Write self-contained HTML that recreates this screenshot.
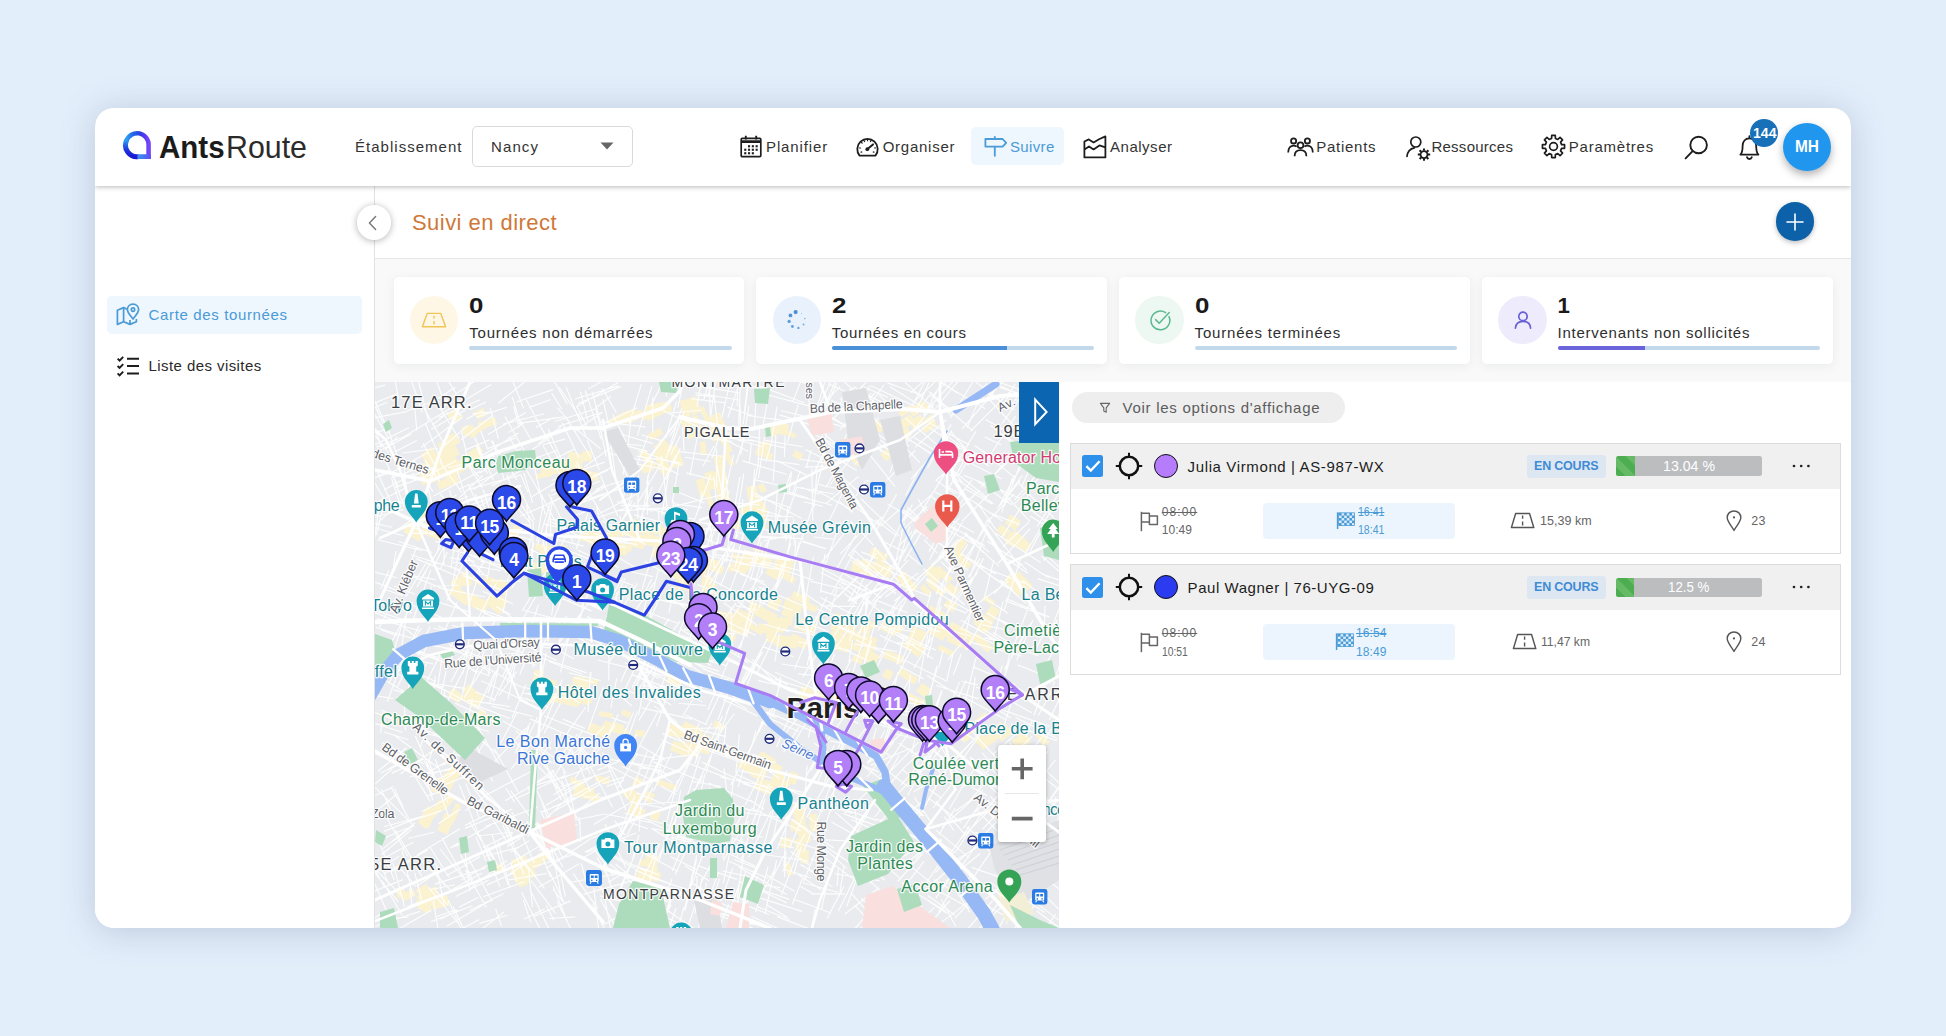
<!DOCTYPE html>
<html lang="fr"><head><meta charset="utf-8"><title>AntsRoute - Suivi en direct</title>
<style>
html,body{margin:0;padding:0}
body{width:1946px;height:1036px;overflow:hidden;background:#e3eefb;font-family:"Liberation Sans",sans-serif;color:#222;position:relative}
.app{position:absolute;left:95px;top:108px;width:1756px;height:820px;border-radius:19px;background:#fff;box-shadow:0 3px 34px rgba(80,100,135,.27);overflow:hidden}
.inner{position:absolute;left:-95px;top:-108px;width:1946px;height:1036px}
.inner div,.inner svg,.inner span.t{position:absolute}
span.t{white-space:nowrap;display:block}
s{text-decoration:line-through}
text.ml{font-family:"Liberation Sans",sans-serif;paint-order:stroke;stroke:#fff;stroke-width:2.6px;stroke-opacity:.85;stroke-linejoin:round}
text.pn{font-family:"Liberation Sans",sans-serif;font-weight:700;font-size:17.5px;fill:#fff;letter-spacing:-.3px}

</style></head>
<body>
<div class="app"><div class="inner">
<div style="left:95px;top:186px;width:279px;height:742px;background:#fff;border-right:1px solid #e2e2e2"></div>
<div style="left:375px;top:186px;width:1476px;height:72px;background:#fff;border-bottom:1px solid #e6e6e6"></div>
<div style="left:375px;top:259px;width:1476px;height:123px;background:#f9f9f9"></div>
<div style="left:1059px;top:382px;width:792px;height:546px;background:#fff"></div>
<div style="left:95px;top:108px;width:1756px;height:78px;background:#fff;box-shadow:0 1px 5px rgba(0,0,0,.28);z-index:5"></div>
<div style="left:0;top:0;width:1946px;height:1036px;z-index:6">
<svg style="left:121px;top:129px;" width="32" height="32" viewBox="0 0 32 32"><defs>
<linearGradient id="lg1" x1="0" y1="0" x2="1" y2="0"><stop offset="0" stop-color="#2e9ff3"/><stop offset=".3" stop-color="#2466e6"/><stop offset=".62" stop-color="#2b3fe2"/><stop offset=".85" stop-color="#6238f2"/><stop offset="1" stop-color="#7346f7"/></linearGradient>
<linearGradient id="lg2" x1="0" y1="0" x2="0" y2="1"><stop offset="0" stop-color="#2e9ff3"/><stop offset=".55" stop-color="#2038dc"/><stop offset="1" stop-color="#1a18d2"/></linearGradient>
<linearGradient id="lg3" gradientUnits="userSpaceOnUse" x1="15" y1="0" x2="30.5" y2="0"><stop offset="0" stop-color="#3b96f4"/><stop offset=".6" stop-color="#4a6cf3"/><stop offset="1" stop-color="#6a44f6"/></linearGradient>
</defs>
<path d="M27.6 29.9 V16.2 A11.4 11.4 0 0 0 5.4 12" fill="none" stroke="url(#lg1)" stroke-width="4.5"/>
<path d="M5.7 11.2 A11.4 11.4 0 0 0 17.6 27.5" fill="none" stroke="url(#lg2)" stroke-width="5"/>
<path d="M16.4 27.55 H29.85" fill="none" stroke="url(#lg3)" stroke-width="4.7"/></svg>
<span class="t" style="left:158.6px;top:133.34px;font-size:30.9px;line-height:30.9px;font-weight:700;color:#1b1b1b;transform:scaleX(0.9555);transform-origin:0 0;">Ants</span>
<span class="t" style="left:226.2px;top:133.34px;font-size:30.9px;line-height:30.9px;color:#2b2b2b;transform:scaleX(0.9826);transform-origin:0 0;">Route</span>
<span class="t" style="left:355px;top:138.80px;font-size:15px;line-height:15px;color:#333;letter-spacing:1.023px;">Établissement</span>
<div style="left:472px;top:126px;width:161px;height:41px;border:1px solid #d9d9d9;border-radius:5px;box-sizing:border-box;background:#fff"></div>
<span class="t" style="left:491px;top:138.80px;font-size:15px;line-height:15px;color:#333;letter-spacing:1.117px;">Nancy</span>
<svg style="left:600px;top:142px;" width="14" height="8" viewBox="0 0 14 8"><path d="M0.5 0.5 H13.5 L7 7.6 Z" fill="#666"/></svg>
<svg style="left:740px;top:135px;" width="22" height="23" viewBox="0 0 22 23"><g fill="none" stroke="#1d1d1d" stroke-width="1.7"><rect x="1.2" y="3.4" width="19.6" height="18.2" rx="1"/><path d="M1.2 6.6H20.8" stroke-width="2.6"/><path d="M5.8 0.8V4.6M16.2 0.8V4.6" stroke-width="1.9"/></g>
<g fill="#1d1d1d"><rect x="8.0" y="10.2" width="2.1" height="2.1"/><rect x="11.8" y="10.2" width="2.1" height="2.1"/><rect x="15.6" y="10.2" width="2.1" height="2.1"/><rect x="4.2" y="13.7" width="2.1" height="2.1"/><rect x="8.0" y="13.7" width="2.1" height="2.1"/><rect x="11.8" y="13.7" width="2.1" height="2.1"/><rect x="15.6" y="13.7" width="2.1" height="2.1"/><rect x="4.2" y="17.2" width="2.1" height="2.1"/><rect x="8.0" y="17.2" width="2.1" height="2.1"/><rect x="11.8" y="17.2" width="2.1" height="2.1"/></g></svg>
<span class="t" style="left:766px;top:138.70px;font-size:15px;line-height:15px;color:#333;letter-spacing:0.875px;">Planifier</span>
<svg style="left:856px;top:136px;" width="23" height="21" viewBox="0 0 23 21"><g fill="none" stroke="#1d1d1d" stroke-width="1.8"><path d="M3.6 19.6 A10.2 10.2 0 1 1 19.4 19.6 Z" stroke-linejoin="round"/><path d="M11.5 13 L17 8.4" stroke-width="2" stroke-linecap="round"/></g><circle cx="11.3" cy="13.2" r="1.9" fill="#1d1d1d"/>
<g stroke="#1d1d1d" stroke-width="1.2"><path d="M11.5 3.2v2M5.2 6.2l1.3 1.3M3 12h1.9M18.1 12H20M4.6 16.4l1.6-.7M16.8 15.7l1.6.7M7.9 4.2l.8 1.7M15.1 4.2l-.8 1.7"/></g></svg>
<span class="t" style="left:882.7px;top:138.70px;font-size:15px;line-height:15px;color:#333;letter-spacing:0.743px;">Organiser</span>
<div style="left:970.5px;top:127px;width:93.5px;height:38.2px;background:#eef6fe;border-radius:5px"></div>
<svg style="left:983px;top:135px;" width="25" height="23" viewBox="0 0 25 23"><g fill="none" stroke="#4a9bd6" stroke-width="1.8" stroke-linejoin="round"><path d="M2.4 4 H19.6 L23.2 7.8 L19.6 11.6 H2.4 Z"/><path d="M11.8 1.8V4M11.8 11.6V20.8" stroke-linecap="round"/></g></svg>
<span class="t" style="left:1010px;top:138.70px;font-size:15px;line-height:15px;color:#4a9bd6;letter-spacing:0.354px;">Suivre</span>
<svg style="left:1083px;top:135px;" width="24" height="24" viewBox="0 0 24 24"><g fill="none" stroke="#1d1d1d" stroke-width="1.8" stroke-linejoin="round"><path d="M1.4 6.5 L5.8 4.4 L10.6 7.4 L16 4.2 L22.4 1.4 V22.4 H1.4 Z"/><path d="M1.4 14.6 L6 11.4 L10.6 14.4 L16.4 10.4 L22.4 12.4"/></g></svg>
<span class="t" style="left:1110px;top:138.70px;font-size:15px;line-height:15px;color:#333;letter-spacing:0.520px;">Analyser</span>
<svg style="left:1287px;top:137px;" width="27" height="20" viewBox="0 0 27 20"><g fill="none" stroke="#1d1d1d" stroke-width="1.8"><circle cx="6.6" cy="3.9" r="2.6"/><circle cx="20.4" cy="3.9" r="2.6"/><circle cx="13.5" cy="8.3" r="2.9"/>
<path d="M1.2 15.6 C1.2 10.6 4 8.6 6.6 8.6 C8 8.6 8.8 9 9.6 9.6M25.8 15.6 C25.8 10.6 23 8.6 20.4 8.6 C19 8.6 18.2 9 17.4 9.6M7.6 19.2 C7.6 15.2 10 13.2 13.5 13.2 C17 13.2 19.4 15.2 19.4 19.2"/></g></svg>
<span class="t" style="left:1316.2px;top:138.70px;font-size:15px;line-height:15px;color:#333;letter-spacing:0.742px;">Patients</span>
<svg style="left:1405px;top:135px;" width="27" height="27" viewBox="0 0 27 27"><g fill="none" stroke="#1d1d1d" stroke-width="1.7"><circle cx="10.8" cy="7" r="5"/><path d="M2 21.4 C2.6 15.6 6 13.4 9.4 12.8" stroke-linecap="round"/></g>
<g transform="translate(19 19.6)"><circle r="3.5" fill="none" stroke="#1d1d1d" stroke-width="1.8"/><g stroke="#1d1d1d" stroke-width="2"><path d="M0-6.2V-4M0 6.2V4M-6.2 0H-4M6.2 0H4M-4.4-4.4l1.5 1.5M4.4 4.4l-1.5-1.5M-4.4 4.4l1.5-1.5M4.4-4.4l-1.5 1.5"/></g></g></svg>
<span class="t" style="left:1431.4px;top:138.70px;font-size:15px;line-height:15px;color:#333;letter-spacing:0.266px;">Ressources</span>
<svg style="left:1541px;top:134px;" width="25" height="25" viewBox="0 0 25 25"><g transform="translate(12.5 12.5)"><path d="M-1.78 -11.06 L1.78 -11.06 L1.93 -8.07 L4.34 -7.07 L6.56 -9.08 L9.08 -6.56 L7.07 -4.34 L8.07 -1.93 L11.06 -1.78 L11.06 1.78 L8.07 1.93 L7.07 4.34 L9.08 6.56 L6.56 9.08 L4.34 7.07 L1.93 8.07 L1.78 11.06 L-1.78 11.06 L-1.93 8.07 L-4.34 7.07 L-6.56 9.08 L-9.08 6.56 L-7.07 4.34 L-8.07 1.93 L-11.06 1.78 L-11.06 -1.78 L-8.07 -1.93 L-7.07 -4.34 L-9.08 -6.56 L-6.56 -9.08 L-4.34 -7.07 L-1.93 -8.07Z" fill="none" stroke="#1d1d1d" stroke-width="1.7" stroke-linejoin="round"/><circle r="3.9" fill="none" stroke="#1d1d1d" stroke-width="1.7"/></g></svg>
<span class="t" style="left:1568.8px;top:138.70px;font-size:15px;line-height:15px;color:#333;letter-spacing:0.763px;">Paramètres</span>
<svg style="left:1684px;top:135px;" width="26" height="25" viewBox="0 0 26 25"><g fill="none" stroke="#1d1d1d" stroke-width="1.9" stroke-linecap="round"><circle cx="14.6" cy="10" r="8.3"/><path d="M8.6 16.2 L1.6 23.4"/></g></svg>
<svg style="left:1739px;top:135px;" width="21" height="26" viewBox="0 0 21 26"><g fill="none" stroke="#1d1d1d" stroke-width="1.8" stroke-linejoin="round"><path d="M1.4 19.6 C3.4 17.8 3.6 15.4 3.6 11 C3.6 6.4 6.2 3.4 10.4 3.4 C14.6 3.4 17.2 6.4 17.2 11 C17.2 15.4 17.4 17.8 19.4 19.6 Z"/><path d="M10.4 3.2V1.2M8 22.2 A2.5 2.5 0 0 0 12.8 22.2" stroke-linecap="round"/></g></svg>
<div style="left:1750.3px;top:119.4px;width:27.8px;height:27.8px;background:#1870b8;border-radius:50%"></div>
<span class="t" style="left:1752.8px;top:125.93px;font-size:14.5px;line-height:14.5px;font-weight:700;color:#fff;transform:scaleX(0.9709);transform-origin:0 0;">144</span>
<div style="left:1783.3px;top:122.9px;width:48px;height:48px;background:#2096ee;border-radius:50%;box-shadow:0 4px 9px rgba(0,0,0,.30)"></div>
<span class="t" style="left:1795.2px;top:139.06px;font-size:16px;line-height:16px;font-weight:700;color:#fff;transform:scaleX(0.9642);transform-origin:0 0;">MH</span>
</div>
<div style="left:356.5px;top:205.3px;width:34.6px;height:34.6px;background:#fff;border-radius:50%;box-shadow:0 1px 7px rgba(0,0,0,.30);z-index:4"></div>
<svg style="left:366px;top:214px;z-index:4" width="14" height="18" viewBox="0 0 14 18"><path d="M9.6 2.4 L3.4 9 L9.6 15.6" fill="none" stroke="#777" stroke-width="1.4" stroke-linecap="round" stroke-linejoin="round"/></svg>
<span class="t" style="left:412px;top:211.68px;font-size:22px;line-height:22px;color:#cf7838;letter-spacing:0.451px;">Suivi en direct</span>
<div style="left:1775.6px;top:202.1px;width:38.8px;height:38.8px;background:#0d61a9;border-radius:50%;box-shadow:0 2px 5px rgba(0,0,0,.25)"></div>
<svg style="left:1785px;top:211.5px;" width="20" height="20" viewBox="0 0 20 20"><path d="M10 2V18M2 10H18" stroke="#fff" stroke-width="1.6" stroke-linecap="round"/></svg>
<div style="left:107px;top:295.5px;width:255px;height:38.5px;background:#eef6fe;border-radius:5px"></div>
<svg style="left:116px;top:303px;" width="24" height="23" viewBox="0 0 24 23"><g fill="none" stroke="#4a9bd6" stroke-width="1.7" stroke-linejoin="round"><path d="M11 6.2 L7.6 4.6 L1.4 7.2 V21.4 L7.6 18.8 L14 21.4 L20.4 18.8 V16"/><path d="M7.6 4.6V18.8M14 17V21.4"/><path d="M17 1.2 C13.6 1.2 11.4 3.6 11.4 6.6 C11.4 10 14.6 12.8 17 16 C19.4 12.8 22.6 10 22.6 6.6 C22.6 3.6 20.4 1.2 17 1.2 Z"/><circle cx="17" cy="6.6" r="1.7"/></g></svg>
<span class="t" style="left:148.6px;top:306.90px;font-size:15px;line-height:15px;color:#4a9bd6;letter-spacing:0.637px;">Carte des tournées</span>
<svg style="left:116px;top:356px;" width="24" height="22" viewBox="0 0 24 22"><g fill="none" stroke="#1d1d1d" stroke-width="2"><path d="M11 2.7H23M11 10.1H23M11 17.5H23" stroke-width="2"/><path d="M1.6 2.6 L3.6 4.6 L7.2 0.8M1.6 10 L3.6 12 L7.2 8.2M1.6 17.4 L3.6 19.4 L7.2 15.6" stroke-width="1.9"/></g></svg>
<span class="t" style="left:148.6px;top:358.30px;font-size:15px;line-height:15px;color:#2a2a2a;letter-spacing:0.419px;">Liste des visites</span>
<div style="left:393.7px;top:276.6px;width:350.5px;height:87.2px;background:#fff;border-radius:5px;box-shadow:0 2px 10px rgba(120,130,150,.12)"></div>
<div style="left:410px;top:296px;width:48.4px;height:48.4px;background:#fef7e6;border-radius:50%"></div>
<svg style="left:420.2px;top:306.2px;" width="28" height="28" viewBox="0 0 28 28"><g fill="none" stroke="#efc558" stroke-width="1.4" stroke-linejoin="round"><path d="M7.2 7.4 H20.8 L25.6 20.8 H2.4 Z"/><path d="M14 9.8v2.6M14 15v3.4" stroke-width="1.4"/></g></svg>
<span class="t" style="left:469.3px;top:295.32px;font-size:22.3px;line-height:22.3px;font-weight:700;color:#1a1a1a;transform:scaleX(1.1600);transform-origin:0 0;">0</span>
<span class="t" style="left:469.3px;top:325.10px;font-size:15px;line-height:15px;color:#2e2e2e;letter-spacing:0.787px;">Tournées non démarrées</span>
<div style="left:469.3px;top:345.6px;width:262.6px;height:4.3px;background:#c2d8eb;border-radius:2px"></div>
<div style="left:756.2px;top:276.6px;width:350.5px;height:87.2px;background:#fff;border-radius:5px;box-shadow:0 2px 10px rgba(120,130,150,.12)"></div>
<div style="left:772.5px;top:296px;width:48.4px;height:48.4px;background:#e9f2fc;border-radius:50%"></div>
<svg style="left:782.7px;top:306.2px;" width="28" height="28" viewBox="0 0 28 28"><g fill="#4a8fd6"><circle cx="12.61" cy="6.12" r="2.10" opacity="1.00"/><circle cx="7.45" cy="9.41" r="1.88" opacity="0.94"/><circle cx="6.12" cy="15.39" r="1.66" opacity="0.88"/><circle cx="9.41" cy="20.55" r="1.44" opacity="0.82"/><circle cx="15.39" cy="21.88" r="1.22" opacity="0.76"/><circle cx="20.55" cy="18.59" r="1.00" opacity="0.70"/><circle cx="21.88" cy="12.61" r="0.78" opacity="0.64"/><circle cx="18.59" cy="7.45" r="0.56" opacity="0.58"/></g></svg>
<span class="t" style="left:831.8px;top:295.32px;font-size:22.3px;line-height:22.3px;font-weight:700;color:#1a1a1a;transform:scaleX(1.1600);transform-origin:0 0;">2</span>
<span class="t" style="left:831.8px;top:325.10px;font-size:15px;line-height:15px;color:#2e2e2e;letter-spacing:0.675px;">Tournées en cours</span>
<div style="left:831.8px;top:345.6px;width:262.6px;height:4.3px;background:#c2d8eb;border-radius:2px"></div>
<div style="left:831.8px;top:345.6px;width:175px;height:4.3px;background:#4a90d9;border-radius:2px 0 0 2px"></div>
<div style="left:1119px;top:276.6px;width:350.5px;height:87.2px;background:#fff;border-radius:5px;box-shadow:0 2px 10px rgba(120,130,150,.12)"></div>
<div style="left:1135.3px;top:296px;width:48.4px;height:48.4px;background:#edf8f2;border-radius:50%"></div>
<svg style="left:1145.5px;top:306.2px;" width="28" height="28" viewBox="0 0 28 28"><g fill="none" stroke="#5cb891" stroke-width="1.5" stroke-linecap="round" stroke-linejoin="round"><path d="M23 10.6 A9.4 9.4 0 1 1 19.6 6.6"/><path d="M9.6 13.6 L13.2 17.2 L23.2 6.6"/></g></svg>
<span class="t" style="left:1194.6px;top:295.32px;font-size:22.3px;line-height:22.3px;font-weight:700;color:#1a1a1a;transform:scaleX(1.1600);transform-origin:0 0;">0</span>
<span class="t" style="left:1194.6px;top:325.10px;font-size:15px;line-height:15px;color:#2e2e2e;letter-spacing:0.816px;">Tournées terminées</span>
<div style="left:1194.6px;top:345.6px;width:262.6px;height:4.3px;background:#c2d8eb;border-radius:2px"></div>
<div style="left:1482px;top:276.6px;width:350.5px;height:87.2px;background:#fff;border-radius:5px;box-shadow:0 2px 10px rgba(120,130,150,.12)"></div>
<div style="left:1498.3px;top:296px;width:48.4px;height:48.4px;background:#eeecfc;border-radius:50%"></div>
<svg style="left:1508.5px;top:306.2px;" width="28" height="28" viewBox="0 0 28 28"><g fill="none" stroke="#6a60d6" stroke-width="1.7" stroke-linecap="round"><circle cx="14" cy="10.4" r="4.2"/><path d="M6.4 22.2 C6.8 17.4 10 15.4 14 15.4 C18 15.4 21.2 17.4 21.6 22.2"/></g></svg>
<span class="t" style="left:1557.6px;top:295.32px;font-size:22.3px;line-height:22.3px;font-weight:700;color:#1a1a1a;transform:scaleX(1.0000);transform-origin:0 0;">1</span>
<span class="t" style="left:1557.6px;top:325.10px;font-size:15px;line-height:15px;color:#2e2e2e;letter-spacing:0.738px;">Intervenants non sollicités</span>
<div style="left:1557.6px;top:345.6px;width:262.6px;height:4.3px;background:#c2d8eb;border-radius:2px"></div>
<div style="left:1557.6px;top:345.6px;width:87.6px;height:4.3px;background:#6b63da;border-radius:2px 0 0 2px"></div>
<div style="left:1072.2px;top:392.4px;width:272.8px;height:31px;background:#eeeeee;border-radius:16px"></div>
<svg style="left:1099px;top:402px;" width="12" height="12" viewBox="0 0 12 12"><path d="M1.4 1.4 H10.6 L7.2 5.8 V10.2 L4.8 9 V5.8 Z" fill="none" stroke="#666" stroke-width="1.1" stroke-linejoin="round"/></svg>
<span class="t" style="left:1122.6px;top:400.30px;font-size:15px;line-height:15px;color:#5c5c5c;letter-spacing:0.714px;">Voir les options d'affichage</span>
<div style="left:1069.5px;top:443.3px;width:1771.5px;height:110.4px;border:1px solid #dcdcdc;box-sizing:border-box;background:#fff;width:771.5px"></div>
<div style="left:1070.5px;top:444.3px;width:769.5px;height:45px;background:#f0f0f0"></div>
<div style="left:1081.6px;top:455.4px;width:21.6px;height:21.6px;background:#2e90ea;border-radius:2.5px"></div>
<svg style="left:1081.6px;top:455.4px;" width="21.6" height="21.6" viewBox="0 0 21.6 21.6"><path d="M4.4 11.2 L8.8 15.6 L17.6 6.2" fill="none" stroke="#fff" stroke-width="2.4"/></svg>
<svg style="left:1115px;top:452.2px;" width="28" height="28" viewBox="0 0 28 28"><g fill="none" stroke="#111" stroke-width="2.5"><circle cx="14" cy="14" r="9.2"/><path d="M14 0.8V6M14 22V27.2M0.8 14H6M22 14H27.2" stroke-width="2"/></g></svg>
<div style="left:1153.6px;top:454px;width:24.4px;height:24.4px;background:#b57dfc;border-radius:50%;border:1.9px solid #111;box-sizing:border-box"></div>
<span class="t" style="left:1187.6px;top:458.90px;font-size:15px;line-height:15px;color:#1c1c1c;letter-spacing:0.625px;">Julia Virmond | AS-987-WX</span>
<div style="left:1526.6px;top:454.6px;width:79.4px;height:23.2px;background:#dde7f2;border-radius:3px"></div>
<span class="t" style="left:1534px;top:460.22px;font-size:12.5px;line-height:12.5px;font-weight:700;color:#3f8bd4;letter-spacing:-0.198px;">EN COURS</span>
<div style="left:1615.9px;top:456.4px;width:146.2px;height:19.6px;background:#bbbdbf;border-radius:2.5px"></div>
<div style="left:1615.9px;top:456.4px;width:19px;height:19.6px;border-radius:2.5px 0 0 2.5px;background:repeating-linear-gradient(45deg,#4cae50 0 7px,#66ba66 7px 14px)"></div>
<span class="t" style="left:1662.6px;top:459.13px;font-size:14.5px;line-height:14.5px;color:#fff;transform:scaleX(0.9771);transform-origin:0 0;">13.04 %</span>
<svg style="left:1791px;top:463.2px;" width="22" height="6" viewBox="0 0 22 6"><g fill="#222"><circle cx="3" cy="3" r="1.35"/><circle cx="10.2" cy="3" r="1.35"/><circle cx="17.4" cy="3" r="1.35"/></g></svg>
<svg style="left:1140px;top:510.8px;" width="19" height="21" viewBox="0 0 19 21"><g fill="none" stroke="#666" stroke-width="1.5" stroke-linejoin="round"><path d="M1.4 0.8V20.2"/><path d="M1.4 2.2 H9.4 V5 H17.4 V13.6 H9.4 V11 H1.4"/><path d="M9.4 5V11"/></g></svg>
<span class="t" style="left:1161.8px;top:506.24px;font-size:12px;line-height:12px;color:#666;letter-spacing:1.092px;"><s>08:00</s></span>
<span class="t" style="left:1161.8px;top:524.44px;font-size:12px;line-height:12px;color:#666;letter-spacing:0.042px;">10:49</span>
<div style="left:1263.2px;top:502.9px;width:191.6px;height:36.2px;background:#ecf5fd;border-radius:4px"></div>
<svg style="left:1336.4px;top:509.8px;" width="20" height="20" viewBox="0 0 20 20"><path d="M1.6 2.4V19" stroke="#4a9bd6" stroke-width="1.5"/><rect x="2.6" y="2.8" width="15.8" height="12.6" fill="#dcecfb" stroke="#4a9bd6" stroke-width="0.8"/><g fill="#4a9bd6"><rect x="3.0" y="3.0" width="2.6" height="2.6"/><rect x="3.0" y="8.0" width="2.6" height="2.6"/><rect x="3.0" y="13.0" width="2.6" height="2.6"/><rect x="5.6" y="5.5" width="2.6" height="2.6"/><rect x="5.6" y="10.5" width="2.6" height="2.6"/><rect x="8.2" y="3.0" width="2.6" height="2.6"/><rect x="8.2" y="8.0" width="2.6" height="2.6"/><rect x="8.2" y="13.0" width="2.6" height="2.6"/><rect x="10.8" y="5.5" width="2.6" height="2.6"/><rect x="10.8" y="10.5" width="2.6" height="2.6"/><rect x="13.4" y="3.0" width="2.6" height="2.6"/><rect x="13.4" y="8.0" width="2.6" height="2.6"/><rect x="13.4" y="13.0" width="2.6" height="2.6"/><rect x="16.0" y="5.5" width="2.6" height="2.6"/><rect x="16.0" y="10.5" width="2.6" height="2.6"/></g></svg>
<span class="t" style="left:1358px;top:506.24px;font-size:12px;line-height:12px;color:#4a9bd6;transform:scaleX(0.8791);transform-origin:0 0;"><s>16:41</s></span>
<span class="t" style="left:1358px;top:524.44px;font-size:12px;line-height:12px;color:#4a9bd6;transform:scaleX(0.8791);transform-origin:0 0;">18:41</span>
<svg style="left:1510.4px;top:511.8px;" width="26" height="18" viewBox="0 0 26 18"><g fill="none" stroke="#555" stroke-width="1.5" stroke-linejoin="round"><path d="M5.6 1.6 H19.6 L23.8 15.6 H1.4 Z"/><path d="M12.6 3.4v3.4M12.6 9.4v4" stroke-width="1.4"/></g></svg>
<span class="t" style="left:1540px;top:514.62px;font-size:12.5px;line-height:12.5px;color:#666;letter-spacing:0.025px;">15,39 km</span>
<svg style="left:1726.4px;top:510.2px;" width="16" height="22" viewBox="0 0 16 22"><g fill="none" stroke="#555" stroke-width="1.4"><path d="M8 1 C4 1 1.2 3.8 1.2 7.6 C1.2 11.6 5.2 15.6 8 20.4 C10.8 15.6 14.8 11.6 14.8 7.6 C14.8 3.8 12 1 8 1 Z" stroke-linejoin="round"/></g><circle cx="8" cy="7.4" r="1.1" fill="#555"/></svg>
<span class="t" style="left:1751.2px;top:514.62px;font-size:12.5px;line-height:12.5px;color:#666;letter-spacing:0.294px;">23</span>
<div style="left:1069.5px;top:564.4px;width:1771.5px;height:110.4px;border:1px solid #dcdcdc;box-sizing:border-box;background:#fff;width:771.5px"></div>
<div style="left:1070.5px;top:565.4px;width:769.5px;height:45px;background:#f0f0f0"></div>
<div style="left:1081.6px;top:576.5px;width:21.6px;height:21.6px;background:#2e90ea;border-radius:2.5px"></div>
<svg style="left:1081.6px;top:576.5px;" width="21.6" height="21.6" viewBox="0 0 21.6 21.6"><path d="M4.4 11.2 L8.8 15.6 L17.6 6.2" fill="none" stroke="#fff" stroke-width="2.4"/></svg>
<svg style="left:1115px;top:573.3px;" width="28" height="28" viewBox="0 0 28 28"><g fill="none" stroke="#111" stroke-width="2.5"><circle cx="14" cy="14" r="9.2"/><path d="M14 0.8V6M14 22V27.2M0.8 14H6M22 14H27.2" stroke-width="2"/></g></svg>
<div style="left:1153.6px;top:575.1px;width:24.4px;height:24.4px;background:#2b3cf0;border-radius:50%;border:1.9px solid #111;box-sizing:border-box"></div>
<span class="t" style="left:1187.6px;top:580.00px;font-size:15px;line-height:15px;color:#1c1c1c;letter-spacing:0.542px;">Paul Wagner | 76-UYG-09</span>
<div style="left:1526.6px;top:575.7px;width:79.4px;height:23.2px;background:#dde7f2;border-radius:3px"></div>
<span class="t" style="left:1534px;top:581.32px;font-size:12.5px;line-height:12.5px;font-weight:700;color:#3f8bd4;letter-spacing:-0.198px;">EN COURS</span>
<div style="left:1615.9px;top:577.5px;width:146.2px;height:19.6px;background:#bbbdbf;border-radius:2.5px"></div>
<div style="left:1615.9px;top:577.5px;width:18.4px;height:19.6px;border-radius:2.5px 0 0 2.5px;background:repeating-linear-gradient(45deg,#4cae50 0 7px,#66ba66 7px 14px)"></div>
<span class="t" style="left:1668px;top:580.23px;font-size:14.5px;line-height:14.5px;color:#fff;transform:scaleX(0.9168);transform-origin:0 0;">12.5 %</span>
<svg style="left:1791px;top:584.3px;" width="22" height="6" viewBox="0 0 22 6"><g fill="#222"><circle cx="3" cy="3" r="1.35"/><circle cx="10.2" cy="3" r="1.35"/><circle cx="17.4" cy="3" r="1.35"/></g></svg>
<svg style="left:1140px;top:631.9px;" width="19" height="21" viewBox="0 0 19 21"><g fill="none" stroke="#666" stroke-width="1.5" stroke-linejoin="round"><path d="M1.4 0.8V20.2"/><path d="M1.4 2.2 H9.4 V5 H17.4 V13.6 H9.4 V11 H1.4"/><path d="M9.4 5V11"/></g></svg>
<span class="t" style="left:1161.8px;top:627.34px;font-size:12px;line-height:12px;color:#666;letter-spacing:1.092px;"><s>08:00</s></span>
<span class="t" style="left:1161.8px;top:645.54px;font-size:12px;line-height:12px;color:#666;transform:scaleX(0.8591);transform-origin:0 0;">10:51</span>
<div style="left:1263.2px;top:624px;width:191.6px;height:36.2px;background:#ecf5fd;border-radius:4px"></div>
<svg style="left:1334.8px;top:630.9px;" width="20" height="20" viewBox="0 0 20 20"><path d="M1.6 2.4V19" stroke="#4a9bd6" stroke-width="1.5"/><rect x="2.6" y="2.8" width="15.8" height="12.6" fill="#dcecfb" stroke="#4a9bd6" stroke-width="0.8"/><g fill="#4a9bd6"><rect x="3.0" y="3.0" width="2.6" height="2.6"/><rect x="3.0" y="8.0" width="2.6" height="2.6"/><rect x="3.0" y="13.0" width="2.6" height="2.6"/><rect x="5.6" y="5.5" width="2.6" height="2.6"/><rect x="5.6" y="10.5" width="2.6" height="2.6"/><rect x="8.2" y="3.0" width="2.6" height="2.6"/><rect x="8.2" y="8.0" width="2.6" height="2.6"/><rect x="8.2" y="13.0" width="2.6" height="2.6"/><rect x="10.8" y="5.5" width="2.6" height="2.6"/><rect x="10.8" y="10.5" width="2.6" height="2.6"/><rect x="13.4" y="3.0" width="2.6" height="2.6"/><rect x="13.4" y="8.0" width="2.6" height="2.6"/><rect x="13.4" y="13.0" width="2.6" height="2.6"/><rect x="16.0" y="5.5" width="2.6" height="2.6"/><rect x="16.0" y="10.5" width="2.6" height="2.6"/></g></svg>
<span class="t" style="left:1356px;top:627.34px;font-size:12px;line-height:12px;color:#4a9bd6;letter-spacing:0.092px;"><s>16:54</s></span>
<span class="t" style="left:1356px;top:645.54px;font-size:12px;line-height:12px;color:#4a9bd6;letter-spacing:0.092px;">18:49</span>
<svg style="left:1511.6px;top:632.9px;" width="26" height="18" viewBox="0 0 26 18"><g fill="none" stroke="#555" stroke-width="1.5" stroke-linejoin="round"><path d="M5.6 1.6 H19.6 L23.8 15.6 H1.4 Z"/><path d="M12.6 3.4v3.4M12.6 9.4v4" stroke-width="1.4"/></g></svg>
<span class="t" style="left:1541.4px;top:635.72px;font-size:12.5px;line-height:12.5px;color:#666;transform:scaleX(0.9703);transform-origin:0 0;">11,47 km</span>
<svg style="left:1726.4px;top:631.3px;" width="16" height="22" viewBox="0 0 16 22"><g fill="none" stroke="#555" stroke-width="1.4"><path d="M8 1 C4 1 1.2 3.8 1.2 7.6 C1.2 11.6 5.2 15.6 8 20.4 C10.8 15.6 14.8 11.6 14.8 7.6 C14.8 3.8 12 1 8 1 Z" stroke-linejoin="round"/></g><circle cx="8" cy="7.4" r="1.1" fill="#555"/></svg>
<span class="t" style="left:1751.2px;top:635.72px;font-size:12.5px;line-height:12.5px;color:#666;letter-spacing:0.294px;">24</span>
<svg style="left:375px;top:382px" width="684" height="546" viewBox="375 382 684 546"><rect x="375" y="382" width="684" height="546" fill="#e9ebee"/><rect x="433.0" y="454.7" width="17.1" height="5.5" fill="#fbf2d0" transform="rotate(-24 441.5 457.4)"/><rect x="436.0" y="451.5" width="15.1" height="5.3" fill="#fbf2d0" transform="rotate(-27 443.6 454.1)"/><rect x="422.4" y="449.9" width="13.9" height="10.8" fill="#fbf2d0" transform="rotate(-34 429.4 455.3)"/><rect x="426.1" y="470.1" width="21.3" height="9.0" fill="#fbf2d0" transform="rotate(-27 436.7 474.6)"/><rect x="462.9" y="450.2" width="20.0" height="7.0" fill="#fbf2d0" transform="rotate(-34 472.9 453.7)"/><rect x="421.9" y="460.0" width="19.4" height="6.3" fill="#fbf2d0" transform="rotate(-23 431.7 463.1)"/><rect x="448.8" y="462.7" width="15.7" height="5.4" fill="#fbf2d0" transform="rotate(-36 456.7 465.4)"/><rect x="428.9" y="472.9" width="14.0" height="7.2" fill="#fbf2d0" transform="rotate(-23 435.9 476.5)"/><rect x="438.2" y="457.8" width="19.1" height="9.9" fill="#fbf2d0" transform="rotate(-31 447.8 462.8)"/><rect x="443.4" y="465.9" width="20.3" height="10.1" fill="#fbf2d0" transform="rotate(-30 453.6 470.9)"/><rect x="466.1" y="451.1" width="13.9" height="10.3" fill="#fbf2d0" transform="rotate(-33 473.0 456.3)"/><rect x="440.8" y="448.2" width="17.4" height="10.4" fill="#fbf2d0" transform="rotate(-23 449.5 453.4)"/><rect x="459.2" y="458.7" width="17.7" height="9.2" fill="#fbf2d0" transform="rotate(-23 468.0 463.3)"/><rect x="437.3" y="478.1" width="21.2" height="8.3" fill="#fbf2d0" transform="rotate(-21 447.9 482.2)"/><rect x="420.4" y="471.3" width="17.1" height="12.0" fill="#fbf2d0" transform="rotate(-17 428.9 477.3)"/><rect x="431.0" y="463.3" width="17.4" height="5.2" fill="#fbf2d0" transform="rotate(-26 439.7 465.9)"/><rect x="413.6" y="503.3" width="8.8" height="10.4" fill="#fbf2d0" transform="rotate(16 418.0 508.5)"/><rect x="410.8" y="513.9" width="20.2" height="5.6" fill="#fbf2d0" transform="rotate(24 420.9 516.7)"/><rect x="422.0" y="526.0" width="19.5" height="11.0" fill="#fbf2d0" transform="rotate(20 431.8 531.5)"/><rect x="416.8" y="509.9" width="20.4" height="11.7" fill="#fbf2d0" transform="rotate(17 427.0 515.8)"/><rect x="412.7" y="507.8" width="11.3" height="8.4" fill="#fbf2d0" transform="rotate(27 418.3 512.0)"/><rect x="414.5" y="501.3" width="13.9" height="7.6" fill="#fbf2d0" transform="rotate(27 421.5 505.1)"/><rect x="438.7" y="521.1" width="15.2" height="9.3" fill="#fbf2d0" transform="rotate(29 446.3 525.7)"/><rect x="404.5" y="526.4" width="18.9" height="11.1" fill="#fbf2d0" transform="rotate(32 413.9 532.0)"/><rect x="490.1" y="532.9" width="9.4" height="9.4" fill="#fbf2d0" transform="rotate(14 494.8 537.6)"/><rect x="474.1" y="529.3" width="10.3" height="7.4" fill="#fbf2d0" transform="rotate(14 479.2 533.0)"/><rect x="471.3" y="527.9" width="9.4" height="7.5" fill="#fbf2d0" transform="rotate(14 476.0 531.6)"/><rect x="512.9" y="539.4" width="10.1" height="6.8" fill="#fbf2d0" transform="rotate(21 518.0 542.7)"/><rect x="483.5" y="525.0" width="19.9" height="12.0" fill="#fbf2d0" transform="rotate(24 493.5 530.9)"/><rect x="494.5" y="526.4" width="9.4" height="7.4" fill="#fbf2d0" transform="rotate(19 499.2 530.1)"/><rect x="511.6" y="526.0" width="8.3" height="11.7" fill="#fbf2d0" transform="rotate(26 515.8 531.9)"/><rect x="478.8" y="536.7" width="8.4" height="8.7" fill="#fbf2d0" transform="rotate(36 483.0 541.0)"/><rect x="511.6" y="540.9" width="11.7" height="7.6" fill="#fbf2d0" transform="rotate(17 517.4 544.7)"/><rect x="503.6" y="537.1" width="18.9" height="7.3" fill="#fbf2d0" transform="rotate(18 513.1 540.8)"/><rect x="485.0" y="599.2" width="19.9" height="10.6" fill="#fbf2d0" transform="rotate(38 495.0 604.5)"/><rect x="483.9" y="578.1" width="15.2" height="7.5" fill="#fbf2d0" transform="rotate(19 491.5 581.8)"/><rect x="451.5" y="578.5" width="11.6" height="9.8" fill="#fbf2d0" transform="rotate(41 457.3 583.4)"/><rect x="466.6" y="597.3" width="21.8" height="11.7" fill="#fbf2d0" transform="rotate(27 477.5 603.1)"/><rect x="461.2" y="578.6" width="10.8" height="6.4" fill="#fbf2d0" transform="rotate(33 466.6 581.8)"/><rect x="491.9" y="595.4" width="14.7" height="9.6" fill="#fbf2d0" transform="rotate(37 499.2 600.2)"/><rect x="449.7" y="589.6" width="20.7" height="10.5" fill="#fbf2d0" transform="rotate(36 460.1 594.8)"/><rect x="469.4" y="576.7" width="19.0" height="7.3" fill="#fbf2d0" transform="rotate(37 478.9 580.4)"/><rect x="495.8" y="581.1" width="13.6" height="11.6" fill="#fbf2d0" transform="rotate(35 502.6 586.9)"/><rect x="459.1" y="573.1" width="10.1" height="11.3" fill="#fbf2d0" transform="rotate(37 464.2 578.8)"/><rect x="532.2" y="563.0" width="21.7" height="9.6" fill="#fbf2d0" transform="rotate(6 543.0 567.8)"/><rect x="558.2" y="545.2" width="8.2" height="11.8" fill="#fbf2d0" transform="rotate(14 562.3 551.1)"/><rect x="554.2" y="564.9" width="14.1" height="11.1" fill="#fbf2d0" transform="rotate(18 561.3 570.4)"/><rect x="540.1" y="550.7" width="12.1" height="6.7" fill="#fbf2d0" transform="rotate(12 546.1 554.0)"/><rect x="543.5" y="552.4" width="9.8" height="11.4" fill="#fbf2d0" transform="rotate(6 548.4 558.1)"/><rect x="547.7" y="558.0" width="20.7" height="7.9" fill="#fbf2d0" transform="rotate(20 558.0 562.0)"/><rect x="552.4" y="558.2" width="15.3" height="5.1" fill="#fbf2d0" transform="rotate(9 560.1 560.8)"/><rect x="535.2" y="545.0" width="19.2" height="6.2" fill="#fbf2d0" transform="rotate(9 544.8 548.1)"/><rect x="644.5" y="537.4" width="12.6" height="8.6" fill="#fbf2d0" transform="rotate(11 650.8 541.7)"/><rect x="645.7" y="524.8" width="15.8" height="6.7" fill="#fbf2d0" transform="rotate(5 653.6 528.2)"/><rect x="645.1" y="535.1" width="15.9" height="10.3" fill="#fbf2d0" transform="rotate(20 653.1 540.2)"/><rect x="629.7" y="539.1" width="15.1" height="8.6" fill="#fbf2d0" transform="rotate(15 637.3 543.4)"/><rect x="630.4" y="535.2" width="14.7" height="11.6" fill="#fbf2d0" transform="rotate(15 637.7 541.0)"/><rect x="652.3" y="548.8" width="11.6" height="8.9" fill="#fbf2d0" transform="rotate(21 658.1 553.3)"/><rect x="651.5" y="525.1" width="9.7" height="8.1" fill="#fbf2d0" transform="rotate(-0 656.3 529.1)"/><rect x="618.9" y="521.9" width="17.4" height="10.5" fill="#fbf2d0" transform="rotate(20 627.6 527.2)"/><rect x="614.8" y="543.5" width="17.2" height="6.0" fill="#fbf2d0" transform="rotate(19 623.4 546.5)"/><rect x="651.8" y="527.7" width="21.3" height="7.8" fill="#fbf2d0" transform="rotate(10 662.4 531.6)"/><rect x="658.4" y="546.0" width="10.3" height="8.0" fill="#fbf2d0" transform="rotate(10 663.5 550.0)"/><rect x="626.0" y="525.8" width="12.5" height="10.1" fill="#fbf2d0" transform="rotate(-2 632.3 530.9)"/><rect x="638.5" y="534.6" width="8.3" height="7.3" fill="#fbf2d0" transform="rotate(13 642.6 538.2)"/><rect x="629.7" y="521.7" width="21.8" height="10.5" fill="#fbf2d0" transform="rotate(21 640.6 526.9)"/><rect x="676.8" y="556.3" width="8.6" height="10.5" fill="#fbf2d0" transform="rotate(9 681.0 561.6)"/><rect x="671.8" y="561.8" width="20.8" height="10.7" fill="#fbf2d0" transform="rotate(9 682.2 567.2)"/><rect x="675.2" y="580.1" width="16.0" height="9.9" fill="#fbf2d0" transform="rotate(5 683.2 585.1)"/><rect x="671.8" y="574.0" width="14.0" height="5.5" fill="#fbf2d0" transform="rotate(26 678.8 576.8)"/><rect x="701.9" y="575.4" width="9.2" height="11.0" fill="#fbf2d0" transform="rotate(5 706.5 580.9)"/><rect x="711.0" y="563.9" width="12.7" height="8.9" fill="#fbf2d0" transform="rotate(25 717.4 568.3)"/><rect x="681.2" y="553.3" width="15.4" height="6.7" fill="#fbf2d0" transform="rotate(6 688.9 556.7)"/><rect x="678.3" y="550.2" width="10.8" height="7.2" fill="#fbf2d0" transform="rotate(10 683.7 553.8)"/><rect x="705.0" y="559.3" width="15.0" height="6.2" fill="#fbf2d0" transform="rotate(11 712.5 562.4)"/><rect x="672.8" y="556.0" width="8.2" height="10.1" fill="#fbf2d0" transform="rotate(16 676.9 561.0)"/><rect x="674.6" y="566.2" width="21.1" height="5.7" fill="#fbf2d0" transform="rotate(23 685.1 569.1)"/><rect x="686.9" y="565.9" width="19.7" height="7.8" fill="#fbf2d0" transform="rotate(15 696.7 569.8)"/><rect x="702.6" y="582.0" width="12.8" height="10.8" fill="#fbf2d0" transform="rotate(20 709.0 587.4)"/><rect x="700.1" y="563.9" width="12.9" height="5.4" fill="#fbf2d0" transform="rotate(6 706.5 566.6)"/><rect x="728.5" y="565.6" width="11.6" height="6.1" fill="#fbf2d0" transform="rotate(10 734.2 568.7)"/><rect x="771.8" y="569.9" width="17.4" height="7.0" fill="#fbf2d0" transform="rotate(14 780.5 573.3)"/><rect x="742.5" y="554.5" width="10.2" height="8.1" fill="#fbf2d0" transform="rotate(14 747.6 558.5)"/><rect x="779.9" y="573.7" width="15.7" height="6.7" fill="#fbf2d0" transform="rotate(31 787.7 577.0)"/><rect x="744.6" y="551.0" width="8.0" height="7.7" fill="#fbf2d0" transform="rotate(19 748.6 554.8)"/><rect x="752.6" y="546.7" width="15.1" height="5.0" fill="#fbf2d0" transform="rotate(14 760.2 549.2)"/><rect x="731.1" y="553.8" width="8.6" height="5.2" fill="#fbf2d0" transform="rotate(15 735.4 556.4)"/><rect x="736.3" y="558.0" width="15.4" height="10.3" fill="#fbf2d0" transform="rotate(24 744.0 563.1)"/><rect x="766.2" y="570.0" width="13.5" height="7.3" fill="#fbf2d0" transform="rotate(32 773.0 573.6)"/><rect x="730.5" y="565.4" width="17.0" height="5.3" fill="#fbf2d0" transform="rotate(28 739.0 568.1)"/><rect x="774.4" y="559.2" width="18.3" height="10.7" fill="#fbf2d0" transform="rotate(11 783.5 564.6)"/><rect x="751.6" y="554.8" width="19.7" height="10.6" fill="#fbf2d0" transform="rotate(28 761.4 560.2)"/><rect x="714.2" y="488.6" width="17.6" height="9.9" fill="#fbf2d0" transform="rotate(69 723.0 493.6)"/><rect x="696.6" y="445.1" width="13.0" height="5.7" fill="#fbf2d0" transform="rotate(83 703.1 448.0)"/><rect x="713.7" y="472.8" width="16.8" height="9.8" fill="#fbf2d0" transform="rotate(75 722.1 477.7)"/><rect x="692.9" y="483.6" width="18.5" height="8.5" fill="#fbf2d0" transform="rotate(76 702.1 487.9)"/><rect x="716.6" y="440.6" width="18.3" height="6.8" fill="#fbf2d0" transform="rotate(65 725.7 444.0)"/><rect x="706.1" y="478.7" width="10.9" height="10.2" fill="#fbf2d0" transform="rotate(86 711.6 483.8)"/><rect x="712.4" y="458.1" width="14.7" height="9.8" fill="#fbf2d0" transform="rotate(81 719.8 463.0)"/><rect x="719.7" y="475.5" width="9.1" height="6.0" fill="#fbf2d0" transform="rotate(69 724.2 478.6)"/><rect x="720.8" y="455.7" width="15.9" height="5.1" fill="#fbf2d0" transform="rotate(64 728.8 458.3)"/><rect x="702.8" y="475.5" width="17.7" height="9.7" fill="#fbf2d0" transform="rotate(70 711.7 480.3)"/><rect x="713.3" y="465.0" width="14.5" height="5.8" fill="#fbf2d0" transform="rotate(84 720.6 467.9)"/><rect x="698.6" y="496.1" width="21.1" height="5.1" fill="#fbf2d0" transform="rotate(74 709.2 498.7)"/><rect x="648.2" y="430.6" width="14.3" height="6.9" fill="#fbf2d0" transform="rotate(-27 655.4 434.0)"/><rect x="653.3" y="408.3" width="16.1" height="6.0" fill="#fbf2d0" transform="rotate(-19 661.4 411.3)"/><rect x="652.0" y="404.7" width="19.5" height="8.6" fill="#fbf2d0" transform="rotate(-11 661.7 409.0)"/><rect x="639.5" y="407.7" width="20.6" height="8.4" fill="#fbf2d0" transform="rotate(-31 649.8 411.9)"/><rect x="609.0" y="416.2" width="14.3" height="7.1" fill="#fbf2d0" transform="rotate(-29 616.2 419.8)"/><rect x="622.6" y="412.0" width="19.8" height="5.0" fill="#fbf2d0" transform="rotate(-14 632.5 414.5)"/><rect x="645.8" y="403.6" width="21.0" height="10.0" fill="#fbf2d0" transform="rotate(-10 656.3 408.6)"/><rect x="623.2" y="410.2" width="13.5" height="12.0" fill="#fbf2d0" transform="rotate(-18 629.9 416.2)"/><rect x="627.4" y="415.2" width="11.9" height="5.3" fill="#fbf2d0" transform="rotate(-30 633.3 417.8)"/><rect x="645.5" y="410.2" width="21.1" height="6.7" fill="#fbf2d0" transform="rotate(-26 656.1 413.6)"/><rect x="783.9" y="599.3" width="13.2" height="11.7" fill="#fbf2d0" transform="rotate(29 790.5 605.1)"/><rect x="794.6" y="620.5" width="20.8" height="11.6" fill="#fbf2d0" transform="rotate(21 805.0 626.3)"/><rect x="791.4" y="594.3" width="18.3" height="8.2" fill="#fbf2d0" transform="rotate(26 800.5 598.4)"/><rect x="792.6" y="604.0" width="8.7" height="11.5" fill="#fbf2d0" transform="rotate(11 796.9 609.7)"/><rect x="782.6" y="607.4" width="12.2" height="10.2" fill="#fbf2d0" transform="rotate(31 788.7 612.5)"/><rect x="772.4" y="623.0" width="12.2" height="8.9" fill="#fbf2d0" transform="rotate(17 778.5 627.5)"/><rect x="768.6" y="598.1" width="10.9" height="11.3" fill="#fbf2d0" transform="rotate(20 774.0 603.8)"/><rect x="765.6" y="635.4" width="22.0" height="8.1" fill="#fbf2d0" transform="rotate(11 776.6 639.5)"/><rect x="768.8" y="597.5" width="12.8" height="5.6" fill="#fbf2d0" transform="rotate(14 775.2 600.4)"/><rect x="768.2" y="618.2" width="20.4" height="10.2" fill="#fbf2d0" transform="rotate(18 778.4 623.3)"/><rect x="779.2" y="617.5" width="13.3" height="7.4" fill="#fbf2d0" transform="rotate(9 785.9 621.2)"/><rect x="774.4" y="638.2" width="9.8" height="8.5" fill="#fbf2d0" transform="rotate(23 779.3 642.4)"/><rect x="801.5" y="603.0" width="11.8" height="6.7" fill="#fbf2d0" transform="rotate(18 807.4 606.4)"/><rect x="777.5" y="636.2" width="19.9" height="11.1" fill="#fbf2d0" transform="rotate(9 787.4 641.8)"/><rect x="757.3" y="625.9" width="20.5" height="8.3" fill="#fbf2d0" transform="rotate(22 767.5 630.1)"/><rect x="755.5" y="609.4" width="21.0" height="10.8" fill="#fbf2d0" transform="rotate(29 766.0 614.8)"/><rect x="807.9" y="604.9" width="9.5" height="6.1" fill="#fbf2d0" transform="rotate(21 812.7 607.9)"/><rect x="789.7" y="636.4" width="18.1" height="9.5" fill="#fbf2d0" transform="rotate(26 798.7 641.2)"/><rect x="843.7" y="636.9" width="8.6" height="10.5" fill="#fbf2d0" transform="rotate(19 848.0 642.2)"/><rect x="864.0" y="643.2" width="12.3" height="5.9" fill="#fbf2d0" transform="rotate(19 870.2 646.1)"/><rect x="851.8" y="645.6" width="9.6" height="5.5" fill="#fbf2d0" transform="rotate(26 856.5 648.3)"/><rect x="848.4" y="630.7" width="11.1" height="9.2" fill="#fbf2d0" transform="rotate(13 854.0 635.3)"/><rect x="829.8" y="633.6" width="21.4" height="9.5" fill="#fbf2d0" transform="rotate(34 840.5 638.3)"/><rect x="843.1" y="623.0" width="11.5" height="11.7" fill="#fbf2d0" transform="rotate(30 848.8 628.9)"/><rect x="833.3" y="615.1" width="15.0" height="9.7" fill="#fbf2d0" transform="rotate(23 840.8 619.9)"/><rect x="827.9" y="643.7" width="21.0" height="6.6" fill="#fbf2d0" transform="rotate(14 838.3 647.0)"/><rect x="833.4" y="633.5" width="17.6" height="6.4" fill="#fbf2d0" transform="rotate(32 842.2 636.7)"/><rect x="856.0" y="634.3" width="10.9" height="11.8" fill="#fbf2d0" transform="rotate(20 861.5 640.2)"/><rect x="859.8" y="623.5" width="11.1" height="10.3" fill="#fbf2d0" transform="rotate(20 865.4 628.7)"/><rect x="866.4" y="636.5" width="10.6" height="6.6" fill="#fbf2d0" transform="rotate(23 871.7 639.8)"/><rect x="852.9" y="655.0" width="10.0" height="7.8" fill="#fbf2d0" transform="rotate(18 857.9 658.8)"/><rect x="868.4" y="622.2" width="8.7" height="5.4" fill="#fbf2d0" transform="rotate(22 872.8 625.0)"/><rect x="860.0" y="650.1" width="18.3" height="12.0" fill="#fbf2d0" transform="rotate(35 869.1 656.1)"/><rect x="831.3" y="621.7" width="21.1" height="10.2" fill="#fbf2d0" transform="rotate(14 841.8 626.8)"/><rect x="831.3" y="692.7" width="13.2" height="7.3" fill="#fbf2d0" transform="rotate(17 837.9 696.4)"/><rect x="799.7" y="687.5" width="12.9" height="11.7" fill="#fbf2d0" transform="rotate(16 806.1 693.4)"/><rect x="845.8" y="685.8" width="13.0" height="10.8" fill="#fbf2d0" transform="rotate(33 852.3 691.2)"/><rect x="819.4" y="682.7" width="14.6" height="7.6" fill="#fbf2d0" transform="rotate(35 826.8 686.5)"/><rect x="805.0" y="693.3" width="20.6" height="5.2" fill="#fbf2d0" transform="rotate(23 815.3 695.9)"/><rect x="840.7" y="705.4" width="8.6" height="5.2" fill="#fbf2d0" transform="rotate(15 845.0 708.0)"/><rect x="840.9" y="687.1" width="18.5" height="11.3" fill="#fbf2d0" transform="rotate(21 850.2 692.7)"/><rect x="810.8" y="710.3" width="16.6" height="6.8" fill="#fbf2d0" transform="rotate(30 819.1 713.7)"/><rect x="817.2" y="688.1" width="8.1" height="10.3" fill="#fbf2d0" transform="rotate(35 821.2 693.3)"/><rect x="832.3" y="710.0" width="8.3" height="6.6" fill="#fbf2d0" transform="rotate(24 836.4 713.3)"/><rect x="915.2" y="703.0" width="13.4" height="6.8" fill="#fbf2d0" transform="rotate(28 921.9 706.3)"/><rect x="894.4" y="700.1" width="10.6" height="10.6" fill="#fbf2d0" transform="rotate(36 899.7 705.4)"/><rect x="907.2" y="696.2" width="16.5" height="7.3" fill="#fbf2d0" transform="rotate(26 915.5 699.8)"/><rect x="888.8" y="697.0" width="9.1" height="6.4" fill="#fbf2d0" transform="rotate(36 893.4 700.2)"/><rect x="883.6" y="669.9" width="8.5" height="8.9" fill="#fbf2d0" transform="rotate(26 887.9 674.3)"/><rect x="912.1" y="700.4" width="21.8" height="6.9" fill="#fbf2d0" transform="rotate(20 923.1 703.8)"/><rect x="871.7" y="685.9" width="17.9" height="8.1" fill="#fbf2d0" transform="rotate(24 880.6 689.9)"/><rect x="887.3" y="689.2" width="17.4" height="10.2" fill="#fbf2d0" transform="rotate(38 896.0 694.3)"/><rect x="898.0" y="672.8" width="19.8" height="7.1" fill="#fbf2d0" transform="rotate(32 907.9 676.4)"/><rect x="888.5" y="695.2" width="10.8" height="6.7" fill="#fbf2d0" transform="rotate(24 893.9 698.6)"/><rect x="875.3" y="700.2" width="16.1" height="7.3" fill="#fbf2d0" transform="rotate(28 883.4 703.8)"/><rect x="918.0" y="684.9" width="11.2" height="10.7" fill="#fbf2d0" transform="rotate(34 923.6 690.3)"/><rect x="976.2" y="620.3" width="14.6" height="10.7" fill="#fbf2d0" transform="rotate(43 983.6 625.7)"/><rect x="973.8" y="620.5" width="12.1" height="5.8" fill="#fbf2d0" transform="rotate(28 979.9 623.5)"/><rect x="972.2" y="639.2" width="21.0" height="7.6" fill="#fbf2d0" transform="rotate(44 982.7 643.0)"/><rect x="948.1" y="625.5" width="18.9" height="11.6" fill="#fbf2d0" transform="rotate(26 957.6 631.4)"/><rect x="959.1" y="640.5" width="11.0" height="7.6" fill="#fbf2d0" transform="rotate(26 964.6 644.3)"/><rect x="937.6" y="626.4" width="16.4" height="9.6" fill="#fbf2d0" transform="rotate(28 945.8 631.2)"/><rect x="927.8" y="630.6" width="17.5" height="6.3" fill="#fbf2d0" transform="rotate(30 936.5 633.8)"/><rect x="937.9" y="647.9" width="15.7" height="5.4" fill="#fbf2d0" transform="rotate(25 945.8 650.6)"/><rect x="946.5" y="639.0" width="16.9" height="5.6" fill="#fbf2d0" transform="rotate(27 955.0 641.8)"/><rect x="963.4" y="633.2" width="12.0" height="7.2" fill="#fbf2d0" transform="rotate(46 969.4 636.8)"/><rect x="864.5" y="438.4" width="13.0" height="7.9" fill="#fbf2d0" transform="rotate(-26 871.0 442.4)"/><rect x="898.5" y="430.0" width="10.8" height="10.1" fill="#fbf2d0" transform="rotate(-42 903.8 435.1)"/><rect x="849.3" y="449.1" width="13.9" height="10.7" fill="#fbf2d0" transform="rotate(-37 856.3 454.5)"/><rect x="893.2" y="436.0" width="10.3" height="5.1" fill="#fbf2d0" transform="rotate(-34 898.4 438.6)"/><rect x="882.1" y="450.1" width="9.2" height="9.4" fill="#fbf2d0" transform="rotate(-38 886.8 454.8)"/><rect x="874.2" y="422.9" width="12.0" height="8.6" fill="#fbf2d0" transform="rotate(-25 880.2 427.3)"/><rect x="851.6" y="433.8" width="19.3" height="11.8" fill="#fbf2d0" transform="rotate(-42 861.2 439.7)"/><rect x="851.3" y="451.8" width="21.7" height="8.4" fill="#fbf2d0" transform="rotate(-46 862.1 456.0)"/><rect x="890.1" y="431.3" width="20.7" height="9.3" fill="#fbf2d0" transform="rotate(-27 900.5 436.0)"/><rect x="858.1" y="446.4" width="11.1" height="7.8" fill="#fbf2d0" transform="rotate(-27 863.7 450.3)"/><rect x="890.3" y="424.7" width="11.1" height="7.8" fill="#fbf2d0" transform="rotate(-35 895.8 428.6)"/><rect x="868.7" y="421.4" width="11.5" height="10.1" fill="#fbf2d0" transform="rotate(-25 874.4 426.4)"/><rect x="894.2" y="418.9" width="18.6" height="5.3" fill="#fbf2d0" transform="rotate(-22 903.5 421.5)"/><rect x="898.4" y="417.7" width="15.7" height="9.4" fill="#fbf2d0" transform="rotate(-35 906.2 422.4)"/><rect x="910.1" y="417.2" width="14.0" height="9.6" fill="#fbf2d0" transform="rotate(-31 917.1 422.0)"/><rect x="909.4" y="404.3" width="16.7" height="8.4" fill="#fbf2d0" transform="rotate(-36 917.8 408.6)"/><rect x="922.3" y="423.6" width="14.4" height="6.3" fill="#fbf2d0" transform="rotate(-31 929.5 426.7)"/><rect x="898.8" y="408.3" width="14.0" height="5.6" fill="#fbf2d0" transform="rotate(-31 905.9 411.1)"/><rect x="911.9" y="406.2" width="16.9" height="5.6" fill="#fbf2d0" transform="rotate(-24 920.4 409.0)"/><rect x="925.6" y="416.0" width="8.8" height="8.5" fill="#fbf2d0" transform="rotate(-33 930.0 420.3)"/><rect x="1011.6" y="576.6" width="20.0" height="12.0" fill="#fbf2d0" transform="rotate(46 1021.6 582.5)"/><rect x="1004.2" y="581.1" width="21.7" height="8.4" fill="#fbf2d0" transform="rotate(51 1015.1 585.3)"/><rect x="1010.5" y="578.2" width="19.0" height="11.5" fill="#fbf2d0" transform="rotate(30 1020.0 583.9)"/><rect x="987.7" y="606.7" width="10.2" height="11.3" fill="#fbf2d0" transform="rotate(35 992.8 612.3)"/><rect x="1007.6" y="577.2" width="15.0" height="11.4" fill="#fbf2d0" transform="rotate(33 1015.2 582.9)"/><rect x="982.4" y="597.7" width="12.5" height="5.3" fill="#fbf2d0" transform="rotate(32 988.6 600.3)"/><rect x="975.0" y="615.3" width="17.5" height="11.3" fill="#fbf2d0" transform="rotate(32 983.7 620.9)"/><rect x="1006.0" y="576.8" width="15.4" height="9.5" fill="#fbf2d0" transform="rotate(37 1013.7 581.5)"/><rect x="989.8" y="725.7" width="16.1" height="11.2" fill="#fbf2d0" transform="rotate(-39 997.9 731.3)"/><rect x="996.9" y="727.8" width="13.5" height="10.6" fill="#fbf2d0" transform="rotate(-36 1003.7 733.1)"/><rect x="997.0" y="726.7" width="13.0" height="10.4" fill="#fbf2d0" transform="rotate(-31 1003.5 731.9)"/><rect x="960.1" y="730.5" width="8.7" height="10.7" fill="#fbf2d0" transform="rotate(-36 964.5 735.8)"/><rect x="978.6" y="736.8" width="16.2" height="9.6" fill="#fbf2d0" transform="rotate(-34 986.7 741.6)"/><rect x="951.0" y="714.2" width="10.1" height="9.3" fill="#fbf2d0" transform="rotate(-32 956.1 718.8)"/><rect x="975.7" y="736.2" width="9.8" height="6.6" fill="#fbf2d0" transform="rotate(-26 980.6 739.5)"/><rect x="950.6" y="715.2" width="13.0" height="5.7" fill="#fbf2d0" transform="rotate(-33 957.1 718.1)"/><rect x="958.6" y="728.8" width="16.2" height="6.4" fill="#fbf2d0" transform="rotate(-27 966.8 732.0)"/><rect x="968.2" y="717.9" width="21.1" height="6.7" fill="#fbf2d0" transform="rotate(-38 978.8 721.2)"/><rect x="1007.8" y="761.4" width="20.2" height="10.5" fill="#fbf2d0" transform="rotate(58 1017.9 766.6)"/><rect x="1014.4" y="732.1" width="17.0" height="8.9" fill="#fbf2d0" transform="rotate(56 1022.9 736.6)"/><rect x="1023.8" y="752.2" width="21.1" height="10.1" fill="#fbf2d0" transform="rotate(54 1034.4 757.3)"/><rect x="1034.4" y="734.2" width="15.4" height="7.8" fill="#fbf2d0" transform="rotate(54 1042.1 738.1)"/><rect x="1012.7" y="769.0" width="8.2" height="8.9" fill="#fbf2d0" transform="rotate(71 1016.8 773.4)"/><rect x="1011.0" y="741.3" width="16.5" height="8.5" fill="#fbf2d0" transform="rotate(63 1019.3 745.6)"/><rect x="572.6" y="676.7" width="12.3" height="7.1" fill="#fbf2d0" transform="rotate(-1 578.8 680.2)"/><rect x="574.4" y="696.0" width="18.0" height="5.0" fill="#fbf2d0" transform="rotate(18 583.4 698.5)"/><rect x="565.5" y="684.9" width="18.4" height="8.2" fill="#fbf2d0" transform="rotate(3 574.7 689.0)"/><rect x="532.0" y="678.3" width="8.5" height="7.3" fill="#fbf2d0" transform="rotate(16 536.3 682.0)"/><rect x="562.7" y="696.9" width="18.0" height="6.9" fill="#fbf2d0" transform="rotate(11 571.7 700.4)"/><rect x="548.5" y="695.2" width="15.3" height="6.9" fill="#fbf2d0" transform="rotate(13 556.2 698.7)"/><rect x="577.7" y="679.0" width="20.3" height="5.1" fill="#fbf2d0" transform="rotate(4 587.9 681.5)"/><rect x="533.6" y="692.2" width="21.2" height="10.2" fill="#fbf2d0" transform="rotate(6 544.2 697.3)"/><rect x="577.1" y="679.2" width="11.3" height="11.4" fill="#fbf2d0" transform="rotate(13 582.8 684.9)"/><rect x="560.7" y="690.8" width="21.7" height="8.3" fill="#fbf2d0" transform="rotate(18 571.6 695.0)"/><rect x="564.8" y="695.7" width="14.1" height="10.1" fill="#fbf2d0" transform="rotate(12 571.9 700.7)"/><rect x="540.1" y="678.6" width="16.7" height="5.5" fill="#fbf2d0" transform="rotate(20 548.5 681.4)"/><rect x="533.9" y="670.1" width="9.5" height="11.5" fill="#fbf2d0" transform="rotate(6 538.7 675.8)"/><rect x="534.2" y="670.9" width="8.6" height="9.8" fill="#fbf2d0" transform="rotate(13 538.5 675.9)"/><rect x="567.4" y="692.5" width="8.9" height="9.1" fill="#fbf2d0" transform="rotate(7 571.8 697.1)"/><rect x="568.8" y="696.9" width="20.5" height="5.5" fill="#fbf2d0" transform="rotate(19 579.1 699.6)"/><rect x="635.1" y="730.1" width="9.5" height="6.4" fill="#fbf2d0" transform="rotate(6 639.9 733.3)"/><rect x="588.0" y="725.7" width="19.4" height="9.4" fill="#fbf2d0" transform="rotate(23 597.7 730.4)"/><rect x="621.6" y="710.8" width="9.4" height="5.7" fill="#fbf2d0" transform="rotate(21 626.3 713.6)"/><rect x="598.9" y="712.0" width="13.9" height="5.1" fill="#fbf2d0" transform="rotate(9 605.8 714.6)"/><rect x="603.0" y="722.8" width="13.2" height="7.2" fill="#fbf2d0" transform="rotate(26 609.6 726.5)"/><rect x="611.9" y="727.9" width="16.7" height="5.2" fill="#fbf2d0" transform="rotate(13 620.2 730.5)"/><rect x="610.5" y="723.2" width="12.9" height="9.9" fill="#fbf2d0" transform="rotate(16 616.9 728.2)"/><rect x="601.8" y="725.5" width="9.3" height="10.7" fill="#fbf2d0" transform="rotate(7 606.4 730.9)"/><rect x="666.7" y="725.1" width="18.7" height="11.8" fill="#fbf2d0" transform="rotate(8 676.1 731.1)"/><rect x="690.0" y="736.6" width="19.2" height="6.3" fill="#fbf2d0" transform="rotate(20 699.6 739.7)"/><rect x="686.8" y="744.2" width="11.6" height="11.6" fill="#fbf2d0" transform="rotate(15 692.7 750.0)"/><rect x="678.8" y="743.1" width="15.0" height="5.8" fill="#fbf2d0" transform="rotate(23 686.3 746.0)"/><rect x="671.0" y="743.4" width="17.8" height="10.5" fill="#fbf2d0" transform="rotate(23 679.9 748.6)"/><rect x="686.3" y="731.4" width="13.5" height="11.2" fill="#fbf2d0" transform="rotate(10 693.1 737.0)"/><rect x="713.2" y="722.3" width="10.9" height="6.8" fill="#fbf2d0" transform="rotate(30 718.6 725.8)"/><rect x="689.9" y="733.1" width="20.4" height="6.6" fill="#fbf2d0" transform="rotate(19 700.1 736.4)"/><rect x="692.2" y="742.9" width="18.5" height="9.5" fill="#fbf2d0" transform="rotate(16 701.5 747.6)"/><rect x="681.8" y="724.8" width="19.8" height="9.6" fill="#fbf2d0" transform="rotate(26 691.7 729.7)"/><rect x="744.7" y="763.3" width="18.8" height="9.1" fill="#fbf2d0" transform="rotate(16 754.1 767.8)"/><rect x="762.5" y="780.7" width="11.3" height="6.3" fill="#fbf2d0" transform="rotate(20 768.2 783.9)"/><rect x="774.7" y="779.3" width="10.2" height="6.1" fill="#fbf2d0" transform="rotate(19 779.8 782.4)"/><rect x="756.5" y="767.2" width="10.3" height="7.3" fill="#fbf2d0" transform="rotate(18 761.7 770.8)"/><rect x="788.1" y="772.4" width="9.4" height="11.7" fill="#fbf2d0" transform="rotate(15 792.8 778.2)"/><rect x="754.9" y="782.4" width="19.1" height="10.1" fill="#fbf2d0" transform="rotate(23 764.4 787.4)"/><rect x="750.7" y="771.7" width="9.5" height="6.4" fill="#fbf2d0" transform="rotate(22 755.4 775.0)"/><rect x="738.1" y="761.4" width="19.1" height="9.9" fill="#fbf2d0" transform="rotate(25 747.6 766.4)"/><rect x="771.4" y="764.1" width="10.0" height="9.2" fill="#fbf2d0" transform="rotate(23 776.4 768.7)"/><rect x="774.6" y="780.2" width="14.0" height="9.0" fill="#fbf2d0" transform="rotate(31 781.6 784.7)"/><rect x="757.2" y="754.6" width="18.1" height="11.2" fill="#fbf2d0" transform="rotate(32 766.2 760.2)"/><rect x="770.8" y="777.9" width="17.5" height="9.5" fill="#fbf2d0" transform="rotate(24 779.6 782.7)"/><rect x="756.3" y="770.6" width="9.4" height="7.9" fill="#fbf2d0" transform="rotate(32 761.0 774.6)"/><rect x="774.5" y="770.7" width="11.5" height="8.0" fill="#fbf2d0" transform="rotate(24 780.2 774.7)"/><rect x="794.9" y="828.8" width="17.5" height="11.5" fill="#fbf2d0" transform="rotate(72 803.6 834.6)"/><rect x="797.9" y="852.5" width="13.4" height="8.4" fill="#fbf2d0" transform="rotate(91 804.6 856.7)"/><rect x="781.0" y="837.4" width="10.3" height="10.5" fill="#fbf2d0" transform="rotate(91 786.1 842.6)"/><rect x="792.6" y="811.7" width="16.0" height="8.8" fill="#fbf2d0" transform="rotate(85 800.6 816.1)"/><rect x="790.6" y="844.0" width="19.6" height="8.7" fill="#fbf2d0" transform="rotate(78 800.4 848.4)"/><rect x="804.6" y="818.7" width="17.6" height="7.7" fill="#fbf2d0" transform="rotate(86 813.4 822.6)"/><rect x="782.2" y="866.4" width="13.0" height="5.4" fill="#fbf2d0" transform="rotate(75 788.7 869.1)"/><rect x="790.1" y="806.8" width="13.9" height="7.9" fill="#fbf2d0" transform="rotate(85 797.0 810.8)"/><rect x="790.0" y="820.8" width="11.1" height="10.2" fill="#fbf2d0" transform="rotate(91 795.6 825.9)"/><rect x="791.2" y="819.3" width="19.2" height="7.7" fill="#fbf2d0" transform="rotate(73 800.8 823.1)"/><rect x="417.0" y="811.9" width="19.3" height="9.4" fill="#fbf2d0" transform="rotate(-61 426.7 816.6)"/><rect x="431.5" y="779.8" width="21.5" height="7.5" fill="#fbf2d0" transform="rotate(-57 442.2 783.6)"/><rect x="444.2" y="815.4" width="14.6" height="7.1" fill="#fbf2d0" transform="rotate(-59 451.5 819.0)"/><rect x="420.0" y="814.5" width="13.0" height="11.0" fill="#fbf2d0" transform="rotate(-66 426.5 820.0)"/><rect x="428.6" y="782.1" width="14.0" height="6.3" fill="#fbf2d0" transform="rotate(-72 435.5 785.2)"/><rect x="442.3" y="783.3" width="11.4" height="7.1" fill="#fbf2d0" transform="rotate(-60 448.0 786.9)"/><rect x="428.8" y="804.5" width="17.2" height="7.5" fill="#fbf2d0" transform="rotate(-50 437.4 808.2)"/><rect x="443.0" y="767.8" width="19.6" height="11.3" fill="#fbf2d0" transform="rotate(-53 452.8 773.4)"/><rect x="418.6" y="817.3" width="16.9" height="5.1" fill="#fbf2d0" transform="rotate(-72 427.1 819.9)"/><rect x="450.5" y="806.5" width="11.5" height="5.7" fill="#fbf2d0" transform="rotate(-69 456.3 809.4)"/><rect x="424.0" y="813.5" width="12.9" height="6.1" fill="#fbf2d0" transform="rotate(-50 430.4 816.6)"/><rect x="440.3" y="775.4" width="20.5" height="9.3" fill="#fbf2d0" transform="rotate(-53 450.5 780.1)"/><rect x="436.5" y="818.2" width="19.0" height="10.9" fill="#fbf2d0" transform="rotate(-67 446.1 823.6)"/><rect x="437.7" y="797.8" width="18.4" height="8.1" fill="#fbf2d0" transform="rotate(-51 446.9 801.8)"/><rect x="517.0" y="859.9" width="11.3" height="6.0" fill="#fbf2d0" transform="rotate(-25 522.6 862.9)"/><rect x="493.8" y="864.8" width="10.0" height="8.4" fill="#fbf2d0" transform="rotate(-25 498.8 869.0)"/><rect x="517.9" y="875.4" width="8.1" height="10.9" fill="#fbf2d0" transform="rotate(-26 521.9 880.9)"/><rect x="513.1" y="871.1" width="19.8" height="7.6" fill="#fbf2d0" transform="rotate(-27 523.0 875.0)"/><rect x="533.7" y="852.5" width="16.9" height="9.5" fill="#fbf2d0" transform="rotate(-36 542.1 857.3)"/><rect x="514.7" y="871.8" width="21.0" height="7.3" fill="#fbf2d0" transform="rotate(-13 525.3 875.5)"/><rect x="510.2" y="866.9" width="20.6" height="5.2" fill="#fbf2d0" transform="rotate(-20 520.5 869.5)"/><rect x="516.0" y="861.4" width="20.1" height="7.6" fill="#fbf2d0" transform="rotate(-26 526.0 865.2)"/><rect x="515.8" y="874.1" width="11.0" height="8.0" fill="#fbf2d0" transform="rotate(-27 521.2 878.1)"/><rect x="516.5" y="874.4" width="12.1" height="10.8" fill="#fbf2d0" transform="rotate(-27 522.6 879.8)"/><rect x="512.6" y="857.2" width="15.1" height="11.8" fill="#fbf2d0" transform="rotate(-21 520.2 863.2)"/><rect x="527.8" y="861.4" width="12.4" height="7.1" fill="#fbf2d0" transform="rotate(-23 534.0 864.9)"/><rect x="422.2" y="901.8" width="8.6" height="10.1" fill="#fbf2d0" transform="rotate(-16 426.5 906.8)"/><rect x="416.1" y="886.7" width="12.2" height="5.0" fill="#fbf2d0" transform="rotate(-32 422.2 889.2)"/><rect x="431.6" y="897.3" width="17.2" height="10.5" fill="#fbf2d0" transform="rotate(-15 440.2 902.6)"/><rect x="417.0" y="897.9" width="16.8" height="9.9" fill="#fbf2d0" transform="rotate(-23 425.4 902.8)"/><rect x="420.0" y="889.0" width="17.3" height="8.2" fill="#fbf2d0" transform="rotate(-19 428.7 893.1)"/><rect x="396.6" y="887.1" width="8.5" height="10.4" fill="#fbf2d0" transform="rotate(-15 400.9 892.4)"/><rect x="417.7" y="891.6" width="19.5" height="10.5" fill="#fbf2d0" transform="rotate(-24 427.5 896.9)"/><rect x="401.4" y="891.6" width="13.9" height="7.2" fill="#fbf2d0" transform="rotate(-27 408.4 895.2)"/><rect x="650.7" y="811.1" width="8.8" height="9.0" fill="#fbf2d0" transform="rotate(19 655.1 815.6)"/><rect x="628.3" y="805.5" width="16.1" height="11.4" fill="#fbf2d0" transform="rotate(29 636.3 811.2)"/><rect x="624.4" y="790.2" width="16.3" height="11.6" fill="#fbf2d0" transform="rotate(42 632.5 795.9)"/><rect x="644.4" y="792.1" width="9.4" height="9.5" fill="#fbf2d0" transform="rotate(23 649.1 796.8)"/><rect x="633.4" y="777.7" width="8.1" height="9.8" fill="#fbf2d0" transform="rotate(21 637.5 782.6)"/><rect x="656.7" y="782.2" width="20.2" height="5.9" fill="#fbf2d0" transform="rotate(18 666.8 785.2)"/><rect x="638.8" y="860.7" width="18.3" height="6.3" fill="#fbf2d0" transform="rotate(9 647.9 863.8)"/><rect x="639.9" y="870.1" width="20.0" height="10.1" fill="#fbf2d0" transform="rotate(10 649.9 875.1)"/><rect x="637.4" y="869.3" width="14.4" height="11.5" fill="#fbf2d0" transform="rotate(14 644.6 875.0)"/><rect x="652.6" y="872.7" width="8.2" height="5.1" fill="#fbf2d0" transform="rotate(24 656.7 875.2)"/><rect x="645.2" y="854.9" width="12.4" height="10.1" fill="#fbf2d0" transform="rotate(12 651.4 859.9)"/><rect x="648.6" y="865.9" width="8.8" height="7.6" fill="#fbf2d0" transform="rotate(22 653.0 869.7)"/><rect x="852.0" y="561.1" width="10.0" height="10.6" fill="#fbf2d0" transform="rotate(17 857.1 566.4)"/><rect x="860.0" y="560.8" width="13.9" height="7.7" fill="#fbf2d0" transform="rotate(27 867.0 564.7)"/><rect x="873.4" y="566.7" width="15.9" height="7.0" fill="#fbf2d0" transform="rotate(9 881.4 570.2)"/><rect x="873.0" y="563.7" width="19.6" height="7.3" fill="#fbf2d0" transform="rotate(23 882.7 567.3)"/><rect x="874.7" y="568.3" width="16.4" height="7.2" fill="#fbf2d0" transform="rotate(18 882.9 571.9)"/><rect x="869.8" y="551.0" width="17.6" height="9.2" fill="#fbf2d0" transform="rotate(30 878.6 555.6)"/><rect x="870.7" y="548.8" width="8.0" height="6.8" fill="#fbf2d0" transform="rotate(18 874.8 552.2)"/><rect x="853.9" y="568.7" width="20.4" height="5.3" fill="#fbf2d0" transform="rotate(28 864.2 571.4)"/><rect x="707.0" y="429.8" width="16.0" height="6.9" fill="#fbf2d0" transform="rotate(83 715.0 433.2)"/><rect x="704.3" y="422.9" width="20.8" height="7.4" fill="#fbf2d0" transform="rotate(65 714.7 426.6)"/><rect x="697.2" y="425.6" width="10.8" height="10.3" fill="#fbf2d0" transform="rotate(85 702.6 430.7)"/><rect x="678.5" y="419.7" width="17.5" height="8.3" fill="#fbf2d0" transform="rotate(68 687.2 423.8)"/><rect x="678.7" y="424.9" width="19.1" height="8.2" fill="#fbf2d0" transform="rotate(65 688.2 429.0)"/><rect x="709.1" y="425.3" width="11.3" height="9.1" fill="#fbf2d0" transform="rotate(85 714.7 429.8)"/><rect x="711.1" y="416.2" width="14.7" height="9.1" fill="#fbf2d0" transform="rotate(68 718.5 420.8)"/><rect x="676.3" y="404.7" width="17.8" height="7.5" fill="#fbf2d0" transform="rotate(77 685.2 408.5)"/><rect x="690.3" y="418.0" width="10.1" height="5.3" fill="#fbf2d0" transform="rotate(87 695.3 420.6)"/><rect x="685.5" y="400.6" width="16.9" height="10.5" fill="#fbf2d0" transform="rotate(67 694.0 405.8)"/><rect x="697.0" y="411.8" width="15.3" height="5.1" fill="#fbf2d0" transform="rotate(64 704.7 414.4)"/><rect x="716.1" y="428.7" width="14.8" height="9.0" fill="#fbf2d0" transform="rotate(69 723.5 433.2)"/><rect x="742.8" y="491.3" width="21.3" height="10.4" fill="#fbf2d0" transform="rotate(78 753.4 496.4)"/><rect x="758.0" y="485.0" width="8.5" height="6.4" fill="#fbf2d0" transform="rotate(62 762.2 488.2)"/><rect x="712.1" y="472.9" width="15.8" height="11.1" fill="#fbf2d0" transform="rotate(69 720.0 478.4)"/><rect x="757.0" y="515.1" width="8.9" height="9.2" fill="#fbf2d0" transform="rotate(68 761.5 519.7)"/><rect x="716.0" y="517.6" width="11.6" height="9.0" fill="#fbf2d0" transform="rotate(73 721.8 522.0)"/><rect x="755.2" y="504.1" width="13.5" height="8.1" fill="#fbf2d0" transform="rotate(62 761.9 508.1)"/><rect x="756.8" y="521.0" width="11.1" height="5.3" fill="#fbf2d0" transform="rotate(64 762.4 523.6)"/><rect x="722.6" y="513.9" width="20.7" height="10.9" fill="#fbf2d0" transform="rotate(59 732.9 519.3)"/><rect x="745.2" y="504.1" width="17.1" height="11.9" fill="#fbf2d0" transform="rotate(59 753.7 510.1)"/><rect x="712.4" y="507.4" width="21.2" height="9.7" fill="#fbf2d0" transform="rotate(65 723.0 512.2)"/><rect x="739.7" y="508.7" width="9.5" height="7.3" fill="#fbf2d0" transform="rotate(64 744.4 512.4)"/><rect x="716.8" y="495.8" width="10.4" height="6.7" fill="#fbf2d0" transform="rotate(61 722.0 499.1)"/><rect x="657.4" y="443.4" width="18.0" height="6.4" fill="#fbf2d0" transform="rotate(49 666.4 446.6)"/><rect x="664.9" y="451.1" width="21.1" height="11.1" fill="#fbf2d0" transform="rotate(69 675.4 456.6)"/><rect x="642.4" y="461.7" width="9.4" height="11.5" fill="#fbf2d0" transform="rotate(68 647.0 467.5)"/><rect x="658.2" y="462.3" width="12.8" height="10.8" fill="#fbf2d0" transform="rotate(59 664.6 467.7)"/><rect x="659.1" y="450.2" width="11.1" height="5.4" fill="#fbf2d0" transform="rotate(65 664.6 452.9)"/><rect x="651.8" y="449.5" width="20.2" height="6.9" fill="#fbf2d0" transform="rotate(58 661.9 452.9)"/><rect x="637.7" y="455.3" width="19.8" height="7.3" fill="#fbf2d0" transform="rotate(52 647.6 459.0)"/><rect x="649.4" y="458.4" width="20.6" height="5.8" fill="#fbf2d0" transform="rotate(71 659.7 461.3)"/><rect x="755.4" y="451.0" width="17.4" height="6.5" fill="#fbf2d0" transform="rotate(19 764.0 454.2)"/><rect x="766.9" y="427.5" width="10.8" height="7.5" fill="#fbf2d0" transform="rotate(32 772.3 431.3)"/><rect x="793.2" y="451.8" width="9.4" height="7.0" fill="#fbf2d0" transform="rotate(30 797.9 455.3)"/><rect x="758.0" y="442.2" width="12.1" height="11.9" fill="#fbf2d0" transform="rotate(8 764.1 448.2)"/><rect x="786.1" y="431.8" width="10.0" height="5.0" fill="#fbf2d0" transform="rotate(28 791.1 434.3)"/><rect x="773.9" y="423.0" width="14.1" height="11.4" fill="#fbf2d0" transform="rotate(13 781.0 428.7)"/><rect x="558.2" y="461.8" width="10.5" height="10.4" fill="#fbf2d0" transform="rotate(-5 563.4 467.0)"/><rect x="540.8" y="460.2" width="9.2" height="9.3" fill="#fbf2d0" transform="rotate(-10 545.4 464.9)"/><rect x="540.9" y="464.4" width="16.6" height="10.0" fill="#fbf2d0" transform="rotate(-3 549.1 469.4)"/><rect x="559.5" y="464.2" width="8.9" height="10.1" fill="#fbf2d0" transform="rotate(-12 564.0 469.3)"/><rect x="561.0" y="460.3" width="19.3" height="7.3" fill="#fbf2d0" transform="rotate(-2 570.6 464.0)"/><rect x="573.4" y="474.1" width="8.2" height="11.4" fill="#fbf2d0" transform="rotate(-11 577.5 479.7)"/><rect x="572.6" y="466.2" width="10.6" height="10.8" fill="#fbf2d0" transform="rotate(-13 577.9 471.6)"/><rect x="535.7" y="472.8" width="16.3" height="5.0" fill="#fbf2d0" transform="rotate(-10 543.8 475.4)"/><rect x="462.6" y="425.6" width="9.7" height="10.0" fill="#fbf2d0" transform="rotate(-17 467.4 430.6)"/><rect x="478.6" y="419.7" width="18.0" height="7.7" fill="#fbf2d0" transform="rotate(-19 487.5 423.6)"/><rect x="438.3" y="439.2" width="21.4" height="8.5" fill="#fbf2d0" transform="rotate(-25 448.9 443.4)"/><rect x="467.3" y="425.5" width="8.3" height="11.8" fill="#fbf2d0" transform="rotate(-32 471.5 431.3)"/><rect x="449.0" y="410.3" width="11.5" height="10.7" fill="#fbf2d0" transform="rotate(-36 454.8 415.7)"/><rect x="445.3" y="434.6" width="10.7" height="5.1" fill="#fbf2d0" transform="rotate(-23 450.6 437.2)"/><rect x="464.8" y="428.0" width="17.8" height="5.7" fill="#fbf2d0" transform="rotate(-16 473.7 430.8)"/><rect x="475.6" y="409.4" width="9.7" height="8.5" fill="#fbf2d0" transform="rotate(-25 480.4 413.6)"/><rect x="582.6" y="527.9" width="13.7" height="6.0" fill="#fbf2d0" transform="rotate(7 589.4 530.9)"/><rect x="609.3" y="526.4" width="16.0" height="10.2" fill="#fbf2d0" transform="rotate(-3 617.3 531.5)"/><rect x="608.9" y="546.5" width="13.4" height="7.9" fill="#fbf2d0" transform="rotate(13 615.6 550.5)"/><rect x="590.6" y="532.3" width="21.2" height="10.4" fill="#fbf2d0" transform="rotate(1 601.2 537.5)"/><rect x="580.5" y="530.1" width="14.1" height="11.9" fill="#fbf2d0" transform="rotate(12 587.5 536.0)"/><rect x="609.9" y="544.9" width="19.9" height="5.4" fill="#fbf2d0" transform="rotate(5 619.8 547.6)"/><rect x="616.2" y="546.4" width="11.5" height="8.0" fill="#fbf2d0" transform="rotate(8 622.0 550.4)"/><rect x="589.0" y="536.7" width="9.0" height="8.0" fill="#fbf2d0" transform="rotate(5 593.5 540.7)"/><rect x="896.2" y="577.5" width="21.6" height="10.4" fill="#fbf2d0" transform="rotate(50 907.0 582.7)"/><rect x="926.2" y="609.2" width="20.4" height="11.2" fill="#fbf2d0" transform="rotate(29 936.4 614.8)"/><rect x="928.0" y="585.3" width="17.5" height="6.9" fill="#fbf2d0" transform="rotate(41 936.8 588.8)"/><rect x="944.6" y="601.5" width="11.5" height="8.6" fill="#fbf2d0" transform="rotate(38 950.4 605.8)"/><rect x="945.5" y="585.0" width="12.3" height="9.5" fill="#fbf2d0" transform="rotate(31 951.6 589.8)"/><rect x="926.9" y="618.5" width="15.2" height="6.9" fill="#fbf2d0" transform="rotate(39 934.5 621.9)"/><rect x="926.8" y="580.2" width="9.7" height="5.9" fill="#fbf2d0" transform="rotate(35 931.6 583.1)"/><rect x="919.8" y="587.0" width="11.4" height="5.6" fill="#fbf2d0" transform="rotate(41 925.5 589.8)"/><rect x="1014.2" y="539.2" width="16.0" height="9.6" fill="#fbf2d0" transform="rotate(33 1022.2 544.0)"/><rect x="1009.7" y="533.9" width="15.7" height="9.3" fill="#fbf2d0" transform="rotate(39 1017.6 538.6)"/><rect x="997.6" y="526.4" width="11.1" height="8.6" fill="#fbf2d0" transform="rotate(37 1003.2 530.7)"/><rect x="1006.6" y="516.9" width="12.9" height="11.0" fill="#fbf2d0" transform="rotate(34 1013.1 522.4)"/><rect x="1006.0" y="533.7" width="12.0" height="11.9" fill="#fbf2d0" transform="rotate(35 1012.0 539.7)"/><rect x="748.6" y="602.2" width="8.9" height="11.1" fill="#fbf2d0" transform="rotate(19 753.1 607.7)"/><rect x="711.9" y="610.9" width="14.2" height="10.1" fill="#fbf2d0" transform="rotate(11 719.0 616.0)"/><rect x="717.6" y="633.5" width="18.3" height="6.1" fill="#fbf2d0" transform="rotate(16 726.8 636.5)"/><rect x="724.6" y="620.8" width="16.6" height="10.9" fill="#fbf2d0" transform="rotate(28 732.9 626.3)"/><rect x="731.6" y="623.4" width="18.4" height="10.3" fill="#fbf2d0" transform="rotate(19 740.9 628.6)"/><rect x="743.3" y="624.6" width="20.8" height="5.9" fill="#fbf2d0" transform="rotate(29 753.7 627.5)"/><rect x="708.1" y="625.3" width="16.2" height="8.5" fill="#fbf2d0" transform="rotate(31 716.2 629.6)"/><rect x="734.0" y="611.5" width="19.0" height="11.1" fill="#fbf2d0" transform="rotate(23 743.5 617.0)"/><rect x="727.0" y="613.3" width="14.4" height="10.1" fill="#fbf2d0" transform="rotate(15 734.2 618.3)"/><rect x="728.1" y="618.4" width="13.4" height="7.3" fill="#fbf2d0" transform="rotate(27 734.8 622.0)"/><rect x="595.5" y="776.8" width="14.2" height="6.3" fill="#fbf2d0" transform="rotate(15 602.6 780.0)"/><rect x="569.1" y="779.9" width="16.1" height="5.6" fill="#fbf2d0" transform="rotate(30 577.2 782.7)"/><rect x="573.8" y="786.5" width="19.7" height="11.7" fill="#fbf2d0" transform="rotate(13 583.7 792.4)"/><rect x="583.3" y="792.1" width="8.1" height="5.3" fill="#fbf2d0" transform="rotate(22 587.4 794.8)"/><rect x="580.5" y="790.7" width="18.8" height="8.8" fill="#fbf2d0" transform="rotate(32 589.9 795.1)"/><rect x="461.8" y="696.8" width="17.6" height="7.7" fill="#fbf2d0" transform="rotate(37 470.6 700.6)"/><rect x="462.8" y="689.8" width="21.3" height="9.7" fill="#fbf2d0" transform="rotate(41 473.4 694.6)"/><rect x="448.8" y="691.0" width="13.6" height="8.9" fill="#fbf2d0" transform="rotate(42 455.6 695.5)"/><rect x="476.3" y="712.7" width="14.8" height="8.1" fill="#fbf2d0" transform="rotate(43 483.7 716.7)"/><rect x="910.1" y="629.0" width="15.4" height="10.7" fill="#fbf2d0" transform="rotate(22 917.9 634.4)"/><rect x="883.7" y="652.9" width="19.6" height="8.6" fill="#fbf2d0" transform="rotate(21 893.5 657.2)"/><rect x="904.5" y="640.9" width="19.5" height="11.9" fill="#fbf2d0" transform="rotate(39 914.2 646.8)"/><rect x="891.1" y="623.3" width="12.1" height="8.6" fill="#fbf2d0" transform="rotate(30 897.2 627.6)"/><rect x="880.4" y="624.0" width="16.8" height="9.2" fill="#fbf2d0" transform="rotate(26 888.8 628.6)"/><rect x="913.5" y="641.0" width="8.6" height="7.9" fill="#fbf2d0" transform="rotate(37 917.8 644.9)"/><rect x="579.0" y="473.3" width="8.1" height="7.1" fill="#fbf2d0" transform="rotate(18 583.0 476.9)"/><rect x="587.7" y="471.8" width="10.8" height="8.5" fill="#fbf2d0" transform="rotate(11 593.1 476.1)"/><rect x="573.9" y="469.3" width="15.4" height="12.0" fill="#fbf2d0" transform="rotate(12 581.6 475.3)"/><rect x="581.7" y="451.2" width="10.2" height="10.3" fill="#fbf2d0" transform="rotate(1 586.8 456.4)"/><rect x="567.9" y="452.8" width="15.3" height="10.8" fill="#fbf2d0" transform="rotate(13 575.6 458.1)"/><rect x="957.0" y="539.0" width="8.2" height="10.4" fill="#fbf2d0" transform="rotate(36 961.0 544.2)"/><rect x="952.6" y="551.3" width="10.4" height="6.9" fill="#fbf2d0" transform="rotate(30 957.8 554.7)"/><rect x="958.1" y="558.9" width="12.9" height="8.1" fill="#fbf2d0" transform="rotate(37 964.5 563.0)"/><rect x="925.9" y="568.2" width="16.2" height="11.7" fill="#fbf2d0" transform="rotate(39 934.0 574.1)"/><rect x="950.0" y="545.2" width="8.6" height="11.5" fill="#fbf2d0" transform="rotate(49 954.3 551.0)"/><rect x="933.6" y="570.8" width="19.4" height="7.1" fill="#fbf2d0" transform="rotate(42 943.3 574.4)"/><rect x="1000.4" y="896.6" width="21.3" height="6.7" fill="#fbf2d0" transform="rotate(27 1011.0 899.9)"/><rect x="999.1" y="889.4" width="12.3" height="11.1" fill="#fbf2d0" transform="rotate(30 1005.2 895.0)"/><rect x="1001.8" y="891.6" width="10.4" height="7.5" fill="#fbf2d0" transform="rotate(22 1007.0 895.4)"/><rect x="1003.4" y="893.3" width="15.9" height="5.8" fill="#fbf2d0" transform="rotate(31 1011.3 896.2)"/><rect x="681.4" y="675.9" width="8.9" height="5.9" fill="#fbf2d0" transform="rotate(28 685.9 678.8)"/><rect x="679.3" y="673.4" width="10.7" height="7.0" fill="#fbf2d0" transform="rotate(14 684.6 676.9)"/><rect x="666.9" y="678.9" width="12.8" height="6.1" fill="#fbf2d0" transform="rotate(25 673.3 682.0)"/><rect x="665.5" y="674.3" width="19.7" height="5.9" fill="#fbf2d0" transform="rotate(19 675.3 677.2)"/><path d="M955.1 808.2L939.0 834.8M1018.1 482.5L1043.0 508.7M538.5 604.5L522.4 653.9M782.2 563.5L771.6 602.4M512.5 847.5L528.3 869.1M886.8 581.3L918.9 603.0M594.3 582.1L580.9 607.7M814.8 434.4L841.8 448.6M719.0 533.8L715.5 554.5M882.4 516.4L848.1 555.9M899.0 857.9L911.2 870.0M846.8 729.6L832.9 759.0M834.4 745.1L817.2 782.5M480.0 456.9L518.5 432.9M871.1 393.0L853.7 415.1M641.5 383.6L629.3 423.3M482.9 847.8L512.8 832.9M854.8 550.8L831.4 594.3M912.2 531.7L900.1 544.9M532.2 449.7L552.2 435.8M1014.3 772.9L986.7 809.6M953.9 511.4L929.8 559.6M645.5 883.3L684.5 896.5M668.2 413.1L701.2 410.2M732.7 868.1L717.5 909.5M903.0 510.0L949.3 539.3M819.2 664.9L803.0 693.1M518.5 530.2L507.0 572.9M844.9 487.7L822.1 536.0M604.8 543.4L626.0 547.5M749.0 562.6L771.6 565.6M837.9 686.6L823.9 731.1M948.3 436.6L938.8 452.4M551.2 495.5L583.0 483.7M453.7 549.8L450.9 568.5M373.4 927.1L391.4 920.3M854.4 904.8L876.7 929.6M516.6 654.9L493.0 702.1M803.6 720.7L828.1 728.8M448.5 409.7L491.2 384.5M566.6 486.0L588.7 480.8M898.3 829.7L925.1 841.1M492.9 819.7L509.5 845.6M957.0 498.6L930.4 526.8M790.6 818.6L818.8 840.6M716.6 448.4L716.7 487.6M432.9 748.3L426.9 767.0M413.0 602.2L391.7 641.7M364.3 846.4L389.5 835.8M830.8 648.6L824.3 677.4M662.4 739.9L687.7 751.5M682.0 678.3L674.3 700.9M446.3 537.1L420.0 580.3M1022.0 892.8L1060.9 921.5M394.3 735.2L437.8 767.5M712.0 723.0L695.7 747.9M985.4 388.9L975.4 405.5M810.9 581.4L842.7 588.8M748.9 667.3L726.1 713.5M737.3 439.8L762.5 446.8M441.8 659.4L438.1 684.2M747.5 439.3L786.0 448.1M431.0 585.8L428.8 623.8M884.0 776.2L843.6 814.4M845.2 423.9L892.0 451.6M769.5 783.6L750.7 826.7M411.6 499.4L417.1 523.3M569.7 744.7L590.6 791.8M790.7 851.5L809.1 864.8M865.5 558.9L904.3 577.9M952.0 430.2L927.4 467.8M404.2 692.7L405.4 730.6M914.2 437.4L934.3 449.9M670.6 837.2L690.6 842.1M376.4 447.1L402.3 437.5M863.2 572.1L826.8 607.8M729.5 753.1L757.1 763.9M455.6 647.9L500.9 664.0M383.9 490.0L414.6 473.1M469.4 822.1L497.2 864.8M798.3 404.4L787.4 442.4M402.9 457.4L406.8 491.9M777.9 581.6L761.5 606.0M380.7 629.7L397.4 635.9M483.0 738.0L466.5 758.7M740.7 655.4L787.7 685.3M380.6 677.5L416.1 698.7M813.6 556.7L804.6 603.6M953.3 881.5L990.7 907.5M734.4 713.5L711.8 744.1M652.7 397.4L652.7 432.6M635.0 502.8L617.4 527.0M451.8 396.9L483.8 375.0M576.6 461.2L587.1 487.2M560.8 786.7L611.2 770.8M777.0 406.3L771.0 445.1M1041.6 573.9L1059.3 579.9M712.6 861.3L700.3 884.5M383.6 457.6L398.0 486.1M491.7 706.1L532.4 716.2M488.2 794.0L530.9 771.4M980.2 558.4L967.5 578.2M729.1 853.7L755.4 866.2M894.6 715.9L880.5 756.7M602.8 399.0L609.3 427.7M720.6 692.8L705.7 724.0M365.5 894.8L403.1 879.6M876.7 552.6L864.0 570.9M465.8 783.4L479.4 818.4M758.0 680.4L797.0 689.6M590.0 766.0L612.6 807.3M573.4 814.8L599.6 792.9M549.0 661.5L581.7 674.0M833.2 778.7L813.4 830.7M527.9 786.5L534.3 803.7M728.7 660.5L707.9 709.9M627.1 452.5L623.0 474.6M375.2 787.4L414.5 826.3M722.4 716.2L710.1 742.4M984.6 436.9L1001.4 444.9M802.9 592.6L830.1 610.2M994.7 889.2L1012.6 906.7M552.4 502.6L542.2 547.8M802.9 541.1L826.3 548.8M742.5 460.9L786.6 474.2M946.6 520.9L929.0 551.6M967.0 461.4L1001.9 479.1M965.6 489.1L992.1 504.0M920.4 846.2L896.4 860.5M386.1 448.9L397.3 436.9M981.8 450.6L1015.3 478.1M416.2 558.6L457.2 576.2M992.7 900.6L963.8 933.2M410.6 644.2L391.2 671.1M438.0 398.5L455.5 387.3M713.9 446.0L702.8 466.3M830.8 455.1L856.8 470.4M718.7 872.0L710.2 895.2M1026.5 855.8L1047.1 872.6M406.9 411.0L437.4 400.2M761.3 561.9L750.2 598.0M725.1 755.4L775.6 762.4M866.2 584.3L865.7 615.7M654.2 582.6L623.1 629.1M364.0 708.7L393.2 719.1M534.2 466.1L545.1 514.6M923.9 861.4L898.6 894.7M742.5 553.7L758.5 555.0M873.2 844.6L897.6 851.4M807.1 765.7L804.0 810.0M624.7 662.8L663.7 675.9M733.2 502.8L759.7 505.0M984.4 637.9L1008.7 643.0M455.6 896.5L488.7 880.1M743.8 810.9L727.8 841.3M792.3 819.3L833.9 848.2M394.3 586.0L414.9 594.3M535.3 417.1L558.8 459.1M730.7 607.3L732.5 651.1M664.8 628.1L699.9 658.3M486.0 740.5L469.0 766.2M611.6 578.7L603.7 601.5M767.9 399.3L762.6 427.8M529.4 819.9L551.4 855.0M972.0 480.0L952.9 504.2M408.1 601.6L401.9 645.7M562.5 598.6L591.4 610.9M776.6 860.1L765.0 913.8M842.6 572.6L881.3 598.0M645.5 645.5L623.5 692.7M870.4 385.4L915.2 406.5M643.5 633.7L674.1 647.5M695.5 657.3L726.5 665.6M381.9 742.6L423.6 763.8M909.2 440.0L893.9 453.0M426.7 796.0L444.1 790.6M849.7 756.5L831.9 784.0M751.3 916.3L797.5 937.6M465.3 554.7L483.8 574.4M560.1 528.4L548.8 577.5M767.5 638.9L742.7 683.1M931.7 840.8L915.4 858.6M414.0 655.7L407.3 694.5M635.2 795.2L615.1 844.0M756.4 390.7L754.4 429.2M582.7 528.9L609.9 533.8M845.1 814.4L876.9 825.9M989.2 397.8L962.0 429.2M395.4 830.0L421.6 876.0M765.0 798.6L752.6 839.7M852.8 522.1L820.6 563.9M504.9 416.4L528.1 457.7M1005.1 600.6L1045.7 616.2M472.1 413.8L489.7 412.1M956.0 525.4L937.9 559.3M468.3 858.2L492.3 901.6M465.0 825.5L492.8 811.4M803.7 501.7L822.9 506.3M700.3 756.3L685.1 803.0M435.1 899.1L482.0 873.1M740.6 514.7L729.5 566.8M418.9 643.4L458.3 649.9M749.0 405.7L740.7 454.9M528.3 867.0L532.5 906.7M1024.4 561.9L1048.9 578.1M671.1 515.1L694.0 519.0M923.7 528.6L903.9 561.1M917.0 699.1L910.9 715.3M712.0 429.9L740.3 440.2M636.8 734.1L625.8 754.1M1010.9 555.7L1027.2 570.4M429.7 846.8L448.9 877.1M747.1 428.9L736.1 463.5M630.4 478.7L621.5 501.2M456.0 518.7L467.9 507.2M1002.2 641.5L1038.2 655.9M839.6 501.8L852.9 512.6M656.0 642.1L632.0 687.7M435.4 675.8L430.0 719.9M394.5 531.6L440.5 500.8M381.0 710.0L425.4 729.1M696.6 858.6L685.1 911.0M665.0 584.3L648.5 624.2M485.2 560.2L471.6 579.8M511.0 552.4L539.5 573.1M693.5 799.7L736.8 815.3M801.1 487.2L819.5 494.2M875.9 547.3L855.5 598.0M848.2 766.5L822.1 811.7M866.1 829.3L903.0 843.7M648.1 820.9L697.4 844.1M745.5 872.0L731.8 925.0M899.7 509.6L927.6 529.6M517.3 641.5L556.4 660.5M840.0 579.3L881.9 612.8M943.1 583.0L936.6 624.6M941.1 561.9L952.9 573.0M708.8 366.7L710.2 415.2M666.2 697.9L656.5 726.5M957.1 711.5L948.2 728.8M554.6 756.2L566.1 773.5M831.2 400.5L853.0 408.9M553.1 886.2L568.2 923.6M1008.3 581.2L964.6 613.4M728.7 904.6L714.5 938.9M360.4 486.2L390.1 469.3M946.2 500.8L911.0 537.0M703.8 575.2L749.2 600.1M816.0 419.8L845.6 427.1M836.4 711.0L818.1 743.0M838.4 868.2L837.1 886.4M937.2 740.7L954.8 769.7M877.6 859.2L899.8 877.9M459.0 907.3L478.4 897.3M780.6 676.4L773.1 717.4M562.0 780.1L572.2 816.5M648.6 909.6L677.0 922.6M1021.7 763.3L1045.8 775.7M475.7 692.0L495.7 700.1M732.7 838.8L723.2 883.3M496.2 525.4L487.3 579.3M1051.6 464.7L1014.6 503.7M514.7 542.1L505.2 572.4M643.7 897.1L633.7 919.1M982.6 624.9L1010.6 630.8M467.5 780.0L490.5 810.7M835.9 774.5L831.5 811.4M585.8 707.0L558.7 745.2M392.8 841.5L413.8 825.2M518.6 423.4L564.3 416.9M820.3 597.6L857.3 617.1M1015.7 717.5L1057.6 738.8M621.6 889.2L668.1 901.7M596.4 489.0L632.0 477.8M723.1 743.5L739.9 751.5M638.8 646.1L676.5 666.2M747.8 594.5L792.6 610.3M934.3 446.3L962.6 482.8M697.6 865.6L737.2 879.4M955.1 446.7L997.0 460.6M793.5 518.7L794.2 545.6M508.4 486.6L533.1 521.8M1057.3 800.7L1026.2 839.2M587.9 389.0L606.9 378.8M557.4 407.6L568.8 421.0M951.1 424.4L930.8 460.3M596.4 557.9L618.8 567.5M944.3 816.5L954.0 830.7M889.8 386.5L924.7 408.4M877.9 684.6L863.3 718.1M753.7 492.7L801.7 518.4M592.8 904.6L607.9 936.3M452.3 625.4L480.6 634.3M507.1 590.3L502.8 613.7M883.8 653.2L873.1 674.5M533.7 672.8L579.6 703.0M879.1 894.1L893.7 905.4M498.3 403.3L533.1 374.9M814.9 499.7L797.2 552.4M580.5 391.5L587.8 420.8M997.5 813.2L982.3 829.3M882.9 628.4L930.7 650.2M901.1 633.9L936.1 650.2M724.6 488.1L720.2 504.4M982.0 752.5L1011.4 787.0M627.7 821.8L647.9 828.7M361.7 509.6L405.9 488.1M922.7 611.4L902.6 658.9M740.0 403.1L740.8 438.4M811.8 468.2L812.9 520.4M620.3 434.0L653.2 443.6M760.5 722.0L790.6 736.9M409.2 759.8L433.2 795.4M845.7 499.9L880.7 526.0M685.1 457.3L710.3 461.5M1063.0 487.0L1037.0 526.8M913.7 716.1L963.3 740.1M931.6 392.4L916.5 413.2M993.5 482.7L1029.7 521.1M543.1 445.8L566.6 485.7M435.3 917.0L456.7 909.7M702.3 428.0L748.3 451.5M984.8 377.3L1018.8 389.2M789.8 704.0L808.1 709.3M419.6 658.2L404.6 701.5M375.8 842.1L407.1 827.9M466.2 710.5L450.9 763.4M757.7 553.8L739.4 595.1M969.5 826.1L942.9 864.3M455.0 703.0L497.2 723.2M370.7 406.9L388.8 439.0M666.0 600.6L707.3 608.3M988.9 763.8L1014.7 800.3M381.7 745.2L410.2 762.3M963.5 475.3L987.8 485.0M584.8 563.3L576.4 581.2M657.4 903.8L698.5 931.4M1062.3 782.2L1047.9 803.8M663.8 380.5L650.4 406.4M880.6 794.4L923.3 815.9M723.7 437.4L754.1 441.1M752.3 893.4L732.7 925.1M797.9 673.9L841.3 678.0M1046.6 421.4L1026.8 440.5M1000.7 379.4L989.4 399.5M651.8 759.7L697.4 754.4M899.3 509.6L881.0 525.7M534.2 916.1L570.8 900.9M815.1 705.1L832.5 711.8M389.0 569.9L380.9 588.8M701.7 907.8L723.7 914.9M453.4 528.2L433.5 566.9M690.7 757.8L667.9 801.5M384.1 812.4L407.9 856.6M942.9 730.0L905.4 766.4M466.9 728.2L499.3 755.7M492.7 440.2L504.4 480.6M766.2 495.8L763.0 512.0M948.4 448.4L967.9 457.7M927.2 506.5L900.7 532.2M430.5 528.1L472.0 507.0M523.8 472.8L532.6 502.9M633.5 712.8L616.3 751.7M956.2 496.1L938.0 524.3M438.1 626.1L470.3 640.2M489.9 498.4L497.9 517.6M426.2 571.1L416.7 587.3M505.0 800.8L549.2 775.9M1043.2 842.3L1023.5 858.6M487.1 845.6L496.4 862.6M549.1 871.1L563.8 902.0M579.0 501.4L605.8 486.8M448.2 900.2L465.6 938.5M732.2 373.2L721.8 417.6M742.7 498.9L742.1 520.7M903.4 885.0L946.0 911.6M636.2 850.7L616.9 899.1M427.3 484.1L434.8 516.8M459.4 497.6L482.7 475.5M828.0 383.7L851.1 394.1M681.0 663.5L721.6 659.3M511.8 811.7L534.2 863.0M672.6 503.5L702.0 507.6M840.1 386.3L824.7 402.7M925.5 371.2L957.2 393.0M869.2 449.8L854.5 464.6M1042.0 439.8L1021.7 487.1M405.1 492.3L422.8 527.6M658.0 599.4L710.9 611.2M553.1 889.4L564.8 903.2M1015.7 416.0L985.8 461.7M948.6 599.2L992.2 623.6M908.2 729.2L945.9 748.4M751.2 808.1L800.8 830.7M487.9 434.5L525.7 412.5M541.4 494.8L558.4 527.6M819.4 412.1L857.3 432.1M932.0 368.2L911.9 406.3M867.7 725.5L852.4 745.6M674.0 889.5L665.1 920.6M1046.2 857.0L1019.3 889.9M905.0 440.6L894.1 462.7M551.8 393.4L562.1 409.5M759.7 890.1L787.0 903.0M864.3 600.5L849.4 640.9M463.2 575.8L507.0 591.9M935.0 729.4L958.0 735.8M904.4 522.4L893.8 570.1M778.2 843.8L794.2 848.0M743.6 769.2L738.1 787.2M365.6 480.8L390.9 472.4M868.0 913.2L854.8 928.9M1022.4 899.7L1006.1 923.5M665.2 635.7L655.8 651.2M424.8 459.8L440.0 481.6M925.5 764.5L907.6 795.3M483.3 896.7L524.4 881.7M647.3 751.2L629.7 795.7M905.1 417.9L942.0 448.9M932.1 494.1L900.4 522.4M764.5 437.0L758.5 477.9M543.0 504.8L536.6 541.5M853.8 386.5L887.3 411.2M837.2 711.7L858.3 723.6M604.0 726.8L571.7 760.7M923.9 756.1L957.4 790.1M577.9 550.3L595.8 558.2M419.5 638.2L397.6 686.8M984.2 618.1L965.9 650.1M602.3 762.3L644.1 783.9M436.4 402.1L458.9 438.4M531.7 534.1L521.9 577.5M918.4 572.9L885.4 597.0M433.5 628.3L460.1 633.4M381.2 924.0L419.9 911.4M557.9 426.5L602.5 412.3M678.8 421.1L669.5 436.5M569.9 791.4L574.1 811.2M412.7 475.9L433.9 467.2M901.3 604.5L895.1 624.5M529.8 889.3L552.4 935.8M977.4 628.1L1009.6 652.1M561.3 632.0L583.7 640.0M1017.7 433.0L1043.2 447.9M552.0 497.3L537.2 545.3M581.3 482.7L608.1 470.0M496.0 606.6L510.5 614.3M870.8 707.0L923.5 719.3M584.8 852.0L612.7 838.5M622.4 577.5L610.4 599.5M986.4 599.1L1007.9 613.3M984.5 809.7L1023.5 832.4M905.6 805.6L877.1 846.2M471.7 652.5L461.0 700.2M586.3 852.5L636.1 833.0M876.9 746.3L891.3 756.9M975.8 658.1L964.6 704.1M979.7 490.3L960.3 507.5M447.2 551.9L440.2 569.4M412.4 771.9L430.2 801.4M624.9 813.3L674.8 827.0M684.7 865.7L708.9 880.7M975.2 676.8L970.4 713.2M685.3 604.5L726.8 614.2M523.0 571.1L511.4 588.6M986.2 392.4L1014.6 409.7M868.0 592.7L863.5 640.1M597.6 514.5L640.2 492.3M506.2 876.3L543.4 852.1M1020.1 480.7L1001.9 503.5M865.7 480.0L885.9 488.0M1011.0 912.6L1047.7 943.3M486.5 885.1L514.3 872.8M1012.3 478.0L1001.8 512.5M971.5 867.4L1007.8 879.9M457.7 721.3L488.9 731.8M787.6 506.1L786.1 540.8M430.6 364.1L445.7 406.1M896.7 494.0L877.0 528.9M974.9 479.6L1011.9 505.0M866.5 754.6L908.5 787.0M409.6 887.9L412.3 907.1M403.0 823.8L442.3 810.4M1047.9 556.7L1066.8 574.2M505.3 460.4L516.8 479.7M517.3 416.0L531.7 440.8M716.9 464.8L723.3 499.7M1031.5 622.4L1011.1 656.4M465.4 460.8L482.5 488.0M616.3 592.3L618.1 635.9M618.5 460.4L667.6 470.0M851.5 560.6L895.0 590.5M653.5 595.8L646.0 640.6M1037.1 439.8L1011.6 482.9M897.4 700.7L934.7 707.6M663.4 459.2L637.2 504.0M928.9 382.7L916.2 410.5M965.9 557.3L1008.7 588.8M817.4 619.3L807.0 665.5M560.4 570.8L546.1 597.8M1002.1 665.4L996.8 687.1M853.9 387.9L839.9 399.8M941.1 445.2L911.0 479.2M853.6 866.2L881.6 891.9M985.6 419.6L1025.6 442.3M977.7 572.4L946.8 612.9M880.9 703.5L899.9 712.4M380.6 772.9L399.2 764.5M473.5 489.8L498.1 471.8M1044.9 606.1L1044.4 632.3M523.8 919.3L544.5 909.0M470.3 571.3L488.0 576.0M739.4 734.2L735.9 773.1M670.6 856.8L697.1 869.7M636.4 891.7L655.2 902.5M486.9 589.3L502.6 593.3M914.5 797.6L932.7 824.7M817.9 686.9L847.7 699.4M1018.7 895.0L1044.5 912.4M538.4 887.4L579.5 863.5M925.7 915.6L947.7 930.3M776.8 460.8L808.9 476.2M561.0 875.1L565.3 896.7M876.6 689.7L914.6 700.3M672.0 879.0L662.5 904.3M441.8 838.0L463.7 877.4M529.0 787.1L572.0 774.4M528.5 725.4L515.0 753.1M983.2 885.0L1025.3 908.8M879.6 623.8L908.1 638.4M1032.9 620.1L1016.7 660.2M391.9 933.0L431.4 910.2M467.7 721.6L461.7 737.9M679.2 417.1L724.6 441.8M402.9 621.4L394.2 649.9M1021.6 460.5L1004.4 505.9M433.6 495.9L480.7 471.1M710.1 787.2L688.2 834.9M506.0 880.4L546.6 873.4M742.5 839.2L736.6 858.3M986.7 810.8L1013.3 832.9M928.5 901.1L947.2 913.4M850.0 668.7L835.6 700.4M717.7 509.9L707.0 546.6M909.1 679.9L883.1 727.7M1022.6 445.2L1070.3 472.0M643.3 671.7L633.4 690.2M544.3 716.0L594.6 735.4M821.5 568.2L866.3 591.5M820.7 572.5L845.7 585.0M1022.6 504.1L1053.4 526.6M524.4 635.9L507.1 682.2M814.1 743.3L851.2 767.9M364.4 384.2L388.1 433.6M590.2 672.6L588.0 712.1M947.0 380.9L930.7 397.4M928.9 427.5L959.6 447.5M593.8 887.9L598.8 931.5M408.0 838.5L434.1 832.3M452.6 567.5L499.7 594.2M1036.9 911.0L1072.9 938.0M739.6 574.0L764.6 582.0M464.9 459.6L478.9 477.1M703.1 691.9L734.7 699.4M749.3 367.3L744.3 413.3M536.8 822.7L544.1 841.0M709.8 573.8L693.3 613.3M920.5 622.0L971.4 636.3M791.3 471.5L785.0 490.0M826.8 596.9L810.8 629.7M1029.6 493.3L1001.7 537.6M862.4 608.4L853.7 623.9M450.0 847.6L467.5 841.9M734.0 545.8L709.4 584.4M871.6 640.6L858.9 681.1M430.7 864.4L444.4 885.2M647.7 475.6L647.2 505.0M560.8 732.6L553.4 763.8M860.7 593.6L831.1 640.7M990.6 425.2L1017.9 447.9M525.8 728.1L489.6 767.3M936.7 623.5L927.6 657.6M453.5 753.6L470.4 759.2M871.1 806.6L857.4 832.0M396.8 697.1L426.8 703.5M850.6 521.1L873.7 545.3M366.8 435.1L388.1 428.8M979.4 759.9L963.6 786.9M845.6 358.4L823.0 409.5M567.8 882.8L617.6 873.7M767.1 905.1L787.6 917.4M734.7 631.0L725.0 660.4M730.4 686.1L717.9 720.0M670.9 728.6L652.0 760.7M551.7 807.5L575.6 797.4M1010.8 647.4L1005.4 674.5M637.8 767.8L662.2 770.1M690.3 563.5L678.1 591.4M905.2 766.6L877.2 798.2M826.9 720.6L848.1 737.1M427.6 560.5L405.7 597.3M1045.1 809.5L1027.1 832.9M438.1 823.8L460.4 809.0M684.9 762.0L731.6 779.6M971.0 610.4L966.0 633.2M462.3 521.2L503.6 549.5M581.5 858.8L622.0 835.2M615.0 442.9L647.5 451.4M654.9 693.6L638.9 720.4M368.9 579.7L396.3 590.3M851.5 706.5L828.1 739.5M551.9 501.7L600.0 481.0M520.9 697.2L548.3 706.7M806.2 706.4L825.3 715.0M520.4 541.7L520.7 562.3M1041.4 503.4L1058.0 523.1M782.7 576.0L770.7 599.9M896.9 642.6L914.9 644.6M616.8 501.5L653.5 511.3M640.6 805.4L639.2 831.8M879.3 616.3L900.4 628.7M371.3 418.6L381.6 447.5M679.8 633.1L662.0 685.4M493.3 645.6L488.2 676.0M946.5 486.3L981.7 506.5M768.9 511.3L751.8 562.8M613.1 443.4L642.2 445.5M967.9 544.2L938.1 589.5M626.2 585.2L617.4 617.9M635.5 508.9L669.8 509.3M923.6 568.8L964.5 604.7M848.0 734.7L835.4 767.2M491.6 486.1L528.7 466.8M472.4 699.0L463.9 734.4M591.2 672.1L588.4 693.3M570.9 739.1L601.4 766.0M910.5 674.8L906.4 713.2M908.1 560.1L872.2 601.4M946.6 713.4L928.1 763.5M1055.4 760.0L1024.4 799.0M479.5 835.8L512.9 832.2M924.1 741.1L961.7 774.8M511.2 863.7L516.6 881.5M428.4 712.4L420.3 733.2M550.4 521.5L599.9 546.8M680.6 790.4L671.6 842.7M945.5 771.4L913.5 792.1M805.2 833.8L782.5 871.5M698.6 799.1L686.1 823.3M903.7 825.3L865.3 846.4M652.2 487.3L639.6 521.4M695.3 392.7L740.5 400.3M983.6 558.0L964.7 595.8M667.5 646.6L638.0 690.3M684.3 652.0L711.2 665.5M946.3 419.8L915.2 447.2M697.6 584.5L712.3 591.0M907.7 507.3L934.9 534.0M796.4 700.6L776.5 747.0M898.8 743.2L927.0 761.3M844.0 886.1L827.2 918.4M462.1 508.0L491.8 497.5M459.4 488.7L494.3 475.1M668.6 652.7L682.8 661.4M1022.2 475.7L1000.0 505.9M510.4 790.4L537.3 826.6M522.1 692.7L540.2 696.8M823.8 742.6L806.3 776.3M866.1 429.4L886.8 445.0M424.4 504.1L440.6 535.8M546.7 523.4L545.8 568.3M449.6 489.8L456.4 518.2M440.7 765.5L457.2 759.8M878.0 600.9L907.4 612.7M575.0 431.2L602.5 412.2M908.0 826.7L893.4 844.6M657.0 851.9L648.8 885.4M742.9 514.8L793.5 516.8M410.5 575.9L448.7 591.0M810.9 832.3L803.7 852.3M560.7 778.8L600.0 763.4M830.9 380.8L818.9 407.2M791.0 543.3L776.0 588.4M574.1 677.6L594.1 682.4M865.1 407.6L885.1 430.9M482.8 591.5L513.0 603.8M466.7 652.8L450.7 682.1M521.6 892.3L540.4 929.6M937.2 591.7L951.8 601.7M689.0 843.8L675.2 874.5M908.3 508.6L885.2 556.9M975.3 502.9L1002.4 521.1M376.8 618.5L419.5 630.8M414.8 872.9L421.5 900.2M870.2 386.4L859.1 398.7M475.4 494.1L481.3 512.8M513.3 652.7L502.7 676.5M527.2 821.3L552.4 859.5M435.4 890.0L448.1 905.4M400.5 773.7L437.1 747.7M569.5 634.1L560.5 672.5M570.2 529.6L589.0 534.5M932.1 637.0L914.0 668.3M884.5 566.9L849.8 605.3M549.2 918.5L575.4 916.9M941.9 690.0L922.1 742.3M808.7 817.4L827.3 830.8M560.5 703.3L544.0 733.6M847.8 420.1L878.4 448.7M863.1 385.1L827.2 426.0M648.6 593.9L636.3 634.0M638.6 691.3L661.8 694.6M1008.5 889.8L1040.3 927.8M515.4 799.0L563.8 776.0M954.6 851.6L935.4 872.6M602.5 813.8L651.5 822.5M840.1 462.1L825.7 487.8M434.0 472.3L456.1 460.7M941.6 553.1L968.3 570.3M387.0 612.4L379.6 627.2M972.9 577.0L955.7 596.7M374.1 445.1L409.2 427.6M729.5 490.4L710.0 542.4M974.5 445.4L988.5 454.7M851.2 819.5L871.4 828.6M745.6 515.4L742.8 538.9M833.8 688.7L885.2 701.1M936.8 665.6L924.6 717.3M631.2 417.0L626.5 458.5M811.2 893.8L845.1 893.8M702.8 775.8L678.9 817.8M537.7 747.5L551.9 763.1M480.6 640.1L455.1 662.3M923.4 700.1L911.6 753.7M490.2 407.8L498.5 439.2M1006.1 598.6L1049.5 617.1M777.1 491.0L774.9 532.7M693.4 552.3L747.9 564.4M519.9 550.1L507.3 580.5M928.7 746.5L965.7 779.4M781.6 679.4L769.8 718.4M427.2 661.9L412.3 694.3M641.7 435.0L661.5 440.6M761.9 854.2L807.7 861.0M384.7 873.3L427.9 850.0M978.3 504.4L996.2 529.9M554.6 811.1L600.3 784.1M738.5 866.9L786.8 894.6M375.3 627.3L414.5 639.0M679.9 728.9L724.1 727.7M1037.1 370.7L1008.3 408.6M384.0 732.0L408.3 739.8M621.2 505.6L650.3 505.6M750.6 894.9L802.1 911.4M546.2 652.5L541.9 675.0M750.0 800.0L764.0 809.2M546.2 643.5L574.1 658.9M758.0 876.7L741.4 900.7M476.6 445.9L486.6 464.2M927.7 635.0L918.7 683.0M930.0 495.5L942.8 505.2M981.3 813.7L955.2 852.4M882.5 715.7L925.2 740.4M987.0 541.0L1022.9 565.4M959.6 681.6L951.6 701.4M980.0 853.8L945.8 881.2M827.4 442.7L843.5 454.4M554.7 782.8L580.9 823.8M480.8 431.3L487.6 449.0M881.7 426.8L898.2 436.9M536.5 739.8L551.2 748.9M587.0 521.7L629.0 506.7M899.3 665.8L923.7 678.9M563.4 771.9L572.7 799.3M546.2 868.4L590.2 839.1M994.3 617.6L1040.8 637.4M549.7 512.1L551.0 534.3M676.1 908.2L665.5 937.6M966.4 854.2L931.9 884.0M1020.3 730.4L992.7 754.4M587.7 604.2L556.0 646.8M706.4 882.5L697.5 934.6M822.3 835.2L803.6 881.5M925.5 579.3L945.6 593.3M900.1 617.7L879.3 657.9M433.3 900.7L438.5 931.3M645.9 688.2L671.3 705.3M431.3 429.2L465.6 410.0M683.8 907.3L678.0 929.5M1003.0 696.5L1031.7 712.8M542.1 535.3L549.9 573.1M512.3 397.0L520.9 425.6M922.7 853.5L897.7 881.5M740.4 383.9L738.6 426.6M839.0 583.9L853.7 595.5M755.8 730.7L751.2 747.8M691.4 398.6L725.0 402.7M522.1 462.5L546.5 504.5M693.7 753.4L676.4 791.9M648.7 661.7L638.5 715.7M823.7 666.7L845.8 678.8M967.9 369.5L935.5 408.5M919.6 764.0L901.0 784.9M856.8 558.4L882.4 587.8M949.6 901.0L915.9 939.4M403.3 657.7L387.4 701.7M576.7 507.0L604.2 484.4M391.4 787.9L408.7 818.2M359.0 519.6L391.8 527.2M884.8 730.6L867.6 763.8M786.8 770.4L781.0 789.4M602.4 783.8L624.3 776.9M865.1 437.8L885.8 453.7M701.4 522.4L753.1 536.5M545.8 805.5L591.9 777.4M1037.0 377.0L1021.5 401.3M499.4 608.4L522.1 625.4M379.6 861.9L388.9 884.5M462.4 564.5L447.2 600.5M657.9 541.2L702.5 555.9M856.4 558.8L884.1 580.3M584.2 467.1L616.7 443.3M429.9 889.8L455.0 884.8M748.4 820.9L734.4 854.0M818.6 484.5L841.5 489.5M868.9 397.4L853.8 411.6M484.2 651.3L469.5 689.5M976.0 431.2L951.9 471.1M697.1 876.1L696.2 905.8M1051.2 857.2L1020.8 879.7M1002.9 434.0L1034.7 458.2M428.2 887.1L458.5 923.5M861.5 551.9L877.9 558.7M1000.7 580.0L1026.2 603.8M923.9 539.6L937.4 553.2M981.0 731.3L944.4 772.3M1034.4 888.1L1010.8 920.7M373.3 871.0L398.3 901.9M938.1 525.6L926.4 538.9M457.8 931.0L479.2 919.4M461.0 880.1L489.4 864.2M1027.3 376.1L1017.5 391.5M1051.0 433.0L1063.9 445.0M852.5 640.4L848.8 661.9M731.4 808.0L719.4 831.8M519.7 628.5L557.5 637.5M976.4 657.3L991.1 665.2M603.0 537.0L596.4 569.0M392.9 862.9L404.5 906.6M882.9 541.5L904.8 551.9M732.5 696.3L776.5 717.8M934.3 907.7L916.4 924.2M432.8 787.5L463.1 766.8M738.7 882.1L780.5 887.6M762.0 646.6L793.5 656.7M648.9 612.8L677.5 623.2M646.2 607.6L638.9 622.6M879.7 581.4L857.3 614.2M632.2 500.4L619.8 524.8M691.8 533.0L694.6 584.6M955.8 498.5L938.5 528.7M614.8 510.9L665.2 508.1M950.6 431.4L973.1 457.5M465.9 419.2L482.7 410.9M945.2 734.1L911.4 756.7M444.7 690.5L441.6 716.3M1023.0 766.1L997.4 795.4M586.9 616.5L607.4 627.5M852.8 548.9L882.4 576.2M431.0 599.8L470.6 612.4M602.2 388.3L616.4 412.7M785.5 869.8L810.4 877.8M759.6 527.9L791.9 537.1M1003.1 464.3L989.2 480.4M527.3 547.0L515.0 579.8M629.9 801.6L662.4 807.8M990.6 513.1L1019.7 524.6M547.2 462.7L574.3 448.9M839.4 627.7L866.4 639.4M851.4 659.0L830.9 698.4M676.5 401.4L666.0 437.9M596.5 504.3L600.6 531.2M593.8 824.6L630.0 802.9M443.7 396.6L461.6 416.0M709.5 824.2L763.2 837.5M907.3 546.5L873.3 590.1M537.3 822.5L563.0 867.2M565.4 416.6L591.0 457.5M1035.2 729.6L1053.5 736.5M1037.5 395.6L1059.7 415.7M483.4 613.0L522.0 627.1M836.2 638.2L812.7 683.4M439.8 461.5L461.8 492.6M877.8 863.3L866.7 877.0M959.3 374.7L927.3 409.5M442.9 534.7L483.4 550.7M432.0 744.5L466.4 769.1M587.3 440.2L599.4 469.9M438.3 587.6L485.3 597.0M410.9 554.7L459.3 569.5M997.2 792.8L1012.4 806.9M538.1 443.8L561.3 426.6M661.0 653.1L646.5 698.7M985.4 533.4L969.8 577.1M861.2 572.6L837.0 597.1M944.2 555.5L916.7 579.5M900.1 843.8L869.9 884.2M898.0 672.1L891.8 698.3M999.6 800.0L961.0 838.6M384.1 831.4L419.5 817.1M736.2 599.7L751.8 612.3M454.7 730.5L485.2 767.9M859.3 869.1L838.2 911.2M469.0 668.2L489.8 676.0M722.5 871.0L749.1 876.6M1022.3 799.2L1041.8 819.5M854.2 644.1L896.9 651.5M668.2 678.3L698.3 700.2M1010.8 372.4L1052.8 399.4M452.7 562.2L500.9 570.5M621.4 920.9L638.7 928.7M768.7 541.3L761.0 574.3M416.7 886.2L440.2 870.3M761.6 562.8L813.0 580.0M879.6 825.7L864.5 840.3M639.5 908.6L688.5 932.2M518.6 486.4L534.6 519.9M566.0 736.3L595.2 763.5M564.7 791.1L595.5 775.3M559.0 387.2L582.2 420.6M485.1 856.2L519.5 847.0M467.5 530.6L522.9 529.5M445.7 376.7L456.5 394.1M941.9 556.3L962.5 576.9M576.7 483.9L591.0 472.2M720.1 777.1L772.6 787.4M433.0 586.3L459.1 585.3M382.9 882.0L402.1 915.3M611.5 689.0L631.8 705.7M949.6 368.5L923.5 415.6M529.5 574.9L568.8 590.1M435.9 862.8L444.2 905.9M610.6 443.4L615.9 477.4M904.2 899.6L932.8 923.4M539.4 657.3L586.6 672.9M642.8 685.4L666.5 689.0M939.7 382.0L985.3 408.8M678.9 463.5L672.2 502.6M670.9 370.7L666.0 396.5M918.0 845.8L936.7 859.1M363.6 801.2L393.5 786.5M525.9 698.6L548.6 707.5M415.3 735.8L437.3 786.7M601.0 544.0L592.7 564.9M653.9 755.0L646.5 773.7M794.3 626.4L813.7 632.2M902.8 732.4L868.1 763.1M681.0 629.6L715.6 650.4M661.5 455.9L667.6 511.3M761.6 541.6L750.1 581.2M860.8 498.7L899.4 535.9M662.4 733.6L684.8 742.6M600.4 899.2L622.3 939.4M799.3 885.7L813.3 893.7M418.7 382.0L428.8 422.0M502.7 824.4L524.0 874.5M612.1 717.9L627.4 723.1M529.7 548.8L561.7 565.5M377.1 539.7L422.9 550.8M647.3 652.2L637.0 684.1M1044.1 877.0L1061.0 890.6M383.1 848.6L415.2 822.7M574.3 525.2L603.5 530.5M590.1 430.1L637.2 407.8M949.7 367.5L914.9 401.1M921.2 808.9L908.7 819.7M417.1 855.1L459.9 828.8M462.8 532.3L451.9 586.5M635.4 804.3L682.3 801.8M1019.6 887.5L998.7 928.5M534.1 543.1L525.4 575.3M453.2 906.7L472.0 946.5M733.6 779.0L728.0 822.8M965.5 535.4L998.9 566.3M754.3 598.7L779.9 611.0M438.5 417.5L480.2 399.7M784.2 490.6L808.1 498.3M763.3 586.8L759.1 608.3M950.1 719.5L983.0 735.0M398.7 541.5L432.2 552.5M982.0 695.0L1012.3 699.5M366.6 923.1L384.2 911.6M435.2 510.6L467.9 496.2M382.0 511.6L376.4 535.1M378.8 508.9L374.6 539.0M574.9 399.0L618.5 385.9M716.3 372.2L708.0 394.9M946.0 853.8L925.7 883.7M759.6 425.5L758.1 466.6M801.1 580.2L797.4 596.5M941.1 845.0L954.7 863.4M588.6 498.9L635.0 483.9M926.8 578.2L962.3 602.4M547.4 570.1L522.2 610.8M491.0 440.8L511.2 471.7M968.2 776.7L949.4 809.0M483.1 489.5L498.6 538.5M829.2 410.8L818.4 449.0M737.5 386.9L737.2 406.1M887.5 503.9L919.7 522.6M593.4 878.4L621.8 919.0M1034.8 786.3L1066.3 818.0M793.3 899.0L829.7 912.5M663.3 507.0L688.0 509.5M869.1 622.8L851.8 675.6M1067.6 799.6L1048.9 838.0M719.5 879.0L708.3 912.0M743.4 533.1L735.0 567.5M413.7 459.8L432.9 491.7M647.5 437.0L634.0 472.9M1047.2 519.9L1030.0 551.3M928.5 376.8L910.4 392.9M637.5 583.4L617.1 616.7M1010.9 724.1L1057.1 740.9M596.2 407.2L611.2 396.1M873.1 578.7L896.1 593.4M1011.7 573.1L994.4 593.7M711.4 905.8L704.7 929.3M934.0 404.2L904.7 441.9M440.0 849.0L470.5 886.8M703.7 851.8L691.6 885.6M390.8 478.2L427.4 464.9M972.2 453.0L958.6 475.8M990.3 763.9L1020.8 790.3M957.7 893.3L969.9 912.3M520.7 463.3L557.8 450.3M694.6 625.3L685.0 652.0M921.0 881.3L969.4 908.1M430.8 569.6L413.5 618.8M448.6 643.6L490.9 673.1M682.6 427.5L684.1 450.9M557.1 901.6L575.3 937.7M431.5 767.7L448.4 815.9M526.2 399.6L535.1 416.4M646.9 895.4L634.7 930.0M727.3 432.7L760.6 438.3M590.6 838.8L607.4 832.0M530.0 718.9L580.4 740.2M943.6 433.6L988.9 466.2M785.1 436.0L784.4 457.2M767.3 711.9L817.8 733.6M544.3 524.1L564.3 528.4M901.7 858.9L932.9 884.4M785.1 799.6L804.5 806.4M537.5 717.0L517.0 760.2M731.2 568.2L766.4 585.5M519.2 686.2L557.2 695.3M1059.8 713.5L1040.7 747.8M582.5 633.2L607.1 647.7M792.2 810.9L777.2 849.3M549.3 519.4L595.7 524.1M725.4 553.0L708.0 599.3M998.6 888.9L985.4 899.5M972.7 741.0L948.7 764.6M854.3 454.0L829.9 485.0M440.3 493.8L451.0 507.3M795.4 693.8L830.1 695.6M731.4 509.0L726.6 562.2M713.6 365.7L703.6 400.7M692.1 883.1L708.6 893.4M388.5 769.1L403.4 760.1M675.3 836.4L692.7 839.9M434.9 884.1L485.3 867.9M958.7 728.9L974.8 739.8M703.4 805.5L680.6 843.3M353.5 421.8L406.7 411.6M801.3 846.2L793.8 874.5M483.4 615.1L470.8 655.4M801.9 864.9L832.4 887.1M1026.5 631.6L1004.2 669.7M479.5 923.4L507.4 915.2M831.3 756.4L824.7 782.7M671.7 753.2L653.4 791.3M408.1 525.5L433.1 534.9M909.8 526.4L896.1 571.4M391.7 773.1L424.1 759.0M834.6 653.6L824.7 680.2M936.3 685.5L978.7 698.9M704.3 587.2L719.4 596.1M1047.7 870.4L1064.5 885.1M939.7 525.8L980.1 547.2M538.9 850.8L576.9 824.2M963.2 499.5L935.6 542.5M820.7 638.7L867.2 660.2M409.8 575.2L435.7 579.6M543.9 726.8L511.2 769.1M1000.8 899.4L983.0 924.1M404.1 648.1L447.9 663.7M601.8 520.8L645.9 544.8M407.2 906.5L437.0 896.1M654.0 705.9L677.8 722.6M364.6 820.5L397.3 793.8M402.4 437.8L449.2 409.0M517.3 711.8L499.5 745.8M865.5 449.3L895.1 486.6M1003.4 758.7L1042.6 788.0M913.4 719.2L939.6 731.7M983.0 789.8L941.9 827.6M414.0 400.6L416.9 430.8M622.8 838.4L658.4 859.2M659.4 627.2L692.4 639.3M448.3 467.8L494.8 456.0M662.4 410.6L678.7 417.9M826.6 447.0L812.1 476.5M894.8 606.4L888.6 632.9M1039.4 471.7L1014.4 500.2M602.5 752.6L628.1 799.1M584.3 600.1L576.3 636.6M577.7 734.1L556.6 761.1M739.9 770.6L772.2 778.0M425.6 423.7L441.9 462.9M603.8 865.6L612.5 890.0M479.4 473.3L520.9 448.4M817.1 609.3L857.1 622.8M683.8 412.5L669.4 451.5M421.8 811.8L449.1 797.4M638.0 642.1L620.9 682.0M700.2 893.5L746.6 914.7M1042.4 825.7L999.7 853.6M806.8 707.6L785.6 733.0M485.3 664.9L464.0 697.6M965.2 532.5L983.4 552.5M934.7 491.7L951.7 500.5M696.5 663.6L719.3 671.5M493.4 546.8L510.2 550.8M429.0 758.7L433.4 778.7M702.0 877.8L695.0 913.3M391.5 871.2L417.8 857.0M550.7 491.1L588.4 477.2M754.7 468.7L751.1 514.0M495.3 671.4L477.3 709.5M776.9 916.6L811.4 929.7M374.2 882.4L393.8 927.8M702.2 491.0L698.9 509.7M753.0 495.2L791.6 508.0M879.0 887.7L844.7 914.2M634.4 865.4L659.1 874.9M982.9 904.1L1009.0 917.9M925.6 741.8L948.8 763.6M894.3 733.8L944.0 745.0M394.9 379.7L398.6 398.9M994.7 488.5L962.1 521.2M820.3 605.7L856.6 606.5M749.7 613.2L738.5 655.3M439.9 750.1L462.7 769.8M421.1 447.6L462.4 417.3M947.8 466.4L987.1 497.8M480.5 561.2L524.9 569.3M669.6 546.0L694.4 548.0M714.7 748.5L696.1 786.7M685.6 384.1L739.3 392.9M513.7 406.2L519.1 427.6M961.3 653.7L953.2 675.2M581.4 863.6L587.7 888.2M765.0 440.4L802.4 446.8M563.6 800.9L609.8 776.3M791.5 472.7L789.2 491.1M658.5 511.0L661.8 561.8M743.1 783.6L772.6 793.1M690.0 665.2L708.8 678.1M960.2 460.1L936.6 479.7M1014.5 399.6L1037.9 405.3M394.5 788.6L403.3 807.5M613.0 414.7L626.1 441.5M856.3 640.0L904.0 662.3M976.2 687.1L997.9 693.9M582.5 482.2L606.6 522.2M773.4 809.6L760.7 857.8M729.5 705.9L715.0 748.4M775.9 435.5L773.2 481.5M369.3 721.5L402.6 732.5M705.0 773.3L697.3 808.9M562.2 679.7L543.0 727.8M611.7 856.6L635.7 868.5M735.8 383.9L772.1 389.6M721.2 723.1L706.1 773.3M779.7 414.9L822.0 428.5M977.5 843.3L949.2 883.8M527.5 836.5L562.2 803.1M1038.8 889.6L1071.4 921.3M837.2 587.8L830.0 613.3M935.9 830.1L969.4 857.9M700.6 680.5L747.2 709.3M520.3 625.0L511.1 649.5M928.7 391.4L948.7 408.4M1020.4 559.2L1004.0 610.7M752.1 744.8L742.9 762.8M921.0 505.9L956.2 530.8M494.4 748.4L517.9 791.7M899.7 693.8L927.2 704.6M449.6 557.9L475.0 561.2M702.9 373.1L696.9 406.6M460.5 854.4L472.6 880.3M730.0 922.6L761.5 924.8M1030.3 516.3L1054.7 531.3M810.7 858.2L831.1 869.4M1037.7 763.1L1067.1 790.1M905.1 800.5L920.0 811.5M683.5 527.4L720.9 530.1M783.3 856.0L771.5 880.3M486.9 448.9L515.4 438.0M971.4 836.7L1015.5 870.8M576.9 406.6L588.6 430.0M702.1 744.4L694.9 764.0M595.5 406.6L606.3 456.6M383.9 826.7L424.5 815.7M579.3 817.3L580.9 842.1M1008.2 787.0L993.9 800.6M799.8 459.0L834.4 464.4M501.2 868.9L538.7 846.6M780.9 410.5L819.4 420.0M698.3 792.3L725.1 796.7M725.8 476.4L730.5 520.9M499.4 653.6L536.7 665.5M669.1 648.3L710.2 672.0M846.8 434.6L833.5 459.9M626.0 637.5L608.5 662.9M860.8 867.5L846.8 906.2M1022.2 580.3L1039.4 593.6M930.9 592.2L922.2 625.6M861.4 860.2L884.8 880.2M373.9 481.6L385.6 501.5M679.1 451.6L722.3 456.3M577.9 403.5L620.9 386.6M990.8 519.6L960.7 565.3M825.9 668.4L817.8 694.5M672.6 891.2L656.6 943.7M876.9 818.4L895.2 832.7M529.2 407.4L550.8 399.5M1023.0 793.0L985.7 833.2M474.5 436.9L493.6 480.5M749.6 809.5L744.7 826.4M430.3 782.5L455.0 771.2M510.2 852.2L529.2 840.8M883.9 384.7L858.7 421.6M858.7 476.4L826.7 503.0M836.4 374.8L863.8 399.3M802.6 882.8L838.0 892.2M904.2 635.2L897.5 663.8M648.3 480.1L640.9 525.4M960.8 619.9L1000.6 642.5M927.7 573.4L890.8 613.4M800.0 724.8L783.5 752.4M970.7 729.8L996.9 758.5M879.3 450.2L900.7 460.0M419.0 778.0L455.6 756.1M539.5 646.5L559.0 649.1M887.5 382.9L922.6 395.5M408.9 603.8L442.5 617.7M896.4 431.5L941.6 460.1M600.5 475.7L618.0 516.4M1001.7 678.4L1029.9 695.5M831.7 358.9L817.8 405.2M435.2 541.6L471.3 549.7M380.4 450.6L411.3 434.0M634.1 917.0L625.4 938.5M408.5 676.3L443.7 689.6M602.3 925.4L637.3 905.8M540.9 618.4L560.1 622.4M671.2 904.8L654.2 936.8M880.0 819.6L900.9 831.4M801.3 380.0L792.8 401.4M605.6 760.0L626.0 810.0M998.8 708.7L1049.4 726.4M690.4 827.6L672.3 871.0M461.2 439.8L493.0 415.2M827.0 463.6L863.4 496.0M1042.4 736.6L1022.0 762.1M699.8 424.6L689.9 475.6M599.3 848.8L646.2 871.2M997.5 759.5L979.1 781.2M931.5 394.6L951.8 416.1M639.0 664.4L685.8 691.9M1017.6 664.9L1039.9 673.7M896.5 635.1L933.2 659.0M751.4 444.3L749.4 462.7M495.6 908.7L501.5 926.1M797.0 487.1L783.4 526.2M993.2 382.2L1022.7 396.6M368.4 570.3L396.8 577.8M1041.5 556.0L1068.4 579.4M717.7 830.2L715.5 855.0M394.2 637.9L373.5 662.6M696.0 437.3L732.5 441.3M479.6 834.8L500.0 886.8M456.2 522.1L483.5 532.9M1015.3 383.5L1005.7 401.1M816.5 851.9L855.4 880.4M419.1 625.2L400.1 666.4M771.0 444.3L765.7 462.1M1019.4 788.5L997.6 799.1M531.9 496.7L566.0 476.2M703.4 797.7L755.6 811.4M421.4 628.0L396.9 666.8M653.2 829.6L687.1 850.4M1047.5 812.4L1035.4 828.5M987.0 397.0L1023.7 436.5M778.3 786.1L802.4 792.4M425.1 775.0L432.8 800.4M532.5 867.0L576.4 853.7M939.6 597.6L928.0 643.3M970.3 537.0L989.6 552.4M360.3 746.3L400.5 765.9M583.8 796.9L605.4 797.2M1003.2 601.2L994.2 637.2M555.0 421.5L597.7 408.2M844.1 593.2L857.0 603.8M761.3 650.5L747.2 684.7M357.9 409.8L397.0 393.7M703.0 668.9L742.2 683.0M1009.8 742.8L1027.4 765.6M990.3 796.2L1019.3 832.2M626.0 657.6L658.7 678.4M848.4 554.5L883.7 583.1M618.8 750.4L653.3 758.0M959.4 517.8L937.8 541.0M804.9 467.1L837.4 465.6M384.4 589.2L402.9 595.8M1052.4 689.6L1038.3 715.5M822.4 464.0L816.2 490.1M752.2 754.4L770.4 761.0M797.8 641.8L850.5 650.5M604.9 824.0L626.1 868.2M685.7 615.8L674.5 644.6M514.1 740.6L550.6 779.3M553.5 538.4L583.5 546.1M1034.2 905.8L1012.1 931.3M562.6 743.5L575.8 756.9M388.0 428.7L397.8 457.7M861.3 897.9L883.7 922.0M805.2 449.5L824.7 458.9M470.2 888.6L507.0 860.2M425.7 706.0L416.4 733.4M361.5 795.6L392.4 768.8M614.7 555.3L636.1 567.9M1061.5 602.1L1051.6 628.8M882.5 906.9L859.0 930.0M905.1 900.1L942.3 924.1M933.9 879.6L947.8 888.1M745.0 549.8L725.7 602.1M573.0 873.3L597.6 908.4M849.1 628.2L821.4 668.9M879.8 635.3L911.5 650.4M692.0 781.4L720.9 786.5M881.0 577.4L931.0 596.7M919.4 579.1L894.5 601.2M763.6 393.8L813.5 407.1M745.2 919.6L787.6 933.8M902.4 593.2L877.8 630.7M508.6 653.2L539.1 656.1M683.7 629.6L735.9 634.0M482.8 788.4L509.9 817.8M766.7 763.2L753.5 808.6M699.4 729.9L725.8 736.6M357.2 885.9L399.3 856.1M641.5 898.7L636.4 943.4M952.0 565.9L936.0 594.2M937.0 399.4L972.8 430.8M764.0 718.3L751.4 747.0M713.8 476.6L719.2 526.4M800.2 620.4L828.3 631.9M754.3 479.6L782.6 486.0M547.8 772.1L561.3 800.0M381.6 854.8L411.7 829.6M829.6 667.0L858.1 696.1M635.0 870.1L672.2 884.6M382.5 711.8L380.7 733.0M956.6 543.8L948.6 559.3M434.7 524.2L461.1 532.3M637.5 711.3L622.9 751.6M469.8 409.8L485.9 402.0M813.6 406.8L851.3 428.8M496.4 582.9L473.1 628.3M983.1 779.5L1011.3 807.0M726.0 726.2L722.9 754.1M639.7 745.4L665.4 760.4M673.8 590.0L668.8 613.0M680.3 527.3L723.0 546.8M456.6 635.4L451.5 659.7M533.3 521.6L532.2 573.3M982.5 799.9L963.2 828.4M1032.5 422.3L1018.3 441.4M966.6 534.4L939.4 558.8M913.3 766.6L932.3 785.2M556.4 693.4L536.8 723.3M598.9 421.6L645.5 426.9M443.1 446.7L467.7 425.5M1059.7 844.8L1034.1 872.2M764.0 624.0L788.9 631.8M712.0 677.9L728.6 679.6M941.6 606.7L919.5 646.6M872.2 720.0L890.0 724.0M593.2 475.9L612.7 466.9M500.8 661.0L487.8 693.0M387.6 660.2L379.1 680.6M651.8 462.1L646.5 484.0M886.2 855.5L869.3 864.9M832.5 772.8L806.6 817.4M459.3 778.6L492.2 772.2M727.2 832.5L722.9 858.3M391.8 479.2L401.1 507.8M1047.6 751.2L1035.6 767.4M611.6 543.0L638.1 538.7M401.9 849.9L413.0 896.1M763.4 540.7L801.0 533.2M1037.5 876.4L1003.6 903.8M876.3 728.3L869.7 751.1M432.3 425.2L448.0 412.4M944.1 604.6L965.8 612.9M641.5 707.9L692.0 719.1M576.2 406.8L617.9 382.8M920.1 721.7L940.8 725.3M1032.3 736.1L1011.9 755.6M1029.1 521.8L1002.9 546.8M995.4 533.2L1040.6 562.6M971.6 787.0L987.2 795.4M529.9 722.1L521.9 752.5M923.6 831.7L951.9 850.4M716.8 912.4L766.6 927.8M395.6 451.4L416.8 440.5M909.8 748.5L871.0 765.1M1056.2 796.8L1037.4 842.1M1024.5 748.8L1009.1 775.3M497.7 616.0L480.2 646.2M435.3 759.5L450.1 798.0M796.5 487.2L833.8 494.0M800.2 470.8L792.1 495.3M593.3 847.8L613.8 876.3M736.0 602.9L716.1 630.7M579.5 620.3L569.6 636.8M950.8 785.5L932.9 808.0M708.5 783.1L754.3 802.8M1063.3 682.7L1052.4 700.9M1009.8 391.9L970.3 431.3M639.6 677.9L666.8 692.3M871.5 800.8L887.8 817.4M696.8 854.8L684.5 909.2M406.6 747.5L378.1 771.3M930.3 423.6L969.4 445.1M639.6 455.4L679.2 474.6M737.9 780.7L783.1 797.6M551.6 848.5L562.2 901.7M757.4 906.8L789.3 919.5M781.8 796.1L771.5 847.0M526.8 658.2L519.7 674.6M776.2 699.6L753.3 741.7M752.0 744.5L744.7 765.7M943.8 446.7L968.8 465.3M823.3 847.0L846.7 868.7M1059.2 786.4L1042.5 810.3M743.2 826.5L723.1 860.7M658.6 568.6L648.2 612.0M652.9 761.9L702.8 781.5M502.2 815.1L512.4 837.9M370.6 611.0L396.2 621.0M988.0 779.3L967.2 803.7M662.9 756.5L656.9 781.3M660.6 785.9L676.6 794.6M616.7 678.4L610.7 708.3M492.2 834.8L507.9 884.6M414.7 680.3L465.3 688.6M585.2 390.5L601.2 439.1M789.2 774.9L780.0 812.5M1015.7 454.9L983.6 484.5M982.9 629.1L1007.7 644.5M858.4 534.6L840.1 554.1M850.7 756.3L889.2 785.5M543.7 758.5L557.0 789.5M378.4 522.3L413.7 489.4M746.8 904.2L733.5 933.3M727.3 407.1L752.7 415.8M642.1 626.4L630.2 645.9M836.8 712.7L825.8 735.1M576.1 556.4L558.9 605.6M428.3 689.8L460.1 701.2M988.8 799.9L974.7 812.4M614.7 820.7L624.8 835.2M826.0 741.9L810.6 770.7M946.6 517.7L974.4 532.8M583.5 894.4L637.4 879.3M613.4 617.3L594.6 656.2M502.2 652.6L489.8 703.6M599.8 895.9L651.5 908.6M831.6 822.0L867.1 842.1M450.5 847.6L491.0 824.7M712.3 554.6L758.9 559.3M813.2 839.1L865.4 842.0M827.1 614.1L841.3 624.8M975.5 832.2L990.8 839.1M634.2 514.8L663.3 522.9M799.1 848.9L781.4 895.1M699.3 613.8L691.5 632.3M365.8 854.1L385.0 888.0M502.9 721.1L551.2 748.1M440.6 535.1L437.5 552.0M908.8 516.4L945.5 548.3M904.8 382.0L934.4 409.2M651.2 828.6L680.9 833.7M719.3 619.0L709.1 659.8M371.5 602.2L392.7 604.1M699.9 747.8L741.6 762.3M467.9 702.1L509.7 718.5M430.7 921.7L472.5 905.7M618.3 759.9L649.4 768.7M1032.3 597.1L1013.9 645.5M597.0 857.5L607.5 875.6M785.4 491.6L772.5 535.2M859.1 442.4L829.6 468.3M409.9 776.6L451.5 769.4M943.3 650.2L938.5 668.0M830.2 740.9L882.2 750.1M609.7 453.8L655.2 462.9M1000.8 907.7L975.3 932.5M653.2 787.2L626.9 835.3M507.0 533.9L533.2 540.1M669.3 618.7L640.3 658.1M1035.9 872.2L1001.2 901.7M729.1 898.6L769.4 914.5M555.7 587.1L551.6 615.5M483.4 665.9L519.8 686.4M457.0 602.2L443.5 633.2M987.5 519.4L963.0 568.8M568.7 672.8L600.6 680.5M927.1 675.4L959.8 696.6M856.0 587.7L847.8 602.1M911.5 649.0L890.7 688.0M402.5 453.0L438.5 448.2M1046.9 840.5L1026.0 861.7M677.7 779.9L666.0 824.3M723.8 767.8L728.7 806.7M652.6 891.0L672.4 894.4M768.0 866.7L755.6 912.1M543.9 764.9L554.5 778.5M952.9 654.1L946.5 681.6M763.3 768.0L745.2 805.3M636.5 792.6L664.8 804.5M757.1 458.6L799.4 464.6M447.0 926.0L492.7 899.3M813.1 488.8L851.6 509.6M910.3 730.6L879.6 775.7M986.9 613.1L1007.4 625.0M546.2 637.4L537.7 661.4M863.7 387.0L887.9 397.4M710.8 474.5L693.7 522.1M614.9 542.3L636.5 544.0M635.1 848.4L678.1 871.4M1013.8 494.4L987.5 521.6M637.5 753.3L617.6 788.4M638.4 450.8L682.4 465.5M680.3 620.9L667.4 638.2M841.5 578.8L861.0 590.1M908.1 595.7L884.8 641.0M474.9 500.5L485.9 513.8M994.0 756.3L1021.2 774.8M681.5 408.4L666.2 458.1M954.5 871.1L935.8 898.2M958.9 538.8L931.5 565.2M508.7 520.8L531.0 526.1M923.0 848.9L902.3 867.5M433.9 773.1L459.7 765.5M533.6 783.8L554.6 770.6M703.7 681.8L682.7 716.0M748.2 387.0L743.2 424.5M762.4 714.9L799.1 731.7M885.6 427.4L919.8 462.7M756.3 602.4L746.1 636.1M848.3 810.8L877.6 820.6M365.4 607.6L410.2 621.8M516.3 402.0L553.0 389.6M457.9 659.0L477.9 673.8M1036.8 394.5L1020.6 431.2M1015.2 475.3L997.9 508.6M624.8 578.6L606.0 618.1M750.1 535.6L776.2 538.8M571.5 492.0L589.7 482.3M761.8 561.1L802.8 571.3M364.4 411.7L387.5 402.2M674.6 810.8L658.6 862.6M421.5 860.3L452.8 892.4M975.6 564.7L1024.4 583.1M541.1 812.4L584.2 794.2M775.5 868.2L759.2 898.0M465.9 527.4L513.1 536.3M770.4 537.9L759.7 555.7M927.9 895.5L955.0 915.3M610.3 864.1L642.9 892.3M562.3 422.9L579.0 458.0M575.7 504.7L604.7 494.6M368.9 389.2L385.4 385.1M684.8 714.8L707.3 724.9M941.3 899.4L955.8 926.5M735.6 605.6L757.9 610.3M522.8 624.5L537.0 632.1M646.5 843.4L634.2 878.1M786.4 812.7L783.9 867.6M739.1 563.6L783.8 570.0M844.2 738.6L836.3 762.6M446.1 670.8L440.5 697.5M588.3 568.8L568.8 601.4M631.6 674.6L666.2 687.4M730.8 561.1L720.1 586.3M393.3 604.8L412.2 613.1M870.6 625.8L913.4 631.5M468.0 661.2L447.3 702.1M632.2 491.8L624.8 516.8M1021.2 396.1L1002.2 423.5M828.6 805.3L852.0 813.1M353.4 522.0L403.3 535.8M433.5 527.7L452.3 529.1M405.5 505.2L421.4 496.1M725.0 809.3L712.7 847.7M889.4 742.8L867.1 762.2M782.4 629.2L824.4 636.8M686.1 644.0L723.8 657.5M1072.9 536.7L1043.1 560.6M575.5 464.9L590.8 494.2M673.8 500.8L667.7 542.7M865.5 481.3L855.9 496.0M699.1 741.8L696.1 759.4M390.2 653.7L433.2 664.0M680.6 507.9L679.1 539.6M409.9 533.3L456.8 533.2M660.1 843.2L637.5 889.6M867.0 416.4L848.3 442.2M695.6 395.0L712.8 396.6M741.8 883.3L789.5 899.4M982.0 731.9L963.0 758.4M502.8 424.1L544.2 413.8M568.2 632.7L590.6 644.6M983.8 807.0L1004.0 831.0M738.1 534.6L706.2 580.4M971.0 642.4L1021.5 656.1M649.0 876.9L690.4 890.5M490.7 512.2L483.7 531.3M976.6 917.5L1016.0 935.9M681.6 654.2L672.1 678.1M586.3 568.1L634.1 585.8M901.7 882.3L918.1 899.6M690.3 830.1L727.1 844.6M361.9 520.4L403.2 509.6M659.4 686.0L702.3 701.5M881.2 609.0L925.7 629.9M835.1 812.1L860.9 834.4M921.0 770.6L892.9 798.3M423.8 760.6L448.1 802.5M802.1 541.6L824.5 548.4M901.7 711.1L945.5 713.0M678.6 703.3L706.0 705.5M566.7 821.8L602.2 814.5M619.5 759.2L670.8 774.9M899.1 580.9L873.7 602.2M652.0 385.9L637.4 435.8M553.6 794.7L575.7 781.1M818.4 697.4L854.3 704.9M608.1 882.6L626.9 870.9M498.2 841.4L509.9 888.1M528.3 624.5L515.4 653.5M638.2 475.5L637.8 519.1M576.4 429.1L600.7 449.0M635.6 904.7L666.0 920.7M647.2 494.9L647.4 515.1M686.4 472.9L715.3 480.2M834.1 797.7L826.8 821.1M810.7 797.1L789.7 848.0M987.2 573.7L1013.4 589.6M873.6 628.0L863.7 665.2M464.0 619.0L445.0 658.8M720.7 645.8L748.7 663.0M1052.4 484.4L1040.5 513.3M654.6 546.3L641.3 592.1M945.9 522.9L985.0 545.9M714.4 913.5L763.1 932.3M542.9 444.8L565.2 439.1M874.8 393.0L839.8 429.7M707.3 619.2L747.9 636.8M642.1 623.2L635.3 647.4M588.1 512.7L576.1 549.2M944.9 729.8L914.9 774.8M1018.6 834.3L1006.1 846.2M606.6 759.0L659.9 767.2M908.8 834.7L922.8 842.5M934.4 419.5L908.1 440.5M402.3 721.1L446.0 738.0M745.1 366.6L727.9 417.5M570.3 525.6L557.3 554.2M836.9 383.0L824.3 411.2M811.1 450.0L806.3 467.5M423.9 408.1L443.3 442.2M813.9 537.0L834.1 539.2M790.6 377.5L813.2 386.8M758.6 461.8L749.8 508.1M967.8 902.4L937.5 925.4M593.2 533.4L637.5 545.3M603.3 687.2L588.4 729.4M721.6 526.2L707.1 576.4M423.2 596.1L439.5 602.1M993.5 486.6L1030.2 503.0M414.3 648.4L457.4 668.4M882.0 745.9L872.9 761.0M888.8 429.1L909.0 446.5M469.2 910.7L503.7 893.6M976.6 405.1L967.0 428.0M758.7 587.1L807.3 607.5M879.2 596.5L857.1 636.1M466.1 752.1L487.3 800.2M978.3 373.0L950.7 417.7M916.2 530.8L954.3 551.9M636.6 456.1L680.8 462.9M523.8 610.3L559.6 620.0M1036.5 420.3L1013.8 447.4M1055.8 914.3L1041.3 933.7M441.5 647.3L494.0 662.5M615.5 864.3L636.9 880.6M1031.1 441.6L1057.5 466.8M733.5 454.9L721.4 508.8M743.9 853.2L737.2 898.2M786.2 850.9L784.3 877.1M612.9 837.0L645.5 851.4M381.3 789.2L390.1 808.8M936.0 801.2L964.2 833.5M475.6 607.6L494.9 618.0M482.6 530.2L500.9 534.1M975.8 604.0L960.5 629.8M723.4 423.8L711.9 458.1M412.8 650.1L452.4 661.5M423.0 443.0L440.2 476.0M502.4 513.5L490.6 554.8M912.6 622.6L940.3 632.1M945.9 742.6L923.9 770.1M478.6 640.5L522.4 652.4M592.2 392.2L602.9 431.5M872.7 722.8L924.7 737.9M892.5 807.4L867.9 838.0M973.9 797.9L955.4 811.3M828.7 421.9L821.0 463.3M821.7 697.0L795.0 741.3M834.4 873.8L879.8 880.7M807.9 381.5L810.2 426.1M961.8 571.2L946.9 614.9M456.9 470.4L471.6 513.8M542.6 857.2L550.6 877.2M987.2 383.4L965.6 405.9M377.2 511.5L425.3 494.8M979.9 839.8L1012.5 860.7M701.5 761.9L748.3 784.3M878.7 618.7L904.3 628.5M623.2 688.7L662.1 705.1M988.6 525.4L1020.0 566.2M969.7 756.9L989.7 769.6M720.9 913.6L738.3 917.2M571.4 516.6L594.0 508.9M603.7 893.7L611.3 932.2M550.2 770.8L575.7 818.7M614.9 725.2L585.1 769.7M795.4 872.5L821.4 889.9M498.2 873.2L526.4 863.2M428.1 725.7L420.2 747.2M875.7 519.7L897.1 536.4M901.8 769.4L941.5 798.3M1009.2 662.8L1002.9 681.2M546.1 905.0L554.0 920.4M921.7 802.2L908.4 813.0M975.9 809.2L1005.1 838.9M385.1 918.5L408.4 917.2M963.1 696.8L1005.1 719.3M376.4 469.8L392.4 505.8M459.4 784.7L479.1 835.9M491.5 580.8L520.8 581.1M1005.4 557.8L1027.9 573.3M654.8 770.7L672.6 782.9M472.8 510.4L514.0 485.1M536.8 638.2L533.0 668.1M765.0 518.8L807.0 529.5M533.5 738.5L519.8 750.2M426.3 733.6L468.0 742.7M890.5 832.1L924.6 847.1M481.1 497.8L489.8 524.1M771.2 810.9L748.7 857.6M935.4 479.6L955.5 494.2M505.7 363.7L523.7 408.5M979.9 845.2L953.7 861.8M597.6 770.1L624.6 759.0M466.2 449.6L489.2 439.9M737.3 509.8L730.7 545.2M548.1 428.7L562.9 463.2M937.4 668.1L921.5 718.8M922.0 904.9L897.0 947.8M775.1 672.3L822.7 692.5M605.0 428.7L628.2 478.6M762.3 800.8L747.2 834.5M513.7 848.2L544.5 888.6M1069.6 623.6L1044.9 665.9M669.6 469.4L661.7 515.7M618.4 714.2L609.2 732.6M894.6 794.6L923.9 815.6M928.2 798.0L961.4 822.5M476.5 417.1L506.9 407.2M829.1 753.0L878.8 771.9M548.4 493.6L573.1 542.2M779.6 626.5L756.9 673.8M534.4 785.4L550.6 819.1M558.1 688.8L580.8 699.3M467.4 652.3L462.7 674.4M438.8 787.3L479.1 770.8M820.8 647.6L802.8 676.9M538.1 583.8L569.3 591.8M913.3 442.0L936.6 457.8M658.2 711.3L634.1 755.6M476.0 836.9L486.1 861.1M968.9 725.3L1004.8 733.8M851.7 893.9L870.3 914.7M966.1 826.9L992.3 847.7M663.4 886.3L652.5 912.2M664.6 583.4L656.7 598.9M609.1 638.4L608.7 680.5M1027.7 845.3L1016.4 857.8M393.6 689.6L437.8 703.6M752.1 620.4L735.3 654.6M755.6 761.7L779.2 778.2M644.7 561.4L673.9 578.2M429.9 626.5L417.8 655.2M688.8 356.9L677.7 407.8M733.8 908.5L760.1 925.8M390.7 472.9L427.9 452.4M551.9 480.2L604.8 462.1M743.8 473.7L736.8 517.6M1017.6 483.2L1001.9 502.7M648.3 508.1L672.8 515.5M560.4 603.2L553.9 618.0M851.3 388.0L820.8 429.6M796.0 540.1L794.5 558.2M476.6 446.5L487.3 473.7M447.2 700.3L443.3 736.0M889.6 798.4L874.2 817.5M399.0 749.9L409.2 770.7M962.5 629.0L1007.3 650.5M520.3 516.3L569.1 494.5M672.7 599.7L714.5 628.1M1026.7 748.3L991.4 787.8M734.4 859.8L758.2 868.7M1052.4 508.5L1024.8 554.5M600.3 626.9L631.7 663.4M993.8 560.2L984.0 599.5M949.4 474.7L993.4 503.6M743.7 812.7L787.1 818.1M652.8 654.4L698.5 677.6M1037.7 578.6L1062.1 586.6M672.3 519.4L716.4 524.4M370.2 429.5L388.5 452.9M413.1 698.3L445.6 705.0M569.1 550.9L551.4 591.8M752.0 485.8L749.2 528.5M972.9 873.9L957.9 892.0M621.3 766.0L657.5 782.2M480.1 570.4L469.0 604.7M473.8 524.5L511.6 541.0M790.8 537.3L782.0 578.5M1032.1 720.8L1026.0 737.0M918.2 470.9L905.7 495.4M844.2 865.2L839.2 896.6M821.5 843.6L866.4 874.0M551.8 740.8L540.6 758.1M593.8 875.1L623.4 921.7M887.7 566.9L898.6 582.0M375.0 401.0L388.8 432.0M966.7 637.0L947.8 659.8M399.9 623.8L415.0 636.7M680.0 828.4L674.8 846.3M508.1 432.6L523.5 423.3M854.7 805.7L856.7 824.8M1053.3 805.5L1037.2 821.7M680.5 447.7L666.0 480.0M751.9 826.4L740.2 862.6M468.7 554.7L507.4 570.9M834.4 703.2L830.1 722.3M953.6 549.3L944.1 590.4M965.9 457.3L948.3 489.1M1059.1 386.2L1045.3 405.9M467.2 700.1L510.7 706.8M970.3 901.3L954.8 918.4M993.1 707.0L1010.8 717.9M461.7 432.2L468.7 464.1M828.0 878.7L821.6 909.3M545.2 365.2L567.3 404.4M928.9 746.1L914.1 767.1M1065.4 685.9L1049.5 719.8M709.5 516.8L714.4 568.2M584.9 606.9L559.4 654.6M469.6 636.7L466.7 653.0M484.1 641.9L473.4 667.9M416.6 547.5L407.4 570.5M747.0 753.6L730.5 785.5M799.6 864.5L821.9 875.9M944.1 771.4L918.7 817.9M401.0 869.1L415.7 886.3M717.9 363.4L710.6 417.2M537.6 593.2L512.7 636.8M566.5 615.9L555.8 654.0M850.5 693.1L866.8 697.1M476.7 724.7L501.1 768.1M531.3 880.8L555.7 913.4M991.2 851.4L962.0 894.0M607.0 732.5L575.0 778.2M819.9 590.6L839.7 596.4M894.3 709.4L877.4 762.8M433.4 725.2L453.0 732.8M1000.6 690.0L1027.6 700.7M393.4 477.0L404.1 506.8M900.3 446.1L889.9 472.7M509.3 436.4L523.4 464.2M925.1 505.9L915.1 520.3M1047.6 870.0L1032.4 892.7M674.9 490.7L704.4 503.0M960.4 874.9L938.6 911.7M482.1 928.9L504.1 912.0M426.5 647.3L410.5 677.6M966.0 680.6L950.8 713.6M1005.3 463.9L980.8 487.4M634.3 469.3L631.2 498.0M740.1 881.1L730.7 909.4M408.0 646.8L389.1 682.8M606.5 786.3L624.1 780.5M394.3 665.4L423.2 672.5M855.3 591.9L876.5 605.5M815.8 618.1L794.6 669.4M1024.9 753.2L1014.2 777.6M867.7 591.7L844.8 629.7M915.4 450.2L887.0 480.4M446.9 875.5L480.3 856.4M881.7 560.4L916.5 580.3M978.0 798.3L1015.2 813.2M855.9 534.9L836.9 568.2M523.4 900.2L530.9 922.6M749.6 555.5L790.0 560.5M444.3 537.0L443.8 565.6M815.2 616.7L855.1 633.1M540.6 810.6L563.3 859.7M732.2 837.7L750.4 845.1M970.1 377.6L1011.1 409.0M902.0 642.8L896.8 664.6M418.4 673.7L435.8 681.5M595.7 735.5L567.3 759.1M463.3 836.5L469.7 890.7M582.5 730.8L553.7 777.5M866.2 382.2L830.7 422.2M908.4 554.8L921.0 565.3M763.1 571.3L732.3 617.8M817.5 704.2L808.1 737.9M980.4 685.1L996.4 689.0M521.0 475.3L528.1 492.1M873.5 908.5L910.1 942.5M638.9 835.1L631.9 862.2M739.9 476.8L730.6 531.4M824.9 553.8L820.6 593.0M765.6 874.5L794.9 891.4M396.1 550.9L393.4 567.1M680.3 436.1L671.0 454.5M779.2 633.8L775.0 661.4M723.6 603.1L757.4 625.3M481.3 680.7L528.1 702.5M781.5 664.0L812.1 668.6M736.4 774.5L773.0 790.8M622.6 569.7L653.0 576.6M562.9 719.1L584.8 728.4M811.5 669.7L827.2 674.6M597.8 660.0L649.2 673.1M835.0 715.0L814.6 762.2M691.9 624.0L727.9 635.3M1062.3 436.9L1049.8 458.7M1062.6 656.4L1053.0 685.4M526.5 504.7L532.0 534.6M440.6 919.2L458.3 910.1M961.5 681.2L977.5 684.9M757.1 509.0L781.1 515.7M962.1 554.3L995.8 574.0M619.9 515.6L622.9 535.5M562.8 548.2L596.3 562.1M473.7 739.8L492.7 781.4M486.6 850.4L495.2 873.0M450.4 549.5L480.3 557.4M652.8 781.3L635.9 805.0M467.9 489.6L521.0 474.9M653.4 756.9L642.2 784.2M541.5 800.3L551.0 830.3M866.8 395.0L888.3 405.1M507.1 847.0L520.9 837.8M947.0 470.1L920.9 512.3M962.3 522.8L942.5 553.6M879.1 395.2L896.1 410.1M442.0 650.5L418.9 697.5M979.1 768.5L1007.5 788.5M756.3 587.8L742.9 636.1M1041.8 776.0L1061.2 791.6M692.8 789.1L741.1 809.9M919.3 522.5L896.3 567.7M973.7 667.1L1015.2 684.6M705.5 611.4L755.6 635.3M465.2 810.6L488.4 793.5M437.5 686.0L486.1 712.6M516.6 671.9L498.8 695.4M440.3 520.8L473.2 535.3M714.2 396.1L718.7 435.1M1048.1 406.9L1060.8 427.3M858.0 713.2L841.3 743.4M676.0 454.7L652.8 504.4M736.0 595.1L755.3 605.2M893.6 741.7L867.2 777.0M376.0 834.3L394.3 880.2M497.5 664.2L515.1 677.5M869.0 600.2L860.0 633.5M999.7 387.4L1033.2 397.7M534.5 827.8L556.2 865.6M566.0 386.9L585.7 435.8M465.5 870.3L486.2 907.3M723.0 699.2L757.8 716.3M918.2 498.8L938.4 538.8M672.3 506.6L722.3 494.8M899.4 754.9L874.9 797.5M878.9 417.5L848.9 453.1M918.4 742.1L881.4 780.7M467.9 484.1L489.5 528.5M874.3 547.7L892.9 569.5M762.7 651.8L738.2 692.1M418.7 524.7L456.5 494.6M802.5 878.4L792.3 904.5M646.7 789.9L624.3 828.4M757.3 385.0L804.1 402.7M815.1 908.9L809.2 941.3M505.8 788.0L514.6 802.1M799.1 541.1L791.3 582.2M782.4 492.1L832.2 505.2M992.9 883.9L1027.1 914.1M752.1 659.5L776.1 682.8M517.9 652.0L508.0 699.3M1011.3 702.6L1000.1 738.3M942.0 740.8L928.0 758.2M1024.7 848.1L999.2 867.5M651.6 578.9L642.0 598.3M824.1 654.6L815.6 675.4M537.9 683.6L578.7 690.4M876.1 572.1L894.4 582.3M779.8 837.6L826.4 851.5M941.8 691.2L933.9 717.0M712.6 673.9L699.7 689.8M485.8 826.3L537.8 807.0M464.9 828.4L512.0 809.1M856.9 420.0L901.2 450.3M556.7 629.8L593.2 641.3M747.1 415.4L782.8 420.4M482.7 610.1L526.3 625.4M465.5 536.2L505.5 541.9M535.7 427.5L553.6 417.5M464.6 743.5L477.4 761.0M407.8 369.7L422.3 412.5M1005.6 378.7L985.6 399.5M498.5 808.1L514.2 846.3M479.6 727.4L466.8 750.7M670.2 729.2L696.8 756.3M433.9 734.1L475.2 760.2M392.8 673.3L443.6 687.4M912.4 504.5L903.8 520.9M1057.2 619.5L1050.8 640.7M368.8 862.8L401.9 895.9M755.4 535.9L803.5 538.9M503.6 491.7L529.3 521.9M551.7 769.9L563.6 786.3M369.8 694.9L393.1 698.5M525.8 684.8L512.0 718.0M992.9 632.4L1008.3 641.9M506.7 474.5L514.8 495.4M1030.1 528.7L997.9 563.5M729.5 861.5L767.7 878.3M676.9 816.2L657.3 859.9M394.2 487.9L434.9 473.1M699.1 722.9L688.0 753.5M1048.4 676.9L1033.9 715.2M1048.9 625.3L1036.6 647.1M840.1 522.4L824.3 567.9M629.4 866.5L616.7 896.1M382.5 859.0L413.7 842.1M701.2 886.8L684.6 936.9M901.7 658.7L945.9 680.8M820.2 430.1L844.8 452.2M817.5 464.6L814.0 507.7M1045.0 438.0L1063.9 450.1M577.1 746.0L590.2 774.0M781.7 786.6L817.0 801.6M774.6 679.1L804.5 688.2M515.4 730.9L560.2 761.7M527.7 693.0L569.4 698.8" stroke="#fff" stroke-width="1.15" stroke-opacity=".9" fill="none"/><polygon points="466.0,746.0 508.0,769.0 480.0,782.0 458.0,762.0" fill="#dcdee2" /><polygon points="989.0,846.0 1059.0,820.0 1059.0,880.0 1020.0,905.0 995.0,870.0" fill="#dfe1e5" /><polyline points="1000.0,850.0 1059.0,828.0" fill="none" stroke="#cfd2d7" stroke-width="1.2" stroke-linejoin="round" stroke-linecap="round" /><polyline points="1004.0,855.0 1059.0,835.0" fill="none" stroke="#cfd2d7" stroke-width="1.2" stroke-linejoin="round" stroke-linecap="round" /><polyline points="1008.0,860.0 1059.0,842.0" fill="none" stroke="#cfd2d7" stroke-width="1.2" stroke-linejoin="round" stroke-linecap="round" /><polyline points="1012.0,865.0 1059.0,849.0" fill="none" stroke="#cfd2d7" stroke-width="1.2" stroke-linejoin="round" stroke-linecap="round" /><polyline points="1016.0,870.0 1059.0,856.0" fill="none" stroke="#cfd2d7" stroke-width="1.2" stroke-linejoin="round" stroke-linecap="round" /><polyline points="1020.0,875.0 1059.0,863.0" fill="none" stroke="#cfd2d7" stroke-width="1.2" stroke-linejoin="round" stroke-linecap="round" /><polygon points="806.0,415.0 831.0,410.0 834.0,432.0 812.0,436.0" fill="#f9e0de" /><polygon points="603.0,432.0 618.0,428.0 640.0,470.0 630.0,476.0" fill="#dcdee2" /><polygon points="842.0,392.0 866.0,388.0 880.0,440.0 862.0,470.0 848.0,440.0" fill="#dcdee2" /><polygon points="880.0,420.0 900.0,416.0 912.0,470.0 896.0,476.0" fill="#dcdee2" /><polygon points="694.0,900.0 716.0,896.0 722.0,928.0 700.0,928.0" fill="#dcdee2" /><polygon points="915.0,522.0 936.0,503.0 949.0,519.0 947.0,540.0 936.0,544.0 915.0,528.0" fill="#f9e0de" /><polygon points="540.0,820.0 574.0,812.0 577.0,842.0 546.0,848.0" fill="#f9e0de" /><polygon points="866.0,895.0 892.0,886.0 950.0,928.0 862.0,928.0" fill="#f9e0de" /><polygon points="733.0,902.0 749.0,904.0 749.0,928.0 726.0,928.0" fill="#f9e0de" /><polygon points="712.0,900.0 722.0,902.0 720.0,916.0 710.0,914.0" fill="#f9e0de" /><polygon points="840.0,440.0 862.0,436.0 866.0,452.0 846.0,456.0" fill="#f9e0de" /><polygon points="870.0,740.0 884.0,738.0 886.0,752.0 872.0,756.0" fill="#f9e0de" /><polygon points="498.0,456.0 516.0,451.0 535.0,450.0 536.0,459.0 526.0,470.0 498.0,473.0 496.0,464.0" fill="#acdcbc" /><polygon points="395.0,700.0 421.0,677.0 452.0,704.0 485.0,738.0 465.0,760.0 430.0,727.0 418.0,716.0" fill="#acdcbc" /><polygon points="375.0,634.0 392.0,640.0 396.0,654.0 384.0,668.0 375.0,672.0" fill="#acdcbc" /><polygon points="609.0,605.0 643.0,614.0 690.0,640.0 712.0,652.0 708.0,663.0 677.0,662.0 604.0,631.0" fill="#acdcbc" /><polygon points="527.0,570.0 541.0,568.0 543.0,596.0 529.0,597.0" fill="#acdcbc" /><polygon points="546.0,572.0 553.0,572.0 553.0,588.0 546.0,588.0" fill="#acdcbc" /><polygon points="596.0,592.0 606.0,590.0 612.0,602.0 600.0,606.0" fill="#acdcbc" /><polygon points="684.0,797.0 696.0,790.0 724.0,788.0 733.0,799.0 734.0,820.0 730.0,841.0 715.0,844.0 686.0,837.0 683.0,816.0" fill="#acdcbc" /><polygon points="710.0,858.0 717.0,858.0 717.0,878.0 710.0,878.0" fill="#acdcbc" /><polygon points="633.0,881.0 661.0,888.0 670.0,928.0 613.0,928.0 619.0,904.0" fill="#acdcbc" /><polygon points="745.0,876.0 764.0,885.0 758.0,904.0 740.0,897.0" fill="#acdcbc" /><polygon points="851.0,836.0 897.0,815.0 914.0,842.0 888.0,874.0 858.0,886.0 848.0,860.0" fill="#acdcbc" /><polygon points="863.0,786.0 882.0,779.0 905.0,816.0 889.0,820.0" fill="#acdcbc" /><polygon points="897.0,889.0 915.0,884.0 922.0,905.0 904.0,912.0" fill="#acdcbc" /><polygon points="1010.0,442.0 1059.0,436.0 1059.0,482.0 1036.0,478.0 1014.0,462.0" fill="#acdcbc" /><polygon points="984.0,476.0 994.0,474.0 1000.0,490.0 988.0,494.0" fill="#acdcbc" /><polygon points="1040.0,528.0 1059.0,520.0 1059.0,560.0 1044.0,556.0" fill="#acdcbc" /><polygon points="1036.0,664.0 1052.0,660.0 1056.0,680.0 1040.0,684.0" fill="#acdcbc" /><polygon points="659.0,382.0 680.0,382.0 676.0,393.0 661.0,392.0" fill="#acdcbc" /><polygon points="754.0,389.0 770.0,388.0 768.0,404.0 755.0,403.0" fill="#acdcbc" /><polygon points="765.0,427.0 770.0,426.0 771.0,436.0 766.0,437.0" fill="#acdcbc" /><polygon points="778.0,485.0 786.0,484.0 787.0,492.0 779.0,493.0" fill="#acdcbc" /><polygon points="673.0,487.0 679.0,487.0 679.0,493.0 673.0,493.0" fill="#acdcbc" /><polygon points="383.0,424.0 389.0,420.0 392.0,428.0 386.0,432.0" fill="#acdcbc" /><polygon points="925.0,524.0 932.0,518.0 938.0,526.0 931.0,532.0" fill="#acdcbc" /><polygon points="531.0,750.0 538.0,750.0 535.0,829.0 529.0,829.0" fill="#acdcbc" /><polygon points="459.0,838.0 467.0,836.0 469.0,852.0 461.0,854.0" fill="#acdcbc" /><polygon points="487.0,862.0 495.0,860.0 497.0,870.0 489.0,872.0" fill="#acdcbc" /><polygon points="860.0,666.0 874.0,660.0 880.0,672.0 866.0,678.0" fill="#acdcbc" /><polygon points="925.0,696.0 932.0,695.0 933.0,706.0 926.0,707.0" fill="#acdcbc" /><polygon points="998.0,900.0 1024.0,892.0 1034.0,914.0 1006.0,922.0" fill="#f3efd6" /><polygon points="1010.0,905.0 1040.0,920.0 1059.0,928.0 1020.0,928.0" fill="#acdcbc" /><polygon points="404.0,752.0 412.0,748.0 418.0,760.0 410.0,764.0" fill="#acdcbc" /><polygon points="376.0,830.0 386.0,836.0 382.0,846.0 375.0,842.0" fill="#acdcbc" /><polygon points="380.0,912.0 394.0,908.0 398.0,928.0 380.0,928.0" fill="#acdcbc" /><polygon points="500.0,623.0 598.0,623.5 598.0,626.0 500.0,626.0" fill="#acdcbc" /><polygon points="440.0,654.0 452.0,650.0 455.0,655.0 443.0,659.0" fill="#acdcbc" /><polyline points="368.0,700.0 384.0,672.0 398.0,655.0 424.0,641.0 465.0,633.0 524.0,631.0 590.0,632.0 620.0,641.0 656.0,659.0 687.0,676.0 730.0,688.0 770.0,702.0" fill="none" stroke="#96b8f4" stroke-width="12.5" stroke-linejoin="round" stroke-linecap="round" /><polyline points="770.0,702.0 800.0,716.0 828.0,731.0 856.0,745.0 876.0,756.0 885.0,772.0 888.0,792.0" fill="none" stroke="#96b8f4" stroke-width="7.5" stroke-linejoin="round" stroke-linecap="round" /><polyline points="748.0,694.0 770.0,724.0 800.0,748.0 830.0,768.0 856.0,780.0 878.0,789.0 890.0,796.0" fill="none" stroke="#96b8f4" stroke-width="6" stroke-linejoin="round" stroke-linecap="round" /><polyline points="822.0,728.0 824.0,748.0 822.0,766.0" fill="none" stroke="#96b8f4" stroke-width="5" stroke-linejoin="round" stroke-linecap="round" /><polyline points="884.0,786.0 900.0,806.0 930.0,842.0 960.0,880.0 984.0,914.0 996.0,936.0" fill="none" stroke="#96b8f4" stroke-width="14.5" stroke-linejoin="round" stroke-linecap="round" /><polyline points="996.0,384.0 976.0,397.0 956.0,410.0" fill="none" stroke="#96b8f4" stroke-width="7" stroke-linejoin="round" stroke-linecap="round" /><polyline points="947.0,431.0 929.0,459.0 914.0,486.0 901.0,510.0 901.0,523.0 912.0,545.0 922.0,564.0" fill="none" stroke="#8db2f0" stroke-width="1.6" stroke-linejoin="round" stroke-linecap="round" /><polyline points="933.0,769.0 926.0,790.0 922.0,808.0" fill="none" stroke="#96b8f4" stroke-width="4" stroke-linejoin="round" stroke-linecap="round" /><polyline points="1030.0,388.0 1046.0,398.0" fill="none" stroke="#96b8f4" stroke-width="3" stroke-linejoin="round" stroke-linecap="round" /><polyline points="462.5,624.0 463.1,642.0" fill="none" stroke="#fff" stroke-width="2.2" stroke-linejoin="round" stroke-linecap="round" /><polyline points="525.2,622.0 525.2,640.0" fill="none" stroke="#fff" stroke-width="2.2" stroke-linejoin="round" stroke-linecap="round" /><polyline points="548.0,622.5 548.0,640.5" fill="none" stroke="#fff" stroke-width="2.2" stroke-linejoin="round" stroke-linecap="round" /><polyline points="590.4,623.5 591.6,641.5" fill="none" stroke="#fff" stroke-width="2.2" stroke-linejoin="round" stroke-linecap="round" /><polyline points="628.9,639.5 635.1,656.5" fill="none" stroke="#fff" stroke-width="2.2" stroke-linejoin="round" stroke-linecap="round" /><polyline points="658.9,654.8 666.5,671.2" fill="none" stroke="#fff" stroke-width="2.2" stroke-linejoin="round" stroke-linecap="round" /><polyline points="683.1,668.1 691.5,683.9" fill="none" stroke="#fff" stroke-width="2.2" stroke-linejoin="round" stroke-linecap="round" /><polyline points="708.9,675.5 715.1,692.5" fill="none" stroke="#fff" stroke-width="2.2" stroke-linejoin="round" stroke-linecap="round" /><polyline points="747.4,686.5 753.6,703.5" fill="none" stroke="#fff" stroke-width="2.2" stroke-linejoin="round" stroke-linecap="round" /><polyline points="785.5,704.2 794.5,719.8" fill="none" stroke="#fff" stroke-width="2.2" stroke-linejoin="round" stroke-linecap="round" /><polyline points="807.5,714.2 816.5,729.8" fill="none" stroke="#fff" stroke-width="2.2" stroke-linejoin="round" stroke-linecap="round" /><polyline points="833.5,728.2 842.5,743.8" fill="none" stroke="#fff" stroke-width="2.2" stroke-linejoin="round" stroke-linecap="round" /><polyline points="856.8,740.6 867.2,755.4" fill="none" stroke="#fff" stroke-width="2.2" stroke-linejoin="round" stroke-linecap="round" /><polyline points="794.2,741.1 805.8,754.9" fill="none" stroke="#fff" stroke-width="2.2" stroke-linejoin="round" stroke-linecap="round" /><polyline points="830.2,763.1 841.8,776.9" fill="none" stroke="#fff" stroke-width="2.2" stroke-linejoin="round" stroke-linecap="round" /><polyline points="859.6,777.6 872.4,790.4" fill="none" stroke="#fff" stroke-width="2.2" stroke-linejoin="round" stroke-linecap="round" /><polyline points="904.9,798.2 891.1,809.8" fill="none" stroke="#fff" stroke-width="2.2" stroke-linejoin="round" stroke-linecap="round" /><polyline points="940.9,840.2 927.1,851.8" fill="none" stroke="#fff" stroke-width="2.2" stroke-linejoin="round" stroke-linecap="round" /><polyline points="974.9,884.2 961.1,895.8" fill="none" stroke="#fff" stroke-width="2.2" stroke-linejoin="round" stroke-linecap="round" /><polyline points="393.1,649.2 406.9,660.8" fill="none" stroke="#fff" stroke-width="2.2" stroke-linejoin="round" stroke-linecap="round" /><polyline points="416.0,522.0 510.0,565.0 602.0,609.0" fill="none" stroke="#fff" stroke-width="4" stroke-linejoin="round" stroke-linecap="round" /><polyline points="375.0,503.0 416.0,522.0" fill="none" stroke="#fff" stroke-width="3.5" stroke-linejoin="round" stroke-linecap="round" /><polyline points="416.0,522.0 398.0,560.0 380.0,600.0 375.0,612.0" fill="none" stroke="#fff" stroke-width="3" stroke-linejoin="round" stroke-linecap="round" /><polyline points="416.0,522.0 380.0,538.0" fill="none" stroke="#fff" stroke-width="2.5" stroke-linejoin="round" stroke-linecap="round" /><polyline points="416.0,522.0 436.0,568.0 450.0,600.0" fill="none" stroke="#fff" stroke-width="2.5" stroke-linejoin="round" stroke-linecap="round" /><polyline points="416.0,522.0 440.0,452.0 470.0,382.0" fill="none" stroke="#fff" stroke-width="3" stroke-linejoin="round" stroke-linecap="round" /><polyline points="416.0,522.0 400.0,470.0 386.0,440.0 375.0,430.0" fill="none" stroke="#fff" stroke-width="2.5" stroke-linejoin="round" stroke-linecap="round" /><polyline points="416.0,522.0 470.0,500.0 520.0,486.0" fill="none" stroke="#fff" stroke-width="2.5" stroke-linejoin="round" stroke-linecap="round" /><polyline points="375.0,470.0 430.0,481.0 498.0,452.0 570.0,428.0 603.0,428.0 663.0,408.0 679.0,392.0 684.0,382.0" fill="none" stroke="#fff" stroke-width="3.5" stroke-linejoin="round" stroke-linecap="round" /><polyline points="680.0,417.0 726.0,428.0 751.0,429.0 831.0,412.0 903.0,409.0 940.0,412.0 1000.0,396.0 1059.0,392.0" fill="none" stroke="#fff" stroke-width="4" stroke-linejoin="round" stroke-linecap="round" /><polyline points="940.0,412.0 954.0,480.0 1007.0,564.0 1040.0,620.0 1059.0,650.0" fill="none" stroke="#fff" stroke-width="3.5" stroke-linejoin="round" stroke-linecap="round" /><polyline points="940.0,412.0 900.0,440.0 820.0,470.0 760.0,500.0 700.0,520.0" fill="none" stroke="#fff" stroke-width="2.5" stroke-linejoin="round" stroke-linecap="round" /><polyline points="800.0,420.0 835.0,470.0 870.0,520.0 905.0,580.0 915.0,600.0" fill="none" stroke="#fff" stroke-width="3" stroke-linejoin="round" stroke-linecap="round" /><polyline points="940.0,382.0 940.0,412.0 947.0,470.0 947.0,560.0" fill="none" stroke="#fff" stroke-width="2.5" stroke-linejoin="round" stroke-linecap="round" /><polyline points="500.0,530.0 560.0,536.0 660.0,541.0 700.0,546.0 800.0,560.0 893.0,584.0" fill="none" stroke="#fff" stroke-width="3" stroke-linejoin="round" stroke-linecap="round" /><polyline points="612.0,604.0 720.0,655.0 790.0,690.0 830.0,702.0 900.0,728.0 945.0,742.0" fill="none" stroke="#fff" stroke-width="3" stroke-linejoin="round" stroke-linecap="round" /><polyline points="945.0,742.0 1000.0,708.0 1059.0,676.0" fill="none" stroke="#fff" stroke-width="3" stroke-linejoin="round" stroke-linecap="round" /><polyline points="945.0,742.0 1000.0,790.0 1059.0,832.0" fill="none" stroke="#fff" stroke-width="3" stroke-linejoin="round" stroke-linecap="round" /><polyline points="945.0,742.0 955.0,790.0 926.0,829.0" fill="none" stroke="#fff" stroke-width="2.5" stroke-linejoin="round" stroke-linecap="round" /><polyline points="800.0,560.0 806.0,620.0 815.0,690.0 822.0,730.0" fill="none" stroke="#fff" stroke-width="3" stroke-linejoin="round" stroke-linecap="round" /><polyline points="822.0,766.0 800.0,800.0 766.0,850.0 746.0,890.0 740.0,928.0" fill="none" stroke="#fff" stroke-width="3" stroke-linejoin="round" stroke-linecap="round" /><polyline points="640.0,668.0 670.0,720.0 702.0,745.0 770.0,770.0 830.0,786.0 870.0,790.0" fill="none" stroke="#fff" stroke-width="3" stroke-linejoin="round" stroke-linecap="round" /><polyline points="375.0,751.0 463.0,802.0 530.0,832.0 551.0,860.0 603.0,922.0" fill="none" stroke="#fff" stroke-width="3.5" stroke-linejoin="round" stroke-linecap="round" /><polyline points="425.0,740.0 490.0,800.0 530.0,832.0" fill="none" stroke="#fff" stroke-width="2.5" stroke-linejoin="round" stroke-linecap="round" /><polyline points="375.0,900.0 470.0,858.0 528.0,832.0 603.0,799.0 680.0,770.0 700.0,745.0" fill="none" stroke="#fff" stroke-width="3" stroke-linejoin="round" stroke-linecap="round" /><polyline points="375.0,921.0 480.0,880.0 603.0,830.0 690.0,800.0" fill="none" stroke="#fff" stroke-width="2.5" stroke-linejoin="round" stroke-linecap="round" /><polyline points="530.0,832.0 603.0,868.0 700.0,900.0 770.0,928.0" fill="none" stroke="#fff" stroke-width="3.5" stroke-linejoin="round" stroke-linecap="round" /><polyline points="603.0,868.0 640.0,800.0 660.0,760.0 670.0,720.0" fill="none" stroke="#fff" stroke-width="2.5" stroke-linejoin="round" stroke-linecap="round" /><polyline points="541.0,710.0 536.0,760.0 530.0,832.0" fill="none" stroke="#fff" stroke-width="2.5" stroke-linejoin="round" stroke-linecap="round" /><polyline points="375.0,622.0 430.0,620.0 470.0,619.0 540.0,619.5 600.0,621.0 640.0,640.0 690.0,665.0" fill="none" stroke="#fff" stroke-width="4.4" stroke-linejoin="round" stroke-linecap="round" /><polyline points="400.0,670.0 430.0,655.0 470.0,646.0 540.0,644.0 600.0,646.0 640.0,662.0 700.0,690.0 750.0,704.0" fill="none" stroke="#fff" stroke-width="2.5" stroke-linejoin="round" stroke-linecap="round" /><polyline points="926.0,829.0 960.0,864.0 996.0,900.0 1020.0,928.0" fill="none" stroke="#fff" stroke-width="3.5" stroke-linejoin="round" stroke-linecap="round" /><polyline points="926.0,829.0 1000.0,808.0 1059.0,800.0" fill="none" stroke="#fff" stroke-width="2.5" stroke-linejoin="round" stroke-linecap="round" /><polyline points="875.0,800.0 840.0,850.0 820.0,900.0 812.0,928.0" fill="none" stroke="#fff" stroke-width="2.5" stroke-linejoin="round" stroke-linecap="round" /><polyline points="893.0,584.0 960.0,640.0 1022.0,695.0 1059.0,720.0" fill="none" stroke="#fff" stroke-width="3" stroke-linejoin="round" stroke-linecap="round" /><polyline points="850.0,600.0 893.0,584.0" fill="none" stroke="#fff" stroke-width="2.5" stroke-linejoin="round" stroke-linecap="round" /><polyline points="1007.0,564.0 1059.0,540.0" fill="none" stroke="#fff" stroke-width="2.5" stroke-linejoin="round" stroke-linecap="round" /><polyline points="470.0,618.0 466.0,560.0 462.0,520.0" fill="none" stroke="#fff" stroke-width="2" stroke-linejoin="round" stroke-linecap="round" /><polyline points="541.0,618.0 541.0,710.0" fill="none" stroke="#fff" stroke-width="2.5" stroke-linejoin="round" stroke-linecap="round" /><polyline points="603.0,420.0 612.0,470.0 640.0,541.0" fill="none" stroke="#fff" stroke-width="2.5" stroke-linejoin="round" stroke-linecap="round" /><polyline points="726.0,428.0 722.0,500.0 700.0,546.0" fill="none" stroke="#fff" stroke-width="2.5" stroke-linejoin="round" stroke-linecap="round" /><polyline points="450.0,600.0 496.0,640.0 520.0,700.0 541.0,710.0" fill="none" stroke="#fff" stroke-width="2" stroke-linejoin="round" stroke-linecap="round" /><polyline points="831.0,412.0 820.0,382.0" fill="none" stroke="#fff" stroke-width="2.5" stroke-linejoin="round" stroke-linecap="round" /><polyline points="680.0,417.0 640.0,470.0 600.0,500.0" fill="none" stroke="#fff" stroke-width="2" stroke-linejoin="round" stroke-linecap="round" /><text x="391" y="407.5" textLength="80.5" lengthAdjust="spacing" style="font-size:16.5px;fill:#3a3d42;" class="ml">17E ARR.</text><text x="671.5" y="387.3" textLength="113" lengthAdjust="spacing" style="font-size:14px;fill:#3a3d42;" class="ml">MONTMARTRE</text><text x="684" y="436.8" textLength="65.5" lengthAdjust="spacing" style="font-size:14.5px;fill:#3a3d42;" class="ml">PIGALLE</text><text x="993.5" y="437.3" textLength="31" lengthAdjust="spacing" style="font-size:16.5px;fill:#3a3d42;" class="ml">19E</text><text x="1006.7" y="700" textLength="62" lengthAdjust="spacing" style="font-size:16px;fill:#3a3d42;" class="ml">E ARR.</text><text x="370" y="869.8" textLength="71" lengthAdjust="spacing" style="font-size:16.5px;fill:#3a3d42;" class="ml">5E ARR.</text><text x="603" y="898.8" textLength="131" lengthAdjust="spacing" style="font-size:14px;fill:#3a3d42;" class="ml">MONTPARNASSE</text><text x="786.5" y="717.7" textLength="73" lengthAdjust="spacing" style="font-size:29.5px;fill:#1f1f1f;font-weight:700;" class="ml">Paris</text><text x="461.5" y="468" textLength="108.5" lengthAdjust="spacing" style="font-size:16px;fill:#2d8a55;" class="ml">Parc Monceau</text><text x="381" y="725.2" textLength="119.5" lengthAdjust="spacing" style="font-size:16px;fill:#2d8a55;" class="ml">Champ-de-Mars</text><text x="675" y="816.3" textLength="69.5" lengthAdjust="spacing" style="font-size:16px;fill:#2d8a55;" class="ml">Jardin du</text><text x="662.7" y="833.5" textLength="94" lengthAdjust="spacing" style="font-size:16px;fill:#2d8a55;" class="ml">Luxembourg</text><text x="846" y="852.3" textLength="77" lengthAdjust="spacing" style="font-size:16px;fill:#2d8a55;" class="ml">Jardin des</text><text x="857.3" y="869" textLength="55.5" lengthAdjust="spacing" style="font-size:16px;fill:#2d8a55;" class="ml">Plantes</text><text x="912.7" y="768.5" textLength="96" lengthAdjust="spacing" style="font-size:16px;fill:#2d8a55;" class="ml">Coulée verte</text><text x="908.3" y="784.6" textLength="100" lengthAdjust="spacing" style="font-size:16px;fill:#2d8a55;" class="ml">René-Dumont</text><text x="901.3" y="891.8" textLength="91.3" lengthAdjust="spacing" style="font-size:16px;fill:#2d8a55;" class="ml">Accor Arena</text><text x="1026" y="494.4" textLength="56" lengthAdjust="spacing" style="font-size:16px;fill:#2d8a55;" class="ml">Parc de</text><text x="1020.7" y="511.1" textLength="66" lengthAdjust="spacing" style="font-size:16px;fill:#2d8a55;" class="ml">Belleville</text><text x="1004" y="636.4" textLength="96" lengthAdjust="spacing" style="font-size:16px;fill:#2d8a55;" class="ml">Cimetière du</text><text x="993.5" y="653.2" textLength="104" lengthAdjust="spacing" style="font-size:16px;fill:#2d8a55;" class="ml">Père-Lachaise</text><text x="336" y="511" textLength="63.6" lengthAdjust="spacing" style="font-size:16px;fill:#17828f;" class="ml">Triomphe</text><text x="301" y="611.1" textLength="111" lengthAdjust="spacing" style="font-size:16px;fill:#17828f;" class="ml">Palais de Tokyo</text><text x="322" y="677.3" textLength="75" lengthAdjust="spacing" style="font-size:16px;fill:#17828f;" class="ml">Tour Eiffel</text><text x="499.7" y="566.5" textLength="82" lengthAdjust="spacing" style="font-size:16px;fill:#17828f;" class="ml">Petit Palais</text><text x="556.5" y="531.4" textLength="103.5" lengthAdjust="spacing" style="font-size:16px;fill:#17828f;" class="ml">Palais Garnier</text><text x="767.8" y="533" textLength="103" lengthAdjust="spacing" style="font-size:16px;fill:#17828f;" class="ml">Musée Grévin</text><text x="618.8" y="600" textLength="159" lengthAdjust="spacing" style="font-size:16px;fill:#17828f;" class="ml">Place de la Concorde</text><text x="573.5" y="654.5" textLength="129.3" lengthAdjust="spacing" style="font-size:16px;fill:#17828f;" class="ml">Musée du Louvre</text><text x="557.7" y="697.8" textLength="143" lengthAdjust="spacing" style="font-size:16px;fill:#17828f;" class="ml">Hôtel des Invalides</text><text x="795.3" y="624.6" textLength="153.4" lengthAdjust="spacing" style="font-size:16px;fill:#17828f;" class="ml">Le Centre Pompidou</text><text x="1021.6" y="600" textLength="110" lengthAdjust="spacing" style="font-size:16px;fill:#17828f;" class="ml">La Bellevilloise</text><text x="964.5" y="734" textLength="140" lengthAdjust="spacing" style="font-size:16px;fill:#17828f;" class="ml">Place de la Bastille</text><text x="624" y="853.2" textLength="148.5" lengthAdjust="spacing" style="font-size:16px;fill:#17828f;" class="ml">Tour Montparnasse</text><text x="797.6" y="809.2" textLength="71.2" lengthAdjust="spacing" style="font-size:16px;fill:#17828f;" class="ml">Panthéon</text><text x="1042" y="815" textLength="24" lengthAdjust="spacing" style="font-size:16px;fill:#17828f;" class="ml">nce</text><text x="496.2" y="747.4" textLength="114" lengthAdjust="spacing" style="font-size:16px;fill:#3a76d6;" class="ml">Le Bon Marché</text><text x="517" y="763.6" textLength="93" lengthAdjust="spacing" style="font-size:16px;fill:#3a76d6;" class="ml">Rive Gauche</text><text x="962.7" y="463.2" textLength="124" lengthAdjust="spacing" style="font-size:16px;fill:#d43a72;" class="ml">Generator Hostel</text><text x="352" y="451" textLength="79" lengthAdjust="spacing" transform="rotate(17 352 451)" style="font-size:12.5px;fill:#5c6066;" class="ml">Av. des Ternes</text><text x="397" y="614" textLength="56" lengthAdjust="spacing" transform="rotate(-68 397 614)" style="font-size:12.5px;fill:#5c6066;" class="ml">Av. Kléber</text><text x="810" y="413" textLength="93" lengthAdjust="spacing" transform="rotate(-3 810 413)" style="font-size:12.5px;fill:#5c6066;" class="ml">Bd de la Chapelle</text><text x="815" y="441" textLength="78" lengthAdjust="spacing" transform="rotate(62 815 441)" style="font-size:12.5px;fill:#5c6066;" class="ml">Bd de Magenta</text><text x="944" y="548" textLength="82" lengthAdjust="spacing" transform="rotate(66 944 548)" style="font-size:12.5px;fill:#5c6066;" class="ml">Ave Parmentier</text><text x="1000" y="412" textLength="18" lengthAdjust="spacing" transform="rotate(-25 1000 412)" style="font-size:12px;fill:#5c6066;" class="ml">Av.</text><text x="805.5" y="353" textLength="46" lengthAdjust="spacing" transform="rotate(90 805.5 353)" style="font-size:11px;fill:#5c6066;" class="ml">Abbesses</text><text x="473.4" y="649.6" textLength="66.7" lengthAdjust="spacing" transform="rotate(-3 473.4 649.6)" style="font-size:12.5px;fill:#5c6066;" class="ml">Quai d'Orsay</text><text x="444.4" y="668" textLength="97.5" lengthAdjust="spacing" transform="rotate(-4 444.4 668)" style="font-size:12.5px;fill:#5c6066;" class="ml">Rue de l'Université</text><text x="381" y="749" textLength="79" lengthAdjust="spacing" transform="rotate(36 381 749)" style="font-size:12.5px;fill:#5c6066;" class="ml">Bd de Grenelle</text><text x="412" y="728" textLength="92" lengthAdjust="spacing" transform="rotate(43 412 728)" style="font-size:12.5px;fill:#5c6066;" class="ml">Av. de Suffren</text><text x="466" y="803.5" textLength="68" lengthAdjust="spacing" transform="rotate(27 466 803.5)" style="font-size:12.5px;fill:#5c6066;" class="ml">Bd Garibaldi</text><text x="371" y="818" textLength="23.5" lengthAdjust="spacing" style="font-size:12.5px;fill:#5c6066;" class="ml">Zola</text><text x="683" y="738" textLength="92" lengthAdjust="spacing" transform="rotate(20 683 738)" style="font-size:12.5px;fill:#5c6066;" class="ml">Bd Saint-Germain</text><text x="781" y="746.5" textLength="33" lengthAdjust="spacing" transform="rotate(24 781 746.5)" style="font-size:13px;fill:#4a78d0;font-style:italic;" class="ml">Seine</text><text x="817" y="821.5" textLength="60" lengthAdjust="spacing" transform="rotate(90 817 821.5)" style="font-size:12.5px;fill:#5c6066;" class="ml">Rue Monge</text><text x="973" y="799" textLength="80" lengthAdjust="spacing" transform="rotate(38 973 799)" style="font-size:12.5px;fill:#5c6066;" class="ml">Av. Daumesnil</text><g transform="translate(416.3 522.5)"><path d="M0 0C-2.6 -5.2 -11.4 -11 -11.4 -21A11.4 11.4 0 1 1 11.4 -21C11.4 -11 2.6 -5.2 0 0Z" fill="#15a4b9"/><path d="M-1.2 -29h2.4l1.2 10h-4.8zM-4.5 -17.5h9v2.6h-9z" fill="#fff"/></g><g transform="translate(428 622)"><path d="M0 0C-2.6 -5.2 -11.4 -11 -11.4 -21A11.4 11.4 0 1 1 11.4 -21C11.4 -11 2.6 -5.2 0 0Z" fill="#15a4b9"/><path d="M-6 -24l6-4 6 4v1.4h-12zM-5 -21.4h10v6h-10zM-6 -14.6h12v1.6h-12z" fill="#fff"/><path d="M-2.6 -16.4v-4l2.6 2.4 2.6-2.4v4" stroke="#15a4b9" stroke-width="1.1" fill="none"/></g><g transform="translate(412.8 689)"><path d="M0 0C-2.6 -5.2 -11.4 -11 -11.4 -21A11.4 11.4 0 1 1 11.4 -21C11.4 -11 2.6 -5.2 0 0Z" fill="#15a4b9"/><path d="M-5 -28h2.4v2h1.6v-2h2v2h1.6v-2h2.4v4.6l-1.6 1.2v5h2.2v2.6h-11.2v-2.6h2.2v-5l-1.6-1.2z" fill="#fff"/></g><g transform="translate(541.9 709.8)"><path d="M0 0C-2.6 -5.2 -11.4 -11 -11.4 -21A11.4 11.4 0 1 1 11.4 -21C11.4 -11 2.6 -5.2 0 0Z" fill="#15a4b9"/><path d="M-5 -28h2.4v2h1.6v-2h2v2h1.6v-2h2.4v4.6l-1.6 1.2v5h2.2v2.6h-11.2v-2.6h2.2v-5l-1.6-1.2z" fill="#fff"/></g><g transform="translate(555.1 606)"><path d="M0 0C-2.6 -5.2 -11.4 -11 -11.4 -21A11.4 11.4 0 1 1 11.4 -21C11.4 -11 2.6 -5.2 0 0Z" fill="#15a4b9"/><path d="M-6 -24l6-4 6 4v1.4h-12zM-5 -21.4h10v6h-10zM-6 -14.6h12v1.6h-12z" fill="#fff"/><path d="M-2.6 -16.4v-4l2.6 2.4 2.6-2.4v4" stroke="#15a4b9" stroke-width="1.1" fill="none"/></g><g transform="translate(602.6 610.6)"><path d="M0 0C-2.6 -5.2 -11.4 -11 -11.4 -21A11.4 11.4 0 1 1 11.4 -21C11.4 -11 2.6 -5.2 0 0Z" fill="#15a4b9"/><path d="M-6.5 -25h3l1-1.6h5l1 1.6h3v8.4h-13z" fill="#fff"/><circle cx="0" cy="-20.6" r="2.5" fill="#15a4b9"/></g><g transform="translate(676 539.6)"><path d="M0 0C-2.6 -5.2 -11.4 -11 -11.4 -21A11.4 11.4 0 1 1 11.4 -21C11.4 -11 2.6 -5.2 0 0Z" fill="#15a4b9"/><path d="M-2 -28l6 2v2.4l-4.4-1.4v8a2.6 2.6 0 1 1 -1.6 -2.4z" fill="#fff"/></g><g transform="translate(752 543.6)"><path d="M0 0C-2.6 -5.2 -11.4 -11 -11.4 -21A11.4 11.4 0 1 1 11.4 -21C11.4 -11 2.6 -5.2 0 0Z" fill="#15a4b9"/><path d="M-6 -24l6-4 6 4v1.4h-12zM-5 -21.4h10v6h-10zM-6 -14.6h12v1.6h-12z" fill="#fff"/><path d="M-2.6 -16.4v-4l2.6 2.4 2.6-2.4v4" stroke="#15a4b9" stroke-width="1.1" fill="none"/></g><g transform="translate(719.8 665.4)"><path d="M0 0C-2.6 -5.2 -11.4 -11 -11.4 -21A11.4 11.4 0 1 1 11.4 -21C11.4 -11 2.6 -5.2 0 0Z" fill="#15a4b9"/><path d="M-6 -24l6-4 6 4v1.4h-12zM-5 -21.4h10v6h-10zM-6 -14.6h12v1.6h-12z" fill="#fff"/><path d="M-2.6 -16.4v-4l2.6 2.4 2.6-2.4v4" stroke="#15a4b9" stroke-width="1.1" fill="none"/></g><g transform="translate(823.4 664.4)"><path d="M0 0C-2.6 -5.2 -11.4 -11 -11.4 -21A11.4 11.4 0 1 1 11.4 -21C11.4 -11 2.6 -5.2 0 0Z" fill="#15a4b9"/><path d="M-6 -24l6-4 6 4v1.4h-12zM-5 -21.4h10v6h-10zM-6 -14.6h12v1.6h-12z" fill="#fff"/><path d="M-2.6 -16.4v-4l2.6 2.4 2.6-2.4v4" stroke="#15a4b9" stroke-width="1.1" fill="none"/></g><g transform="translate(607.9 864.6)"><path d="M0 0C-2.6 -5.2 -11.4 -11 -11.4 -21A11.4 11.4 0 1 1 11.4 -21C11.4 -11 2.6 -5.2 0 0Z" fill="#15a4b9"/><path d="M-6.5 -25h3l1-1.6h5l1 1.6h3v8.4h-13z" fill="#fff"/><circle cx="0" cy="-20.6" r="2.5" fill="#15a4b9"/></g><g transform="translate(781.3 819.8)"><path d="M0 0C-2.6 -5.2 -11.4 -11 -11.4 -21A11.4 11.4 0 1 1 11.4 -21C11.4 -11 2.6 -5.2 0 0Z" fill="#15a4b9"/><path d="M-1.2 -29h2.4l1.2 10h-4.8zM-4.5 -17.5h9v2.6h-9z" fill="#fff"/></g><g transform="translate(942.6 746.5)"><path d="M0 0C-2.6 -5.2 -11.4 -11 -11.4 -21A11.4 11.4 0 1 1 11.4 -21C11.4 -11 2.6 -5.2 0 0Z" fill="#15a4b9"/><path d="M-5 -28h2.4v2h1.6v-2h2v2h1.6v-2h2.4v4.6l-1.6 1.2v5h2.2v2.6h-11.2v-2.6h2.2v-5l-1.6-1.2z" fill="#fff"/></g><g transform="translate(681.2 955)"><path d="M0 0C-2.6 -5.2 -11.4 -11 -11.4 -21A11.4 11.4 0 1 1 11.4 -21C11.4 -11 2.6 -5.2 0 0Z" fill="#15a4b9"/><path d="M-5 -28h2.4v2h1.6v-2h2v2h1.6v-2h2.4v4.6l-1.6 1.2v5h2.2v2.6h-11.2v-2.6h2.2v-5l-1.6-1.2z" fill="#fff"/></g><g transform="translate(946 474.4)"><path d="M0 0C-2.6 -5.2 -12.2 -11 -12.2 -21A12.2 12.2 0 1 1 12.2 -21C12.2 -11 2.6 -5.2 0 0Z" fill="#ee4f83"/><path d="M-6.5 -25.5v9M-6.5 -19.5h13v3M-4.4 -22.4h2.4M-0.6 -22.8h4.8a2.3 2.3 0 0 1 2.3 2.3v1" stroke="#fff" stroke-width="1.6" fill="none"/></g><g transform="translate(947.3 527.4)"><path d="M0 0C-2.6 -5.2 -12.2 -11 -12.2 -21A12.2 12.2 0 1 1 12.2 -21C12.2 -11 2.6 -5.2 0 0Z" fill="#e9594c"/><path d="M-4 -27v11M4 -27v11M-4 -21.5h8" stroke="#fff" stroke-width="2.2" fill="none"/></g><g transform="translate(1053.2 552)"><path d="M0 0C-2.6 -5.2 -11.4 -11 -11.4 -21A11.4 11.4 0 1 1 11.4 -21C11.4 -11 2.6 -5.2 0 0Z" fill="#35a355"/><path d="M0 -29l4.6 6h-2.2l3.6 5h-4.6v3.4h-2.8v-3.4h-4.6l3.6-5h-2.2z" fill="#fff"/></g><g transform="translate(1009.3 902.6)"><path d="M0 0C-2.6 -5.2 -12 -11 -12 -21A12 12 0 1 1 12 -21C12 -11 2.6 -5.2 0 0Z" fill="#35a355"/><circle cx="0" cy="-21" r="4" fill="#fff"/></g><g transform="translate(625.6 766.4)"><path d="M0 0C-2.6 -5.2 -11.4 -11 -11.4 -21A11.4 11.4 0 1 1 11.4 -21C11.4 -11 2.6 -5.2 0 0Z" fill="#4285f4"/><path d="M-5.4 -23h10.8v8h-10.8z" fill="#fff"/><path d="M-2.6 -23v-1.6a2.6 2.6 0 0 1 5.2 0v1.6" stroke="#fff" stroke-width="1.3" fill="none"/><circle cx="0" cy="-19" r="1.6" fill="#4285f4"/></g><g transform="translate(624 477.4)"><rect width="15.4" height="15.4" rx="2.4" fill="#2a7be4"/><path d="M4.2 3.4h7a1 1 0 0 1 1 1v6.2a1 1 0 0 1 -1 1h-7a1 1 0 0 1 -1-1v-6.2a1 1 0 0 1 1-1z" fill="#fff"/><path d="M4.4 5h2.8v2.6h-2.8zM8.2 5h2.8v2.6h-2.8z" fill="#2a7be4"/><circle cx="5.3" cy="9.9" r=".8" fill="#2a7be4"/><circle cx="10.1" cy="9.9" r=".8" fill="#2a7be4"/><path d="M4.6 11.6l-1 1.6M10.8 11.6l1 1.6" stroke="#fff" stroke-width="1.1"/></g><g transform="translate(835 442)"><rect width="15.4" height="15.4" rx="2.4" fill="#2a7be4"/><path d="M4.2 3.4h7a1 1 0 0 1 1 1v6.2a1 1 0 0 1 -1 1h-7a1 1 0 0 1 -1-1v-6.2a1 1 0 0 1 1-1z" fill="#fff"/><path d="M4.4 5h2.8v2.6h-2.8zM8.2 5h2.8v2.6h-2.8z" fill="#2a7be4"/><circle cx="5.3" cy="9.9" r=".8" fill="#2a7be4"/><circle cx="10.1" cy="9.9" r=".8" fill="#2a7be4"/><path d="M4.6 11.6l-1 1.6M10.8 11.6l1 1.6" stroke="#fff" stroke-width="1.1"/></g><g transform="translate(870 482)"><rect width="15.4" height="15.4" rx="2.4" fill="#2a7be4"/><path d="M4.2 3.4h7a1 1 0 0 1 1 1v6.2a1 1 0 0 1 -1 1h-7a1 1 0 0 1 -1-1v-6.2a1 1 0 0 1 1-1z" fill="#fff"/><path d="M4.4 5h2.8v2.6h-2.8zM8.2 5h2.8v2.6h-2.8z" fill="#2a7be4"/><circle cx="5.3" cy="9.9" r=".8" fill="#2a7be4"/><circle cx="10.1" cy="9.9" r=".8" fill="#2a7be4"/><path d="M4.6 11.6l-1 1.6M10.8 11.6l1 1.6" stroke="#fff" stroke-width="1.1"/></g><g transform="translate(586 870)"><rect width="15.4" height="15.4" rx="2.4" fill="#2a7be4"/><path d="M4.2 3.4h7a1 1 0 0 1 1 1v6.2a1 1 0 0 1 -1 1h-7a1 1 0 0 1 -1-1v-6.2a1 1 0 0 1 1-1z" fill="#fff"/><path d="M4.4 5h2.8v2.6h-2.8zM8.2 5h2.8v2.6h-2.8z" fill="#2a7be4"/><circle cx="5.3" cy="9.9" r=".8" fill="#2a7be4"/><circle cx="10.1" cy="9.9" r=".8" fill="#2a7be4"/><path d="M4.6 11.6l-1 1.6M10.8 11.6l1 1.6" stroke="#fff" stroke-width="1.1"/></g><g transform="translate(978 833)"><rect width="15.4" height="15.4" rx="2.4" fill="#2a7be4"/><path d="M4.2 3.4h7a1 1 0 0 1 1 1v6.2a1 1 0 0 1 -1 1h-7a1 1 0 0 1 -1-1v-6.2a1 1 0 0 1 1-1z" fill="#fff"/><path d="M4.4 5h2.8v2.6h-2.8zM8.2 5h2.8v2.6h-2.8z" fill="#2a7be4"/><circle cx="5.3" cy="9.9" r=".8" fill="#2a7be4"/><circle cx="10.1" cy="9.9" r=".8" fill="#2a7be4"/><path d="M4.6 11.6l-1 1.6M10.8 11.6l1 1.6" stroke="#fff" stroke-width="1.1"/></g><g transform="translate(1032 889)"><rect width="15.4" height="15.4" rx="2.4" fill="#2a7be4"/><path d="M4.2 3.4h7a1 1 0 0 1 1 1v6.2a1 1 0 0 1 -1 1h-7a1 1 0 0 1 -1-1v-6.2a1 1 0 0 1 1-1z" fill="#fff"/><path d="M4.4 5h2.8v2.6h-2.8zM8.2 5h2.8v2.6h-2.8z" fill="#2a7be4"/><circle cx="5.3" cy="9.9" r=".8" fill="#2a7be4"/><circle cx="10.1" cy="9.9" r=".8" fill="#2a7be4"/><path d="M4.6 11.6l-1 1.6M10.8 11.6l1 1.6" stroke="#fff" stroke-width="1.1"/></g><g transform="translate(586.5 870.5)"><rect width="15.4" height="15.4" rx="2.4" fill="#2a7be4"/><path d="M4.2 3.4h7a1 1 0 0 1 1 1v6.2a1 1 0 0 1 -1 1h-7a1 1 0 0 1 -1-1v-6.2a1 1 0 0 1 1-1z" fill="#fff"/><path d="M4.4 5h2.8v2.6h-2.8zM8.2 5h2.8v2.6h-2.8z" fill="#2a7be4"/><circle cx="5.3" cy="9.9" r=".8" fill="#2a7be4"/><circle cx="10.1" cy="9.9" r=".8" fill="#2a7be4"/><path d="M4.6 11.6l-1 1.6M10.8 11.6l1 1.6" stroke="#fff" stroke-width="1.1"/></g><g transform="translate(657.8 498.3)"><circle r="4.4" fill="#fff" stroke="#1f2a7a" stroke-width="1.4"/><path d="M-4 0h8" stroke="#1f2a7a" stroke-width="2.2"/></g><g transform="translate(859.5 448.4)"><circle r="4.4" fill="#fff" stroke="#1f2a7a" stroke-width="1.4"/><path d="M-4 0h8" stroke="#1f2a7a" stroke-width="2.2"/></g><g transform="translate(864 489.5)"><circle r="4.4" fill="#fff" stroke="#1f2a7a" stroke-width="1.4"/><path d="M-4 0h8" stroke="#1f2a7a" stroke-width="2.2"/></g><g transform="translate(459.8 644.3)"><circle r="4.4" fill="#fff" stroke="#1f2a7a" stroke-width="1.4"/><path d="M-4 0h8" stroke="#1f2a7a" stroke-width="2.2"/></g><g transform="translate(555.9 649.7)"><circle r="4.4" fill="#fff" stroke="#1f2a7a" stroke-width="1.4"/><path d="M-4 0h8" stroke="#1f2a7a" stroke-width="2.2"/></g><g transform="translate(633.2 665)"><circle r="4.4" fill="#fff" stroke="#1f2a7a" stroke-width="1.4"/><path d="M-4 0h8" stroke="#1f2a7a" stroke-width="2.2"/></g><g transform="translate(785.3 651.5)"><circle r="4.4" fill="#fff" stroke="#1f2a7a" stroke-width="1.4"/><path d="M-4 0h8" stroke="#1f2a7a" stroke-width="2.2"/></g><g transform="translate(769.5 738.8)"><circle r="4.4" fill="#fff" stroke="#1f2a7a" stroke-width="1.4"/><path d="M-4 0h8" stroke="#1f2a7a" stroke-width="2.2"/></g><g transform="translate(972.4 840.5)"><circle r="4.4" fill="#fff" stroke="#1f2a7a" stroke-width="1.4"/><path d="M-4 0h8" stroke="#1f2a7a" stroke-width="2.2"/></g><polyline points="511.9,520.5 553.8,543.5 555.5,534.4 576.8,527.3 577.4,519.2 566.6,507.0" fill="none" stroke="#2c41e2" stroke-width="3.1" stroke-linejoin="round" stroke-linecap="round" /><polyline points="572.7,507.0 591.6,511.0 606.5,538.0" fill="none" stroke="#2c41e2" stroke-width="3.1" stroke-linejoin="round" stroke-linecap="round" /><polyline points="467.3,553.0 461.9,561.0 497.0,596.2 513.2,581.4 524.0,573.2 576.8,600.3 614.6,602.3 644.3,615.1 657.8,594.9 666.5,581.2 689.0,587.3" fill="none" stroke="#2c41e2" stroke-width="3.1" stroke-linejoin="round" stroke-linecap="round" /><polyline points="441.6,543.5 451.0,547.6 453.8,540.8 445.7,539.5 441.6,543.5" fill="none" stroke="#2c41e2" stroke-width="3.1" stroke-linejoin="round" stroke-linecap="round" /><polyline points="429.5,528.0 436.0,530.6" fill="none" stroke="#2c41e2" stroke-width="3.1" stroke-linejoin="round" stroke-linecap="round" /><polyline points="482.2,554.3 493.0,559.7" fill="none" stroke="#2c41e2" stroke-width="3.1" stroke-linejoin="round" stroke-linecap="round" /><polyline points="587.6,566.5 591.6,555.7" fill="none" stroke="#2c41e2" stroke-width="3.1" stroke-linejoin="round" stroke-linecap="round" /><polyline points="589.0,567.8 617.3,580.7 621.4,571.9 660.0,562.4" fill="none" stroke="#2c41e2" stroke-width="3.1" stroke-linejoin="round" stroke-linecap="round" /><polyline points="524.0,573.2 589.0,592.2 614.6,602.3" fill="none" stroke="#2c41e2" stroke-width="3.1" stroke-linejoin="round" stroke-linecap="round" /><polyline points="603.0,574.5 617.0,581.6" fill="none" stroke="#2c41e2" stroke-width="3.1" stroke-linejoin="round" stroke-linecap="round" /><polyline points="702.1,550.8 722.1,544.7 724.7,536.0" fill="none" stroke="#a87df3" stroke-width="3" stroke-linejoin="round" stroke-linecap="round" /><polyline points="733.4,530.0 730.8,539.5 790.0,556.9 893.4,584.2 911.8,600.0 914.4,598.3 1022.5,694.9 1000.0,708.4 950.9,743.8 927.2,740.3 897.7,728.5" fill="none" stroke="#a87df3" stroke-width="3" stroke-linejoin="round" stroke-linecap="round" /><polyline points="690.8,583.8 692.5,597.7 698.0,612.0" fill="none" stroke="#a87df3" stroke-width="3" stroke-linejoin="round" stroke-linecap="round" /><polyline points="720.3,642.9 744.7,653.3 735.6,683.4 770.0,695.4 881.1,752.1 895.3,730.8 901.2,723.7 888.0,721.0 897.7,728.5" fill="none" stroke="#a87df3" stroke-width="3" stroke-linejoin="round" stroke-linecap="round" /><polyline points="800.7,702.5 814.9,697.7 836.2,702.5 827.9,723.7" fill="none" stroke="#a87df3" stroke-width="3" stroke-linejoin="round" stroke-linecap="round" /><polyline points="845.7,732.0 852.7,719.0 857.5,711.9" fill="none" stroke="#a87df3" stroke-width="3" stroke-linejoin="round" stroke-linecap="round" /><polyline points="864.6,720.2 872.8,720.8 866.9,727.3 864.6,720.2" fill="none" stroke="#a87df3" stroke-width="3" stroke-linejoin="round" stroke-linecap="round" /><polyline points="872.8,721.4 857.5,750.9 850.0,762.0" fill="none" stroke="#a87df3" stroke-width="3" stroke-linejoin="round" stroke-linecap="round" /><polyline points="807.8,720.2 816.1,727.3 820.8,746.2 817.3,767.5 836.2,769.8" fill="none" stroke="#a87df3" stroke-width="3" stroke-linejoin="round" stroke-linecap="round" /><polyline points="816.1,727.3 826.0,742.0" fill="none" stroke="#a87df3" stroke-width="3" stroke-linejoin="round" stroke-linecap="round" /><polyline points="836.2,786.4 845.7,792.3 851.6,786.4 843.3,784.0 836.2,786.4" fill="none" stroke="#a87df3" stroke-width="3" stroke-linejoin="round" stroke-linecap="round" /><polyline points="920.0,755.0 923.6,743.8 927.2,742.6 925.0,752.0 933.0,746.0 936.0,742.6 939.0,746.0" fill="none" stroke="#a87df3" stroke-width="3" stroke-linejoin="round" stroke-linecap="round" /><polyline points="1022.5,694.9 1008.0,688.0" fill="none" stroke="#a87df3" stroke-width="3" stroke-linejoin="round" stroke-linecap="round" /><g transform="translate(440.3 537.4)"><path d="M0 0C-1.6 -2.6 -7.6 -8.4 -10.9 -12.8A14 14 0 1 1 10.9 -12.8C7.6 -8.4 1.6 -2.6 0 0Z" fill="#2b48e8" stroke="#0d0b2a" stroke-width="1.5"/><text x="0" y="-12.4" text-anchor="middle" class="pn">1</text></g><g transform="translate(449.7 534)"><path d="M0 0C-1.6 -2.6 -7.6 -8.4 -10.9 -12.8A14 14 0 1 1 10.9 -12.8C7.6 -8.4 1.6 -2.6 0 0Z" fill="#2b48e8" stroke="#0d0b2a" stroke-width="1.5"/><text x="0" y="-12.4" text-anchor="middle" class="pn">11</text></g><g transform="translate(468.6 551.6)"><path d="M0 0C-1.6 -2.6 -7.6 -8.4 -10.9 -12.8A14 14 0 1 1 10.9 -12.8C7.6 -8.4 1.6 -2.6 0 0Z" fill="#2b48e8" stroke="#0d0b2a" stroke-width="1.5"/></g><g transform="translate(479.5 556.4)"><path d="M0 0C-1.6 -2.6 -7.6 -8.4 -10.9 -12.8A14 14 0 1 1 10.9 -12.8C7.6 -8.4 1.6 -2.6 0 0Z" fill="#2b48e8" stroke="#0d0b2a" stroke-width="1.5"/></g><g transform="translate(494.3 554.3)"><path d="M0 0C-1.6 -2.6 -7.6 -8.4 -10.9 -12.8A14 14 0 1 1 10.9 -12.8C7.6 -8.4 1.6 -2.6 0 0Z" fill="#2b48e8" stroke="#0d0b2a" stroke-width="1.5"/></g><g transform="translate(459.2 547.6)"><path d="M0 0C-1.6 -2.6 -7.6 -8.4 -10.9 -12.8A14 14 0 1 1 10.9 -12.8C7.6 -8.4 1.6 -2.6 0 0Z" fill="#2b48e8" stroke="#0d0b2a" stroke-width="1.5"/><text x="0" y="-12.4" text-anchor="middle" class="pn">1</text></g><g transform="translate(469.3 541.5)"><path d="M0 0C-1.6 -2.6 -7.6 -8.4 -10.9 -12.8A14 14 0 1 1 10.9 -12.8C7.6 -8.4 1.6 -2.6 0 0Z" fill="#2b48e8" stroke="#0d0b2a" stroke-width="1.5"/><text x="0" y="-12.4" text-anchor="middle" class="pn">11</text></g><g transform="translate(489.6 544.9)"><path d="M0 0C-1.6 -2.6 -7.6 -8.4 -10.9 -12.8A14 14 0 1 1 10.9 -12.8C7.6 -8.4 1.6 -2.6 0 0Z" fill="#2b48e8" stroke="#0d0b2a" stroke-width="1.5"/><text x="0" y="-12.4" text-anchor="middle" class="pn">15</text></g><g transform="translate(506.5 521.2)"><path d="M0 0C-1.6 -2.6 -7.6 -8.4 -10.9 -12.8A14 14 0 1 1 10.9 -12.8C7.6 -8.4 1.6 -2.6 0 0Z" fill="#2b48e8" stroke="#0d0b2a" stroke-width="1.5"/><text x="0" y="-12.4" text-anchor="middle" class="pn">16</text></g><g transform="translate(513.2 573.2)"><path d="M0 0C-1.6 -2.6 -7.6 -8.4 -10.9 -12.8A14 14 0 1 1 10.9 -12.8C7.6 -8.4 1.6 -2.6 0 0Z" fill="#2b48e8" stroke="#0d0b2a" stroke-width="1.5"/></g><g transform="translate(513.9 578)"><path d="M0 0C-1.6 -2.6 -7.6 -8.4 -10.9 -12.8A14 14 0 1 1 10.9 -12.8C7.6 -8.4 1.6 -2.6 0 0Z" fill="#2b48e8" stroke="#0d0b2a" stroke-width="1.5"/><text x="0" y="-12.4" text-anchor="middle" class="pn">4</text></g><g transform="translate(570 507)"><path d="M0 0C-1.6 -2.6 -7.6 -8.4 -10.9 -12.8A14 14 0 1 1 10.9 -12.8C7.6 -8.4 1.6 -2.6 0 0Z" fill="#2b48e8" stroke="#0d0b2a" stroke-width="1.5"/></g><g transform="translate(576.8 505)"><path d="M0 0C-1.6 -2.6 -7.6 -8.4 -10.9 -12.8A14 14 0 1 1 10.9 -12.8C7.6 -8.4 1.6 -2.6 0 0Z" fill="#2b48e8" stroke="#0d0b2a" stroke-width="1.5"/><text x="0" y="-12.4" text-anchor="middle" class="pn">18</text></g><g transform="translate(605.1 574.6)"><path d="M0 0C-1.6 -2.6 -7.6 -8.4 -10.9 -12.8A14 14 0 1 1 10.9 -12.8C7.6 -8.4 1.6 -2.6 0 0Z" fill="#2b48e8" stroke="#0d0b2a" stroke-width="1.5"/><text x="0" y="-12.4" text-anchor="middle" class="pn">19</text></g><g transform="translate(559.2 559.7)"><path d="M-13.4 2C-13 12 -5 18 -2.6 25C0 18 13 12 13.4 2Z" fill="#2b48e8"/><circle r="11.8" fill="#fff" stroke="#2b48e8" stroke-width="3.4"/><path d="M-6 2.6v-3l1.6-4h8.8l1.6 4v3M-6.4 -0.6h12.8M-4.6 2.4h9.2" stroke="#2b48e8" stroke-width="1.6" fill="none"/></g><g transform="translate(576.8 600.3)"><path d="M0 0C-1.6 -2.6 -7.6 -8.4 -10.9 -12.8A14 14 0 1 1 10.9 -12.8C7.6 -8.4 1.6 -2.6 0 0Z" fill="#2b48e8" stroke="#0d0b2a" stroke-width="1.5"/><text x="0" y="-12.4" text-anchor="middle" class="pn">1</text></g><g transform="translate(690 558)"><path d="M0 0C-1.6 -2.6 -7.6 -8.4 -10.9 -12.8A14 14 0 1 1 10.9 -12.8C7.6 -8.4 1.6 -2.6 0 0Z" fill="#2b48e8" stroke="#0d0b2a" stroke-width="1.5"/></g><g transform="translate(680.4 556)"><path d="M0 0C-1.6 -2.6 -7.6 -8.4 -10.9 -12.8A14 14 0 1 1 10.9 -12.8C7.6 -8.4 1.6 -2.6 0 0Z" fill="#b27ff8" stroke="#0d0b2a" stroke-width="1.5"/></g><g transform="translate(676.9 563)"><path d="M0 0C-1.6 -2.6 -7.6 -8.4 -10.9 -12.8A14 14 0 1 1 10.9 -12.8C7.6 -8.4 1.6 -2.6 0 0Z" fill="#b27ff8" stroke="#0d0b2a" stroke-width="1.5"/><text x="0" y="-12.4" text-anchor="middle" class="pn">2</text></g><g transform="translate(693.4 582)"><path d="M0 0C-1.6 -2.6 -7.6 -8.4 -10.9 -12.8A14 14 0 1 1 10.9 -12.8C7.6 -8.4 1.6 -2.6 0 0Z" fill="#2b48e8" stroke="#0d0b2a" stroke-width="1.5"/></g><g transform="translate(688.2 583)"><path d="M0 0C-1.6 -2.6 -7.6 -8.4 -10.9 -12.8A14 14 0 1 1 10.9 -12.8C7.6 -8.4 1.6 -2.6 0 0Z" fill="#2b48e8" stroke="#0d0b2a" stroke-width="1.5"/><text x="0" y="-12.4" text-anchor="middle" class="pn">24</text></g><g transform="translate(670.8 576.9)"><path d="M0 0C-1.6 -2.6 -7.6 -8.4 -10.9 -12.8A14 14 0 1 1 10.9 -12.8C7.6 -8.4 1.6 -2.6 0 0Z" fill="#b27ff8" stroke="#0d0b2a" stroke-width="1.5"/><text x="0" y="-12.4" text-anchor="middle" class="pn">23</text></g><g transform="translate(723.8 536.2)"><path d="M0 0C-1.6 -2.6 -7.6 -8.4 -10.9 -12.8A14 14 0 1 1 10.9 -12.8C7.6 -8.4 1.6 -2.6 0 0Z" fill="#b27ff8" stroke="#0d0b2a" stroke-width="1.5"/><text x="0" y="-12.4" text-anchor="middle" class="pn">17</text></g><g transform="translate(703 629)"><path d="M0 0C-1.6 -2.6 -7.6 -8.4 -10.9 -12.8A14 14 0 1 1 10.9 -12.8C7.6 -8.4 1.6 -2.6 0 0Z" fill="#b27ff8" stroke="#0d0b2a" stroke-width="1.5"/></g><g transform="translate(698.6 639.4)"><path d="M0 0C-1.6 -2.6 -7.6 -8.4 -10.9 -12.8A14 14 0 1 1 10.9 -12.8C7.6 -8.4 1.6 -2.6 0 0Z" fill="#b27ff8" stroke="#0d0b2a" stroke-width="1.5"/><text x="0" y="-12.4" text-anchor="middle" class="pn">2</text></g><g transform="translate(712.5 648.6)"><path d="M0 0C-1.6 -2.6 -7.6 -8.4 -10.9 -12.8A14 14 0 1 1 10.9 -12.8C7.6 -8.4 1.6 -2.6 0 0Z" fill="#b27ff8" stroke="#0d0b2a" stroke-width="1.5"/><text x="0" y="-12.4" text-anchor="middle" class="pn">3</text></g><g transform="translate(828.6 699.6)"><path d="M0 0C-1.6 -2.6 -7.6 -8.4 -10.9 -12.8A14 14 0 1 1 10.9 -12.8C7.6 -8.4 1.6 -2.6 0 0Z" fill="#b27ff8" stroke="#0d0b2a" stroke-width="1.5"/><text x="0" y="-12.4" text-anchor="middle" class="pn">6</text></g><g transform="translate(848.6 709)"><path d="M0 0C-1.6 -2.6 -7.6 -8.4 -10.9 -12.8A14 14 0 1 1 10.9 -12.8C7.6 -8.4 1.6 -2.6 0 0Z" fill="#b27ff8" stroke="#0d0b2a" stroke-width="1.5"/><text x="0" y="-12.4" text-anchor="middle" class="pn">7</text></g><g transform="translate(860.9 712.5)"><path d="M0 0C-1.6 -2.6 -7.6 -8.4 -10.9 -12.8A14 14 0 1 1 10.9 -12.8C7.6 -8.4 1.6 -2.6 0 0Z" fill="#b27ff8" stroke="#0d0b2a" stroke-width="1.5"/><text x="0" y="-12.4" text-anchor="middle" class="pn">8</text></g><g transform="translate(878.4 723)"><path d="M0 0C-1.6 -2.6 -7.6 -8.4 -10.9 -12.8A14 14 0 1 1 10.9 -12.8C7.6 -8.4 1.6 -2.6 0 0Z" fill="#b27ff8" stroke="#0d0b2a" stroke-width="1.5"/></g><g transform="translate(869.6 716.6)"><path d="M0 0C-1.6 -2.6 -7.6 -8.4 -10.9 -12.8A14 14 0 1 1 10.9 -12.8C7.6 -8.4 1.6 -2.6 0 0Z" fill="#b27ff8" stroke="#0d0b2a" stroke-width="1.5"/><text x="0" y="-12.4" text-anchor="middle" class="pn">10</text></g><g transform="translate(893.4 722)"><path d="M0 0C-1.6 -2.6 -7.6 -8.4 -10.9 -12.8A14 14 0 1 1 10.9 -12.8C7.6 -8.4 1.6 -2.6 0 0Z" fill="#b27ff8" stroke="#0d0b2a" stroke-width="1.5"/><text x="0" y="-12.4" text-anchor="middle" class="pn">11</text></g><g transform="translate(922.5 741.2)"><path d="M0 0C-1.6 -2.6 -7.6 -8.4 -10.9 -12.8A14 14 0 1 1 10.9 -12.8C7.6 -8.4 1.6 -2.6 0 0Z" fill="#b27ff8" stroke="#0d0b2a" stroke-width="1.5"/></g><g transform="translate(925.8 741.4)"><path d="M0 0C-1.6 -2.6 -7.6 -8.4 -10.9 -12.8A14 14 0 1 1 10.9 -12.8C7.6 -8.4 1.6 -2.6 0 0Z" fill="#b27ff8" stroke="#0d0b2a" stroke-width="1.5"/></g><g transform="translate(929.4 741.4)"><path d="M0 0C-1.6 -2.6 -7.6 -8.4 -10.9 -12.8A14 14 0 1 1 10.9 -12.8C7.6 -8.4 1.6 -2.6 0 0Z" fill="#b27ff8" stroke="#0d0b2a" stroke-width="1.5"/><text x="0" y="-12.4" text-anchor="middle" class="pn">13</text></g><g transform="translate(952.2 742.4)"><path d="M0 0C-1.6 -2.6 -7.6 -8.4 -10.9 -12.8A14 14 0 1 1 10.9 -12.8C7.6 -8.4 1.6 -2.6 0 0Z" fill="#b27ff8" stroke="#0d0b2a" stroke-width="1.5"/><text x="0" y="-12.4" text-anchor="middle" class="pn">1</text></g><g transform="translate(956.6 733.8)"><path d="M0 0C-1.6 -2.6 -7.6 -8.4 -10.9 -12.8A14 14 0 1 1 10.9 -12.8C7.6 -8.4 1.6 -2.6 0 0Z" fill="#b27ff8" stroke="#0d0b2a" stroke-width="1.5"/><text x="0" y="-12.4" text-anchor="middle" class="pn">15</text></g><g transform="translate(995.2 711.2)"><path d="M0 0C-1.6 -2.6 -7.6 -8.4 -10.9 -12.8A14 14 0 1 1 10.9 -12.8C7.6 -8.4 1.6 -2.6 0 0Z" fill="#b27ff8" stroke="#0d0b2a" stroke-width="1.5"/><text x="0" y="-12.4" text-anchor="middle" class="pn">16</text></g><g transform="translate(846.8 786)"><path d="M0 0C-1.6 -2.6 -7.6 -8.4 -10.9 -12.8A14 14 0 1 1 10.9 -12.8C7.6 -8.4 1.6 -2.6 0 0Z" fill="#b27ff8" stroke="#0d0b2a" stroke-width="1.5"/></g><g transform="translate(838 786)"><path d="M0 0C-1.6 -2.6 -7.6 -8.4 -10.9 -12.8A14 14 0 1 1 10.9 -12.8C7.6 -8.4 1.6 -2.6 0 0Z" fill="#b27ff8" stroke="#0d0b2a" stroke-width="1.5"/><text x="0" y="-12.4" text-anchor="middle" class="pn">5</text></g></svg>
<div style="left:1019.2px;top:382px;width:39.8px;height:60.6px;background:#0b65b0"></div>
<svg style="left:1019.6px;top:382px;" width="39.4" height="60.6" viewBox="0 0 39.4 60.6"><path d="M15.2 17.6V42.2L26.6 29.9Z" fill="none" stroke="#fff" stroke-width="2" stroke-linejoin="miter"/></svg>
<div style="left:997.8px;top:744.8px;width:48.2px;height:97.6px;background:#fff;border-radius:3px;box-shadow:0 1px 4px rgba(0,0,0,.3)"></div>
<svg style="left:997.8px;top:744.8px;" width="48.2" height="97.6" viewBox="0 0 48.2 97.6"><path d="M24.2 13.4v20.8M13.8 23.8h20.8M13.8 73.6h20.8" stroke="#666" stroke-width="3.6"/><path d="M7 48.6h34" stroke="#e6e6e6" stroke-width="1"/></svg>
</div></div>
</body></html>
